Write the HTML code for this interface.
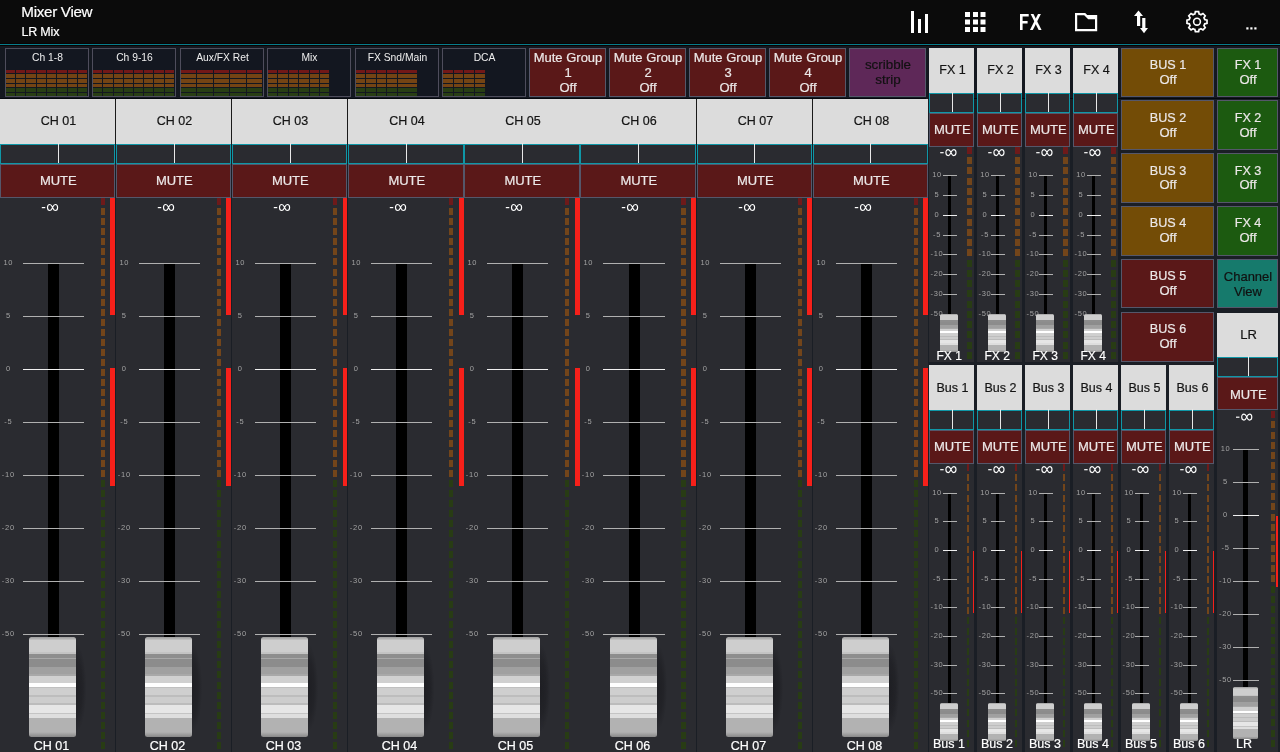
<!DOCTYPE html>
<html><head><meta charset="utf-8"><style>
html,body{margin:0;padding:0;width:1280px;height:752px;overflow:hidden;background:#2a2b30;}
body{position:relative;font-family:"Liberation Sans", sans-serif;}
#w{position:absolute;left:0;top:0;width:1280px;height:752px;will-change:transform;}
#w>div,#w>svg{position:absolute;}
</style></head><body><div id="w">
<div style="left:0px;top:0px;width:1280px;height:43px;background:#0b0b0b;"></div>
<div style="left:0px;top:43px;width:1280px;height:1px;background:#0a0303;"></div>
<div style="left:0px;top:44px;width:1280px;height:1px;background:#077c8b;"></div>
<div style="left:0px;top:45px;width:1280px;height:1px;background:#0a0303;"></div>
<div style="left:0px;top:46px;width:1280px;height:52px;background:#141820;"></div>
<div style="left:0px;top:98px;width:1280px;height:1px;background:#05080e;"></div>
<div style="left:21.30px;top:4.11px;width:120px;height:15.2px;line-height:15.2px;font-size:15.2px;color:#fff;text-align:left;white-space:nowrap;-webkit-text-stroke:0.2px #fff;letter-spacing:-0.3px;">Mixer View</div>
<div style="left:21.50px;top:25.73px;width:120px;height:12.5px;line-height:12.5px;font-size:12.5px;color:#fff;text-align:left;white-space:nowrap;-webkit-text-stroke:0.2px #fff;letter-spacing:-0.2px;">LR Mix</div>
<svg style="left:0;top:0;width:1280px;height:44px" width="1280" height="44">
 <g fill="#fff">
  <rect x="911" y="11" width="3" height="22"/>
  <rect x="918" y="19" width="3" height="14"/>
  <rect x="925" y="14" width="3" height="19"/>
  <rect x="965" y="12" width="5" height="5"/><rect x="973" y="12" width="5" height="5"/><rect x="980.5" y="12" width="5" height="5"/>
  <rect x="965" y="19.5" width="5" height="5"/><rect x="973" y="19.5" width="5" height="5"/><rect x="980.5" y="19.5" width="5" height="5"/>
  <rect x="965" y="27" width="5" height="5"/><rect x="973" y="27" width="5" height="5"/><rect x="980.5" y="27" width="5" height="5"/>
  <path d="M1020 14 H1028.7 V16.6 H1022.6 V21 H1027.6 V23.5 H1022.6 V30 H1020 Z"/>
  <path d="M1030.6 14 H1033.5 L1041.55 30 H1038.65 Z"/><path d="M1038 14 H1040.9 L1032.85 30 H1029.95 Z"/>
  <path d="M1134 16 L1138.5 10.5 L1143 16 L1140.2 16 L1140.2 26 L1137 26 L1137 16 Z"/>
  <path d="M1140 28 L1142.2 28 L1142.2 18 L1145.4 18 L1145.4 28 L1148 28 L1144 33.2 Z"/>
  <rect x="1246.3" y="27.3" width="2.2" height="2.2"/><rect x="1250.3" y="27.3" width="2.2" height="2.2"/><rect x="1254.3" y="27.3" width="2.2" height="2.2"/>
  <path fill-rule="evenodd" d="M1075 13 H1085.2 L1087.2 15 H1097.2 V31.2 H1075 Z M1077.2 15.2 H1084.2 L1088.2 19.3 H1095 V29 H1077.2 Z"/>
 </g>
 <path d="M1194.87 13.99 L1195.38 11.68 L1198.62 11.68 L1199.13 13.99 A8.0 8.0 0 0 1 1200.94 14.74 L1202.94 13.47 L1205.23 15.76 L1203.96 17.76 A8.0 8.0 0 0 1 1204.71 19.57 L1207.02 20.08 L1207.02 23.32 L1204.71 23.83 A8.0 8.0 0 0 1 1203.96 25.64 L1205.23 27.64 L1202.94 29.93 L1200.94 28.66 A8.0 8.0 0 0 1 1199.13 29.41 L1198.62 31.72 L1195.38 31.72 L1194.87 29.41 A8.0 8.0 0 0 1 1193.06 28.66 L1191.06 29.93 L1188.77 27.64 L1190.04 25.64 A8.0 8.0 0 0 1 1189.29 23.83 L1186.98 23.32 L1186.98 20.08 L1189.29 19.57 A8.0 8.0 0 0 1 1190.04 17.76 L1188.77 15.76 L1191.06 13.47 L1193.06 14.74 A8.0 8.0 0 0 1 1194.87 13.99 Z" fill="none" stroke="#fff" stroke-width="1.7"/>
 <circle cx="1197" cy="21.7" r="3.4" fill="none" stroke="#fff" stroke-width="1.6"/>
</svg>
<div style="left:5px;top:48px;width:84px;height:49px;background:#131720;box-sizing:border-box;border:1px solid #4e4d5c;"></div>
<div style="left:5.50px;top:52.99px;width:84px;height:10.3px;line-height:10.3px;font-size:10.3px;color:#eee;text-align:center;white-space:nowrap;-webkit-text-stroke:0.2px #eee;-webkit-text-stroke:0;">Ch 1-8</div>
<div style="left:6px;top:70px;width:9px;height:3px;background:#721818"></div>
<div style="left:6px;top:74px;width:9px;height:4px;background:#744414"></div>
<div style="left:6px;top:79px;width:9px;height:4px;background:#744414"></div>
<div style="left:6px;top:84px;width:9px;height:3px;background:#744414"></div>
<div style="left:6px;top:88px;width:9px;height:4px;background:#283e14"></div>
<div style="left:6px;top:93px;width:9px;height:3px;background:#283e14"></div>
<div style="left:16px;top:70px;width:9px;height:3px;background:#721818"></div>
<div style="left:16px;top:74px;width:9px;height:4px;background:#744414"></div>
<div style="left:16px;top:79px;width:9px;height:4px;background:#744414"></div>
<div style="left:16px;top:84px;width:9px;height:3px;background:#744414"></div>
<div style="left:16px;top:88px;width:9px;height:4px;background:#283e14"></div>
<div style="left:16px;top:93px;width:9px;height:3px;background:#283e14"></div>
<div style="left:26px;top:70px;width:10px;height:3px;background:#721818"></div>
<div style="left:26px;top:74px;width:10px;height:4px;background:#744414"></div>
<div style="left:26px;top:79px;width:10px;height:4px;background:#744414"></div>
<div style="left:26px;top:84px;width:10px;height:3px;background:#744414"></div>
<div style="left:26px;top:88px;width:10px;height:4px;background:#283e14"></div>
<div style="left:26px;top:93px;width:10px;height:3px;background:#283e14"></div>
<div style="left:37px;top:70px;width:9px;height:3px;background:#721818"></div>
<div style="left:37px;top:74px;width:9px;height:4px;background:#744414"></div>
<div style="left:37px;top:79px;width:9px;height:4px;background:#744414"></div>
<div style="left:37px;top:84px;width:9px;height:3px;background:#744414"></div>
<div style="left:37px;top:88px;width:9px;height:4px;background:#283e14"></div>
<div style="left:37px;top:93px;width:9px;height:3px;background:#283e14"></div>
<div style="left:47px;top:70px;width:9px;height:3px;background:#721818"></div>
<div style="left:47px;top:74px;width:9px;height:4px;background:#744414"></div>
<div style="left:47px;top:79px;width:9px;height:4px;background:#744414"></div>
<div style="left:47px;top:84px;width:9px;height:3px;background:#744414"></div>
<div style="left:47px;top:88px;width:9px;height:4px;background:#283e14"></div>
<div style="left:47px;top:93px;width:9px;height:3px;background:#283e14"></div>
<div style="left:57px;top:70px;width:10px;height:3px;background:#721818"></div>
<div style="left:57px;top:74px;width:10px;height:4px;background:#744414"></div>
<div style="left:57px;top:79px;width:10px;height:4px;background:#744414"></div>
<div style="left:57px;top:84px;width:10px;height:3px;background:#744414"></div>
<div style="left:57px;top:88px;width:10px;height:4px;background:#283e14"></div>
<div style="left:57px;top:93px;width:10px;height:3px;background:#283e14"></div>
<div style="left:68px;top:70px;width:9px;height:3px;background:#721818"></div>
<div style="left:68px;top:74px;width:9px;height:4px;background:#744414"></div>
<div style="left:68px;top:79px;width:9px;height:4px;background:#744414"></div>
<div style="left:68px;top:84px;width:9px;height:3px;background:#744414"></div>
<div style="left:68px;top:88px;width:9px;height:4px;background:#283e14"></div>
<div style="left:68px;top:93px;width:9px;height:3px;background:#283e14"></div>
<div style="left:78px;top:70px;width:9px;height:3px;background:#721818"></div>
<div style="left:78px;top:74px;width:9px;height:4px;background:#744414"></div>
<div style="left:78px;top:79px;width:9px;height:4px;background:#744414"></div>
<div style="left:78px;top:84px;width:9px;height:3px;background:#744414"></div>
<div style="left:78px;top:88px;width:9px;height:4px;background:#283e14"></div>
<div style="left:78px;top:93px;width:9px;height:3px;background:#283e14"></div>
<div style="left:92px;top:48px;width:84px;height:49px;background:#131720;box-sizing:border-box;border:1px solid #4e4d5c;"></div>
<div style="left:92.50px;top:52.99px;width:84px;height:10.3px;line-height:10.3px;font-size:10.3px;color:#eee;text-align:center;white-space:nowrap;-webkit-text-stroke:0.2px #eee;-webkit-text-stroke:0;">Ch 9-16</div>
<div style="left:93px;top:70px;width:9px;height:3px;background:#721818"></div>
<div style="left:93px;top:74px;width:9px;height:4px;background:#744414"></div>
<div style="left:93px;top:79px;width:9px;height:4px;background:#744414"></div>
<div style="left:93px;top:84px;width:9px;height:3px;background:#744414"></div>
<div style="left:93px;top:88px;width:9px;height:4px;background:#283e14"></div>
<div style="left:93px;top:93px;width:9px;height:3px;background:#283e14"></div>
<div style="left:103px;top:70px;width:10px;height:3px;background:#721818"></div>
<div style="left:103px;top:74px;width:10px;height:4px;background:#744414"></div>
<div style="left:103px;top:79px;width:10px;height:4px;background:#744414"></div>
<div style="left:103px;top:84px;width:10px;height:3px;background:#744414"></div>
<div style="left:103px;top:88px;width:10px;height:4px;background:#283e14"></div>
<div style="left:103px;top:93px;width:10px;height:3px;background:#283e14"></div>
<div style="left:114px;top:70px;width:9px;height:3px;background:#721818"></div>
<div style="left:114px;top:74px;width:9px;height:4px;background:#744414"></div>
<div style="left:114px;top:79px;width:9px;height:4px;background:#744414"></div>
<div style="left:114px;top:84px;width:9px;height:3px;background:#744414"></div>
<div style="left:114px;top:88px;width:9px;height:4px;background:#283e14"></div>
<div style="left:114px;top:93px;width:9px;height:3px;background:#283e14"></div>
<div style="left:124px;top:70px;width:9px;height:3px;background:#721818"></div>
<div style="left:124px;top:74px;width:9px;height:4px;background:#744414"></div>
<div style="left:124px;top:79px;width:9px;height:4px;background:#744414"></div>
<div style="left:124px;top:84px;width:9px;height:3px;background:#744414"></div>
<div style="left:124px;top:88px;width:9px;height:4px;background:#283e14"></div>
<div style="left:124px;top:93px;width:9px;height:3px;background:#283e14"></div>
<div style="left:134px;top:70px;width:9px;height:3px;background:#721818"></div>
<div style="left:134px;top:74px;width:9px;height:4px;background:#744414"></div>
<div style="left:134px;top:79px;width:9px;height:4px;background:#744414"></div>
<div style="left:134px;top:84px;width:9px;height:3px;background:#744414"></div>
<div style="left:134px;top:88px;width:9px;height:4px;background:#283e14"></div>
<div style="left:134px;top:93px;width:9px;height:3px;background:#283e14"></div>
<div style="left:144px;top:70px;width:9px;height:3px;background:#721818"></div>
<div style="left:144px;top:74px;width:9px;height:4px;background:#744414"></div>
<div style="left:144px;top:79px;width:9px;height:4px;background:#744414"></div>
<div style="left:144px;top:84px;width:9px;height:3px;background:#744414"></div>
<div style="left:144px;top:88px;width:9px;height:4px;background:#283e14"></div>
<div style="left:144px;top:93px;width:9px;height:3px;background:#283e14"></div>
<div style="left:154px;top:70px;width:10px;height:3px;background:#721818"></div>
<div style="left:154px;top:74px;width:10px;height:4px;background:#744414"></div>
<div style="left:154px;top:79px;width:10px;height:4px;background:#744414"></div>
<div style="left:154px;top:84px;width:10px;height:3px;background:#744414"></div>
<div style="left:154px;top:88px;width:10px;height:4px;background:#283e14"></div>
<div style="left:154px;top:93px;width:10px;height:3px;background:#283e14"></div>
<div style="left:165px;top:70px;width:9px;height:3px;background:#721818"></div>
<div style="left:165px;top:74px;width:9px;height:4px;background:#744414"></div>
<div style="left:165px;top:79px;width:9px;height:4px;background:#744414"></div>
<div style="left:165px;top:84px;width:9px;height:3px;background:#744414"></div>
<div style="left:165px;top:88px;width:9px;height:4px;background:#283e14"></div>
<div style="left:165px;top:93px;width:9px;height:3px;background:#283e14"></div>
<div style="left:180px;top:48px;width:84px;height:49px;background:#131720;box-sizing:border-box;border:1px solid #4e4d5c;"></div>
<div style="left:180.50px;top:52.99px;width:84px;height:10.3px;line-height:10.3px;font-size:10.3px;color:#eee;text-align:center;white-space:nowrap;-webkit-text-stroke:0.2px #eee;-webkit-text-stroke:0;">Aux/FX Ret</div>
<div style="left:181px;top:70px;width:15px;height:3px;background:#721818"></div>
<div style="left:181px;top:74px;width:15px;height:4px;background:#744414"></div>
<div style="left:181px;top:79px;width:15px;height:4px;background:#744414"></div>
<div style="left:181px;top:84px;width:15px;height:3px;background:#744414"></div>
<div style="left:181px;top:88px;width:15px;height:4px;background:#283e14"></div>
<div style="left:181px;top:93px;width:15px;height:3px;background:#283e14"></div>
<div style="left:197px;top:70px;width:16px;height:3px;background:#721818"></div>
<div style="left:197px;top:74px;width:16px;height:4px;background:#744414"></div>
<div style="left:197px;top:79px;width:16px;height:4px;background:#744414"></div>
<div style="left:197px;top:84px;width:16px;height:3px;background:#744414"></div>
<div style="left:197px;top:88px;width:16px;height:4px;background:#283e14"></div>
<div style="left:197px;top:93px;width:16px;height:3px;background:#283e14"></div>
<div style="left:214px;top:70px;width:15px;height:3px;background:#721818"></div>
<div style="left:214px;top:74px;width:15px;height:4px;background:#744414"></div>
<div style="left:214px;top:79px;width:15px;height:4px;background:#744414"></div>
<div style="left:214px;top:84px;width:15px;height:3px;background:#744414"></div>
<div style="left:214px;top:88px;width:15px;height:4px;background:#283e14"></div>
<div style="left:214px;top:93px;width:15px;height:3px;background:#283e14"></div>
<div style="left:230px;top:70px;width:16px;height:3px;background:#721818"></div>
<div style="left:230px;top:74px;width:16px;height:4px;background:#744414"></div>
<div style="left:230px;top:79px;width:16px;height:4px;background:#744414"></div>
<div style="left:230px;top:84px;width:16px;height:3px;background:#744414"></div>
<div style="left:230px;top:88px;width:16px;height:4px;background:#283e14"></div>
<div style="left:230px;top:93px;width:16px;height:3px;background:#283e14"></div>
<div style="left:247px;top:70px;width:15px;height:3px;background:#721818"></div>
<div style="left:247px;top:74px;width:15px;height:4px;background:#744414"></div>
<div style="left:247px;top:79px;width:15px;height:4px;background:#744414"></div>
<div style="left:247px;top:84px;width:15px;height:3px;background:#744414"></div>
<div style="left:247px;top:88px;width:15px;height:4px;background:#283e14"></div>
<div style="left:247px;top:93px;width:15px;height:3px;background:#283e14"></div>
<div style="left:267px;top:48px;width:84px;height:49px;background:#131720;box-sizing:border-box;border:1px solid #4e4d5c;"></div>
<div style="left:267.50px;top:52.99px;width:84px;height:10.3px;line-height:10.3px;font-size:10.3px;color:#eee;text-align:center;white-space:nowrap;-webkit-text-stroke:0.2px #eee;-webkit-text-stroke:0;">Mix</div>
<div style="left:268px;top:70px;width:9px;height:3px;background:#721818"></div>
<div style="left:268px;top:74px;width:9px;height:4px;background:#744414"></div>
<div style="left:268px;top:79px;width:9px;height:4px;background:#744414"></div>
<div style="left:268px;top:84px;width:9px;height:3px;background:#744414"></div>
<div style="left:268px;top:88px;width:9px;height:4px;background:#283e14"></div>
<div style="left:268px;top:93px;width:9px;height:3px;background:#283e14"></div>
<div style="left:278px;top:70px;width:10px;height:3px;background:#721818"></div>
<div style="left:278px;top:74px;width:10px;height:4px;background:#744414"></div>
<div style="left:278px;top:79px;width:10px;height:4px;background:#744414"></div>
<div style="left:278px;top:84px;width:10px;height:3px;background:#744414"></div>
<div style="left:278px;top:88px;width:10px;height:4px;background:#283e14"></div>
<div style="left:278px;top:93px;width:10px;height:3px;background:#283e14"></div>
<div style="left:289px;top:70px;width:9px;height:3px;background:#721818"></div>
<div style="left:289px;top:74px;width:9px;height:4px;background:#744414"></div>
<div style="left:289px;top:79px;width:9px;height:4px;background:#744414"></div>
<div style="left:289px;top:84px;width:9px;height:3px;background:#744414"></div>
<div style="left:289px;top:88px;width:9px;height:4px;background:#283e14"></div>
<div style="left:289px;top:93px;width:9px;height:3px;background:#283e14"></div>
<div style="left:299px;top:70px;width:10px;height:3px;background:#721818"></div>
<div style="left:299px;top:74px;width:10px;height:4px;background:#744414"></div>
<div style="left:299px;top:79px;width:10px;height:4px;background:#744414"></div>
<div style="left:299px;top:84px;width:10px;height:3px;background:#744414"></div>
<div style="left:299px;top:88px;width:10px;height:4px;background:#283e14"></div>
<div style="left:299px;top:93px;width:10px;height:3px;background:#283e14"></div>
<div style="left:310px;top:70px;width:9px;height:3px;background:#721818"></div>
<div style="left:310px;top:74px;width:9px;height:4px;background:#744414"></div>
<div style="left:310px;top:79px;width:9px;height:4px;background:#744414"></div>
<div style="left:310px;top:84px;width:9px;height:3px;background:#744414"></div>
<div style="left:310px;top:88px;width:9px;height:4px;background:#283e14"></div>
<div style="left:310px;top:93px;width:9px;height:3px;background:#283e14"></div>
<div style="left:320px;top:70px;width:9px;height:3px;background:#721818"></div>
<div style="left:320px;top:74px;width:9px;height:4px;background:#744414"></div>
<div style="left:320px;top:79px;width:9px;height:4px;background:#744414"></div>
<div style="left:320px;top:84px;width:9px;height:3px;background:#744414"></div>
<div style="left:320px;top:88px;width:9px;height:4px;background:#283e14"></div>
<div style="left:320px;top:93px;width:9px;height:3px;background:#283e14"></div>
<div style="left:355px;top:48px;width:84px;height:49px;background:#131720;box-sizing:border-box;border:1px solid #4e4d5c;"></div>
<div style="left:355.50px;top:52.99px;width:84px;height:10.3px;line-height:10.3px;font-size:10.3px;color:#eee;text-align:center;white-space:nowrap;-webkit-text-stroke:0.2px #eee;-webkit-text-stroke:0;">FX Snd/Main</div>
<div style="left:356px;top:70px;width:9px;height:3px;background:#721818"></div>
<div style="left:356px;top:74px;width:9px;height:4px;background:#744414"></div>
<div style="left:356px;top:79px;width:9px;height:4px;background:#744414"></div>
<div style="left:356px;top:84px;width:9px;height:3px;background:#744414"></div>
<div style="left:356px;top:88px;width:9px;height:4px;background:#283e14"></div>
<div style="left:356px;top:93px;width:9px;height:3px;background:#283e14"></div>
<div style="left:366px;top:70px;width:10px;height:3px;background:#721818"></div>
<div style="left:366px;top:74px;width:10px;height:4px;background:#744414"></div>
<div style="left:366px;top:79px;width:10px;height:4px;background:#744414"></div>
<div style="left:366px;top:84px;width:10px;height:3px;background:#744414"></div>
<div style="left:366px;top:88px;width:10px;height:4px;background:#283e14"></div>
<div style="left:366px;top:93px;width:10px;height:3px;background:#283e14"></div>
<div style="left:377px;top:70px;width:9px;height:3px;background:#721818"></div>
<div style="left:377px;top:74px;width:9px;height:4px;background:#744414"></div>
<div style="left:377px;top:79px;width:9px;height:4px;background:#744414"></div>
<div style="left:377px;top:84px;width:9px;height:3px;background:#744414"></div>
<div style="left:377px;top:88px;width:9px;height:4px;background:#283e14"></div>
<div style="left:377px;top:93px;width:9px;height:3px;background:#283e14"></div>
<div style="left:387px;top:70px;width:10px;height:3px;background:#721818"></div>
<div style="left:387px;top:74px;width:10px;height:4px;background:#744414"></div>
<div style="left:387px;top:79px;width:10px;height:4px;background:#744414"></div>
<div style="left:387px;top:84px;width:10px;height:3px;background:#744414"></div>
<div style="left:387px;top:88px;width:10px;height:4px;background:#283e14"></div>
<div style="left:387px;top:93px;width:10px;height:3px;background:#283e14"></div>
<div style="left:398px;top:70px;width:19px;height:3px;background:#721818"></div>
<div style="left:398px;top:74px;width:19px;height:4px;background:#744414"></div>
<div style="left:398px;top:79px;width:19px;height:4px;background:#744414"></div>
<div style="left:398px;top:84px;width:19px;height:3px;background:#744414"></div>
<div style="left:398px;top:88px;width:19px;height:4px;background:#283e14"></div>
<div style="left:398px;top:93px;width:19px;height:3px;background:#283e14"></div>
<div style="left:442px;top:48px;width:84px;height:49px;background:#131720;box-sizing:border-box;border:1px solid #4e4d5c;"></div>
<div style="left:442.50px;top:52.99px;width:84px;height:10.3px;line-height:10.3px;font-size:10.3px;color:#eee;text-align:center;white-space:nowrap;-webkit-text-stroke:0.2px #eee;-webkit-text-stroke:0;">DCA</div>
<div style="left:443px;top:70px;width:10px;height:3px;background:#721818"></div>
<div style="left:443px;top:74px;width:10px;height:4px;background:#744414"></div>
<div style="left:443px;top:79px;width:10px;height:4px;background:#744414"></div>
<div style="left:443px;top:84px;width:10px;height:3px;background:#744414"></div>
<div style="left:443px;top:88px;width:10px;height:4px;background:#283e14"></div>
<div style="left:443px;top:93px;width:10px;height:3px;background:#283e14"></div>
<div style="left:454px;top:70px;width:9px;height:3px;background:#721818"></div>
<div style="left:454px;top:74px;width:9px;height:4px;background:#744414"></div>
<div style="left:454px;top:79px;width:9px;height:4px;background:#744414"></div>
<div style="left:454px;top:84px;width:9px;height:3px;background:#744414"></div>
<div style="left:454px;top:88px;width:9px;height:4px;background:#283e14"></div>
<div style="left:454px;top:93px;width:9px;height:3px;background:#283e14"></div>
<div style="left:464px;top:70px;width:10px;height:3px;background:#721818"></div>
<div style="left:464px;top:74px;width:10px;height:4px;background:#744414"></div>
<div style="left:464px;top:79px;width:10px;height:4px;background:#744414"></div>
<div style="left:464px;top:84px;width:10px;height:3px;background:#744414"></div>
<div style="left:464px;top:88px;width:10px;height:4px;background:#283e14"></div>
<div style="left:464px;top:93px;width:10px;height:3px;background:#283e14"></div>
<div style="left:475px;top:70px;width:10px;height:3px;background:#721818"></div>
<div style="left:475px;top:74px;width:10px;height:4px;background:#744414"></div>
<div style="left:475px;top:79px;width:10px;height:4px;background:#744414"></div>
<div style="left:475px;top:84px;width:10px;height:3px;background:#744414"></div>
<div style="left:475px;top:88px;width:10px;height:4px;background:#283e14"></div>
<div style="left:475px;top:93px;width:10px;height:3px;background:#283e14"></div>
<div style="left:529px;top:48px;width:77px;height:49px;background:#5a1818;box-sizing:border-box;border:1px solid #55576a;"></div>
<div style="left:529.50px;top:51.47px;width:77px;height:13px;line-height:13px;font-size:13px;color:#ece8e8;text-align:center;white-space:nowrap;-webkit-text-stroke:0.2px #ece8e8;">Mute Group</div>
<div style="left:529.50px;top:65.97px;width:77px;height:13px;line-height:13px;font-size:13px;color:#ece8e8;text-align:center;white-space:nowrap;-webkit-text-stroke:0.2px #ece8e8;">1</div>
<div style="left:529.50px;top:81.07px;width:77px;height:13px;line-height:13px;font-size:13px;color:#ece8e8;text-align:center;white-space:nowrap;-webkit-text-stroke:0.2px #ece8e8;">Off</div>
<div style="left:609px;top:48px;width:77px;height:49px;background:#5a1818;box-sizing:border-box;border:1px solid #55576a;"></div>
<div style="left:609.50px;top:51.47px;width:77px;height:13px;line-height:13px;font-size:13px;color:#ece8e8;text-align:center;white-space:nowrap;-webkit-text-stroke:0.2px #ece8e8;">Mute Group</div>
<div style="left:609.50px;top:65.97px;width:77px;height:13px;line-height:13px;font-size:13px;color:#ece8e8;text-align:center;white-space:nowrap;-webkit-text-stroke:0.2px #ece8e8;">2</div>
<div style="left:609.50px;top:81.07px;width:77px;height:13px;line-height:13px;font-size:13px;color:#ece8e8;text-align:center;white-space:nowrap;-webkit-text-stroke:0.2px #ece8e8;">Off</div>
<div style="left:689px;top:48px;width:77px;height:49px;background:#5a1818;box-sizing:border-box;border:1px solid #55576a;"></div>
<div style="left:689.50px;top:51.47px;width:77px;height:13px;line-height:13px;font-size:13px;color:#ece8e8;text-align:center;white-space:nowrap;-webkit-text-stroke:0.2px #ece8e8;">Mute Group</div>
<div style="left:689.50px;top:65.97px;width:77px;height:13px;line-height:13px;font-size:13px;color:#ece8e8;text-align:center;white-space:nowrap;-webkit-text-stroke:0.2px #ece8e8;">3</div>
<div style="left:689.50px;top:81.07px;width:77px;height:13px;line-height:13px;font-size:13px;color:#ece8e8;text-align:center;white-space:nowrap;-webkit-text-stroke:0.2px #ece8e8;">Off</div>
<div style="left:769px;top:48px;width:77px;height:49px;background:#5a1818;box-sizing:border-box;border:1px solid #55576a;"></div>
<div style="left:769.50px;top:51.47px;width:77px;height:13px;line-height:13px;font-size:13px;color:#ece8e8;text-align:center;white-space:nowrap;-webkit-text-stroke:0.2px #ece8e8;">Mute Group</div>
<div style="left:769.50px;top:65.97px;width:77px;height:13px;line-height:13px;font-size:13px;color:#ece8e8;text-align:center;white-space:nowrap;-webkit-text-stroke:0.2px #ece8e8;">4</div>
<div style="left:769.50px;top:81.07px;width:77px;height:13px;line-height:13px;font-size:13px;color:#ece8e8;text-align:center;white-space:nowrap;-webkit-text-stroke:0.2px #ece8e8;">Off</div>
<div style="left:849px;top:48px;width:77px;height:49px;background:#5e2858;box-sizing:border-box;border:1px solid #55576a;"></div>
<div style="left:849.50px;top:57.73px;width:77px;height:13.4px;line-height:13.4px;font-size:13.4px;color:#111;text-align:center;white-space:nowrap;-webkit-text-stroke:0.2px #111;">scribble</div>
<div style="left:849.50px;top:72.93px;width:77px;height:13.4px;line-height:13.4px;font-size:13.4px;color:#111;text-align:center;white-space:nowrap;-webkit-text-stroke:0.2px #111;">strip</div>
<div style="left:0px;top:198px;width:116px;height:554px;background:#2a2b30;"></div>
<div style="left:115px;top:99px;width:1px;height:653px;background:#1a1e25;"></div>
<div style="left:0px;top:99px;width:115px;height:45px;background:#dcdcdc;"></div>
<div style="left:-9.00px;top:114.73px;width:135px;height:12.5px;line-height:12.5px;font-size:12.5px;color:#141414;text-align:center;white-space:nowrap;-webkit-text-stroke:0.2px #141414;">CH 01</div>
<div style="left:0px;top:144px;width:115px;height:20px;background:#2a2b30;box-sizing:border-box;border:1px solid #0f97a7;"></div>
<div style="left:58px;top:143px;width:1px;height:20px;background:#e8e8e8;"></div>
<div style="left:0px;top:164px;width:115px;height:34px;background:#5a1818;box-sizing:border-box;border:1px solid #55576a;"></div>
<div style="left:-9.20px;top:174.17px;width:135px;height:13px;line-height:13px;font-size:13px;color:#ece8e8;text-align:center;white-space:nowrap;-webkit-text-stroke:0.2px #ece8e8;">MUTE</div>
<svg style="left:40px;top:202px;width:20px;height:10px" width="20" height="10"><rect x="1.80" y="5.00" width="3.45" height="1.2" fill="#fff"/><path d="M12.55 5.50 C13.75 3.00 13.80 2.50 15.30 2.50 C16.90 2.50 17.60 3.80 17.60 5.50 C17.60 7.20 16.90 8.50 15.30 8.50 C13.80 8.50 13.75 8.00 12.55 5.50 C11.35 3.00 11.30 2.50 9.80 2.50 C8.20 2.50 7.50 3.80 7.50 5.50 C7.50 7.20 8.20 8.50 9.80 8.50 C11.30 8.50 11.35 8.00 12.55 5.50 Z" fill="none" stroke="#fff" stroke-width="1.15"/></svg>
<div style="left:48px;top:264px;width:11px;height:378px;background:#000;"></div>
<div style="left:23px;top:263px;width:61px;height:1px;background:#b0b0b0;"></div>
<div style="left:-6.70px;top:259.22px;width:30px;height:7.5px;line-height:7.5px;font-size:7.5px;color:#a2a2a2;text-align:center;white-space:nowrap;-webkit-text-stroke:0.2px #a2a2a2;letter-spacing:0.7px;-webkit-text-stroke:0;">10</div>
<div style="left:23px;top:316px;width:61px;height:1px;background:#b0b0b0;"></div>
<div style="left:-6.70px;top:312.22px;width:30px;height:7.5px;line-height:7.5px;font-size:7.5px;color:#a2a2a2;text-align:center;white-space:nowrap;-webkit-text-stroke:0.2px #a2a2a2;letter-spacing:0.7px;-webkit-text-stroke:0;">5</div>
<div style="left:23px;top:369px;width:61px;height:1px;background:#f0f0f0;"></div>
<div style="left:-6.70px;top:365.22px;width:30px;height:7.5px;line-height:7.5px;font-size:7.5px;color:#a2a2a2;text-align:center;white-space:nowrap;-webkit-text-stroke:0.2px #a2a2a2;letter-spacing:0.7px;-webkit-text-stroke:0;">0</div>
<div style="left:23px;top:422px;width:61px;height:1px;background:#b0b0b0;"></div>
<div style="left:-6.70px;top:418.22px;width:30px;height:7.5px;line-height:7.5px;font-size:7.5px;color:#a2a2a2;text-align:center;white-space:nowrap;-webkit-text-stroke:0.2px #a2a2a2;letter-spacing:0.7px;-webkit-text-stroke:0;">-5</div>
<div style="left:23px;top:475px;width:61px;height:1px;background:#b0b0b0;"></div>
<div style="left:-6.70px;top:471.22px;width:30px;height:7.5px;line-height:7.5px;font-size:7.5px;color:#a2a2a2;text-align:center;white-space:nowrap;-webkit-text-stroke:0.2px #a2a2a2;letter-spacing:0.7px;-webkit-text-stroke:0;">-10</div>
<div style="left:23px;top:528px;width:61px;height:1px;background:#b0b0b0;"></div>
<div style="left:-6.70px;top:524.22px;width:30px;height:7.5px;line-height:7.5px;font-size:7.5px;color:#a2a2a2;text-align:center;white-space:nowrap;-webkit-text-stroke:0.2px #a2a2a2;letter-spacing:0.7px;-webkit-text-stroke:0;">-20</div>
<div style="left:23px;top:581px;width:61px;height:1px;background:#b0b0b0;"></div>
<div style="left:-6.70px;top:577.22px;width:30px;height:7.5px;line-height:7.5px;font-size:7.5px;color:#a2a2a2;text-align:center;white-space:nowrap;-webkit-text-stroke:0.2px #a2a2a2;letter-spacing:0.7px;-webkit-text-stroke:0;">-30</div>
<div style="left:23px;top:634px;width:61px;height:1px;background:#b0b0b0;"></div>
<div style="left:-6.70px;top:630.22px;width:30px;height:7.5px;line-height:7.5px;font-size:7.5px;color:#a2a2a2;text-align:center;white-space:nowrap;-webkit-text-stroke:0.2px #a2a2a2;letter-spacing:0.7px;-webkit-text-stroke:0;">-50</div>
<div style="left:66px;top:645px;width:20px;height:86px;background:radial-gradient(ellipse at 50% 50%, rgba(20,20,24,0.55) 0%, rgba(20,20,24,0.35) 45%, rgba(20,20,24,0) 72%);"></div>
<div style="left:29px;top:637px;width:47px;height:100px;background:linear-gradient(to bottom,#9c9c9c 0%,#cacaca 3.4%,#cecece 3.5%,#cecece 14.5%,#c4c4c4 14.6%,#c4c4c4 17%,#8e8e8e 17.1%,#8e8e8e 21%,#a8a8a8 21.1%,#a8a8a8 22%,#8c8c8c 22.1%,#8c8c8c 29.7%,#a0a0a0 29.8%,#a0a0a0 36.5%,#a8a8a8 36.6%,#a8a8a8 39%,#d0d0d0 39.1%,#d0d0d0 45.7%,#ffffff 45.8%,#ffffff 50%,#c0c0c0 50.1%,#c0c0c0 51.2%,#cfcfcf 51.3%,#cfcfcf 58.4%,#bdbdbd 58.5%,#bdbdbd 60%,#cdcdcd 60.1%,#cdcdcd 66%,#bcbcbc 66.1%,#bcbcbc 67.6%,#e6e6e6 67.7%,#e6e6e6 75.5%,#c4c4c4 75.6%,#c4c4c4 77.1%,#dedede 77.2%,#dedede 80.7%,#b2b2b2 80.8%,#b2b2b2 95%,#888888 100%);border-radius:2.5px;"></div>
<div style="left:1.50px;top:739.73px;width:100px;height:12.5px;line-height:12.5px;font-size:12.5px;color:#fff;text-align:center;white-space:nowrap;-webkit-text-stroke:0.2px #fff;">CH 01</div>
<div style="left:101px;top:198.00px;width:4px;height:7.00px;background:#6e1a1a"></div>
<div style="left:101px;top:208.07px;width:4px;height:7.00px;background:#73451a"></div>
<div style="left:101px;top:218.15px;width:4px;height:7.00px;background:#73451a"></div>
<div style="left:101px;top:228.22px;width:4px;height:7.00px;background:#73451a"></div>
<div style="left:101px;top:238.30px;width:4px;height:7.00px;background:#73451a"></div>
<div style="left:101px;top:248.37px;width:4px;height:7.00px;background:#73451a"></div>
<div style="left:101px;top:258.44px;width:4px;height:7.00px;background:#73451a"></div>
<div style="left:101px;top:268.52px;width:4px;height:7.00px;background:#73451a"></div>
<div style="left:101px;top:278.59px;width:4px;height:7.00px;background:#73451a"></div>
<div style="left:101px;top:288.67px;width:4px;height:7.00px;background:#73451a"></div>
<div style="left:101px;top:298.74px;width:4px;height:7.00px;background:#73451a"></div>
<div style="left:101px;top:308.81px;width:4px;height:7.00px;background:#73451a"></div>
<div style="left:101px;top:318.89px;width:4px;height:7.00px;background:#73451a"></div>
<div style="left:101px;top:328.96px;width:4px;height:7.00px;background:#73451a"></div>
<div style="left:101px;top:339.04px;width:4px;height:7.00px;background:#73451a"></div>
<div style="left:101px;top:349.11px;width:4px;height:7.00px;background:#73451a"></div>
<div style="left:101px;top:359.18px;width:4px;height:7.00px;background:#73451a"></div>
<div style="left:101px;top:369.26px;width:4px;height:7.00px;background:#73451a"></div>
<div style="left:101px;top:379.33px;width:4px;height:7.00px;background:#73451a"></div>
<div style="left:101px;top:389.41px;width:4px;height:7.00px;background:#73451a"></div>
<div style="left:101px;top:399.48px;width:4px;height:7.00px;background:#73451a"></div>
<div style="left:101px;top:409.55px;width:4px;height:7.00px;background:#73451a"></div>
<div style="left:101px;top:419.63px;width:4px;height:7.00px;background:#73451a"></div>
<div style="left:101px;top:429.70px;width:4px;height:7.00px;background:#73451a"></div>
<div style="left:101px;top:439.78px;width:4px;height:7.00px;background:#73451a"></div>
<div style="left:101px;top:449.85px;width:4px;height:7.00px;background:#73451a"></div>
<div style="left:101px;top:459.92px;width:4px;height:7.00px;background:#73451a"></div>
<div style="left:101px;top:470.00px;width:4px;height:7.00px;background:#73451a"></div>
<div style="left:101px;top:480.07px;width:4px;height:7.00px;background:#283c14"></div>
<div style="left:101px;top:490.15px;width:4px;height:7.00px;background:#283c14"></div>
<div style="left:101px;top:500.22px;width:4px;height:7.00px;background:#283c14"></div>
<div style="left:101px;top:510.29px;width:4px;height:7.00px;background:#283c14"></div>
<div style="left:101px;top:520.37px;width:4px;height:7.00px;background:#283c14"></div>
<div style="left:101px;top:530.44px;width:4px;height:7.00px;background:#283c14"></div>
<div style="left:101px;top:540.52px;width:4px;height:7.00px;background:#283c14"></div>
<div style="left:101px;top:550.59px;width:4px;height:7.00px;background:#283c14"></div>
<div style="left:101px;top:560.66px;width:4px;height:7.00px;background:#283c14"></div>
<div style="left:101px;top:570.74px;width:4px;height:7.00px;background:#283c14"></div>
<div style="left:101px;top:580.81px;width:4px;height:7.00px;background:#283c14"></div>
<div style="left:101px;top:590.89px;width:4px;height:7.00px;background:#283c14"></div>
<div style="left:101px;top:600.96px;width:4px;height:7.00px;background:#283c14"></div>
<div style="left:101px;top:611.03px;width:4px;height:7.00px;background:#283c14"></div>
<div style="left:101px;top:621.11px;width:4px;height:7.00px;background:#283c14"></div>
<div style="left:101px;top:631.18px;width:4px;height:7.00px;background:#283c14"></div>
<div style="left:101px;top:641.26px;width:4px;height:7.00px;background:#283c14"></div>
<div style="left:101px;top:651.33px;width:4px;height:7.00px;background:#283c14"></div>
<div style="left:101px;top:661.40px;width:4px;height:7.00px;background:#283c14"></div>
<div style="left:101px;top:671.48px;width:4px;height:7.00px;background:#283c14"></div>
<div style="left:101px;top:681.55px;width:4px;height:7.00px;background:#283c14"></div>
<div style="left:101px;top:691.63px;width:4px;height:7.00px;background:#283c14"></div>
<div style="left:101px;top:701.70px;width:4px;height:7.00px;background:#283c14"></div>
<div style="left:101px;top:711.77px;width:4px;height:7.00px;background:#283c14"></div>
<div style="left:101px;top:721.85px;width:4px;height:7.00px;background:#283c14"></div>
<div style="left:101px;top:731.92px;width:4px;height:7.00px;background:#283c14"></div>
<div style="left:101px;top:742.00px;width:4px;height:7.00px;background:#283c14"></div>
<div style="left:110px;top:198px;width:5px;height:117px;background:#f6201a;"></div>
<div style="left:110px;top:368px;width:5px;height:118px;background:#f6201a;"></div>
<div style="left:115px;top:99px;width:1px;height:45px;background:#1a1a1a;"></div>
<div style="left:116px;top:198px;width:116px;height:554px;background:#2a2b30;"></div>
<div style="left:231px;top:99px;width:1px;height:653px;background:#1a1e25;"></div>
<div style="left:116px;top:99px;width:115px;height:45px;background:#dcdcdc;"></div>
<div style="left:107.00px;top:114.73px;width:135px;height:12.5px;line-height:12.5px;font-size:12.5px;color:#141414;text-align:center;white-space:nowrap;-webkit-text-stroke:0.2px #141414;">CH 02</div>
<div style="left:116px;top:144px;width:115px;height:20px;background:#2a2b30;box-sizing:border-box;border:1px solid #0f97a7;"></div>
<div style="left:174px;top:143px;width:1px;height:20px;background:#e8e8e8;"></div>
<div style="left:116px;top:164px;width:115px;height:34px;background:#5a1818;box-sizing:border-box;border:1px solid #55576a;"></div>
<div style="left:106.80px;top:174.17px;width:135px;height:13px;line-height:13px;font-size:13px;color:#ece8e8;text-align:center;white-space:nowrap;-webkit-text-stroke:0.2px #ece8e8;">MUTE</div>
<svg style="left:156px;top:202px;width:20px;height:10px" width="20" height="10"><rect x="1.80" y="5.00" width="3.45" height="1.2" fill="#fff"/><path d="M12.55 5.50 C13.75 3.00 13.80 2.50 15.30 2.50 C16.90 2.50 17.60 3.80 17.60 5.50 C17.60 7.20 16.90 8.50 15.30 8.50 C13.80 8.50 13.75 8.00 12.55 5.50 C11.35 3.00 11.30 2.50 9.80 2.50 C8.20 2.50 7.50 3.80 7.50 5.50 C7.50 7.20 8.20 8.50 9.80 8.50 C11.30 8.50 11.35 8.00 12.55 5.50 Z" fill="none" stroke="#fff" stroke-width="1.15"/></svg>
<div style="left:164px;top:264px;width:11px;height:378px;background:#000;"></div>
<div style="left:139px;top:263px;width:61px;height:1px;background:#b0b0b0;"></div>
<div style="left:109.30px;top:259.22px;width:30px;height:7.5px;line-height:7.5px;font-size:7.5px;color:#a2a2a2;text-align:center;white-space:nowrap;-webkit-text-stroke:0.2px #a2a2a2;letter-spacing:0.7px;-webkit-text-stroke:0;">10</div>
<div style="left:139px;top:316px;width:61px;height:1px;background:#b0b0b0;"></div>
<div style="left:109.30px;top:312.22px;width:30px;height:7.5px;line-height:7.5px;font-size:7.5px;color:#a2a2a2;text-align:center;white-space:nowrap;-webkit-text-stroke:0.2px #a2a2a2;letter-spacing:0.7px;-webkit-text-stroke:0;">5</div>
<div style="left:139px;top:369px;width:61px;height:1px;background:#f0f0f0;"></div>
<div style="left:109.30px;top:365.22px;width:30px;height:7.5px;line-height:7.5px;font-size:7.5px;color:#a2a2a2;text-align:center;white-space:nowrap;-webkit-text-stroke:0.2px #a2a2a2;letter-spacing:0.7px;-webkit-text-stroke:0;">0</div>
<div style="left:139px;top:422px;width:61px;height:1px;background:#b0b0b0;"></div>
<div style="left:109.30px;top:418.22px;width:30px;height:7.5px;line-height:7.5px;font-size:7.5px;color:#a2a2a2;text-align:center;white-space:nowrap;-webkit-text-stroke:0.2px #a2a2a2;letter-spacing:0.7px;-webkit-text-stroke:0;">-5</div>
<div style="left:139px;top:475px;width:61px;height:1px;background:#b0b0b0;"></div>
<div style="left:109.30px;top:471.22px;width:30px;height:7.5px;line-height:7.5px;font-size:7.5px;color:#a2a2a2;text-align:center;white-space:nowrap;-webkit-text-stroke:0.2px #a2a2a2;letter-spacing:0.7px;-webkit-text-stroke:0;">-10</div>
<div style="left:139px;top:528px;width:61px;height:1px;background:#b0b0b0;"></div>
<div style="left:109.30px;top:524.22px;width:30px;height:7.5px;line-height:7.5px;font-size:7.5px;color:#a2a2a2;text-align:center;white-space:nowrap;-webkit-text-stroke:0.2px #a2a2a2;letter-spacing:0.7px;-webkit-text-stroke:0;">-20</div>
<div style="left:139px;top:581px;width:61px;height:1px;background:#b0b0b0;"></div>
<div style="left:109.30px;top:577.22px;width:30px;height:7.5px;line-height:7.5px;font-size:7.5px;color:#a2a2a2;text-align:center;white-space:nowrap;-webkit-text-stroke:0.2px #a2a2a2;letter-spacing:0.7px;-webkit-text-stroke:0;">-30</div>
<div style="left:139px;top:634px;width:61px;height:1px;background:#b0b0b0;"></div>
<div style="left:109.30px;top:630.22px;width:30px;height:7.5px;line-height:7.5px;font-size:7.5px;color:#a2a2a2;text-align:center;white-space:nowrap;-webkit-text-stroke:0.2px #a2a2a2;letter-spacing:0.7px;-webkit-text-stroke:0;">-50</div>
<div style="left:182px;top:645px;width:20px;height:86px;background:radial-gradient(ellipse at 50% 50%, rgba(20,20,24,0.55) 0%, rgba(20,20,24,0.35) 45%, rgba(20,20,24,0) 72%);"></div>
<div style="left:145px;top:637px;width:47px;height:100px;background:linear-gradient(to bottom,#9c9c9c 0%,#cacaca 3.4%,#cecece 3.5%,#cecece 14.5%,#c4c4c4 14.6%,#c4c4c4 17%,#8e8e8e 17.1%,#8e8e8e 21%,#a8a8a8 21.1%,#a8a8a8 22%,#8c8c8c 22.1%,#8c8c8c 29.7%,#a0a0a0 29.8%,#a0a0a0 36.5%,#a8a8a8 36.6%,#a8a8a8 39%,#d0d0d0 39.1%,#d0d0d0 45.7%,#ffffff 45.8%,#ffffff 50%,#c0c0c0 50.1%,#c0c0c0 51.2%,#cfcfcf 51.3%,#cfcfcf 58.4%,#bdbdbd 58.5%,#bdbdbd 60%,#cdcdcd 60.1%,#cdcdcd 66%,#bcbcbc 66.1%,#bcbcbc 67.6%,#e6e6e6 67.7%,#e6e6e6 75.5%,#c4c4c4 75.6%,#c4c4c4 77.1%,#dedede 77.2%,#dedede 80.7%,#b2b2b2 80.8%,#b2b2b2 95%,#888888 100%);border-radius:2.5px;"></div>
<div style="left:117.50px;top:739.73px;width:100px;height:12.5px;line-height:12.5px;font-size:12.5px;color:#fff;text-align:center;white-space:nowrap;-webkit-text-stroke:0.2px #fff;">CH 02</div>
<div style="left:217px;top:198.00px;width:4px;height:7.00px;background:#6e1a1a"></div>
<div style="left:217px;top:208.07px;width:4px;height:7.00px;background:#73451a"></div>
<div style="left:217px;top:218.15px;width:4px;height:7.00px;background:#73451a"></div>
<div style="left:217px;top:228.22px;width:4px;height:7.00px;background:#73451a"></div>
<div style="left:217px;top:238.30px;width:4px;height:7.00px;background:#73451a"></div>
<div style="left:217px;top:248.37px;width:4px;height:7.00px;background:#73451a"></div>
<div style="left:217px;top:258.44px;width:4px;height:7.00px;background:#73451a"></div>
<div style="left:217px;top:268.52px;width:4px;height:7.00px;background:#73451a"></div>
<div style="left:217px;top:278.59px;width:4px;height:7.00px;background:#73451a"></div>
<div style="left:217px;top:288.67px;width:4px;height:7.00px;background:#73451a"></div>
<div style="left:217px;top:298.74px;width:4px;height:7.00px;background:#73451a"></div>
<div style="left:217px;top:308.81px;width:4px;height:7.00px;background:#73451a"></div>
<div style="left:217px;top:318.89px;width:4px;height:7.00px;background:#73451a"></div>
<div style="left:217px;top:328.96px;width:4px;height:7.00px;background:#73451a"></div>
<div style="left:217px;top:339.04px;width:4px;height:7.00px;background:#73451a"></div>
<div style="left:217px;top:349.11px;width:4px;height:7.00px;background:#73451a"></div>
<div style="left:217px;top:359.18px;width:4px;height:7.00px;background:#73451a"></div>
<div style="left:217px;top:369.26px;width:4px;height:7.00px;background:#73451a"></div>
<div style="left:217px;top:379.33px;width:4px;height:7.00px;background:#73451a"></div>
<div style="left:217px;top:389.41px;width:4px;height:7.00px;background:#73451a"></div>
<div style="left:217px;top:399.48px;width:4px;height:7.00px;background:#73451a"></div>
<div style="left:217px;top:409.55px;width:4px;height:7.00px;background:#73451a"></div>
<div style="left:217px;top:419.63px;width:4px;height:7.00px;background:#73451a"></div>
<div style="left:217px;top:429.70px;width:4px;height:7.00px;background:#73451a"></div>
<div style="left:217px;top:439.78px;width:4px;height:7.00px;background:#73451a"></div>
<div style="left:217px;top:449.85px;width:4px;height:7.00px;background:#73451a"></div>
<div style="left:217px;top:459.92px;width:4px;height:7.00px;background:#73451a"></div>
<div style="left:217px;top:470.00px;width:4px;height:7.00px;background:#73451a"></div>
<div style="left:217px;top:480.07px;width:4px;height:7.00px;background:#283c14"></div>
<div style="left:217px;top:490.15px;width:4px;height:7.00px;background:#283c14"></div>
<div style="left:217px;top:500.22px;width:4px;height:7.00px;background:#283c14"></div>
<div style="left:217px;top:510.29px;width:4px;height:7.00px;background:#283c14"></div>
<div style="left:217px;top:520.37px;width:4px;height:7.00px;background:#283c14"></div>
<div style="left:217px;top:530.44px;width:4px;height:7.00px;background:#283c14"></div>
<div style="left:217px;top:540.52px;width:4px;height:7.00px;background:#283c14"></div>
<div style="left:217px;top:550.59px;width:4px;height:7.00px;background:#283c14"></div>
<div style="left:217px;top:560.66px;width:4px;height:7.00px;background:#283c14"></div>
<div style="left:217px;top:570.74px;width:4px;height:7.00px;background:#283c14"></div>
<div style="left:217px;top:580.81px;width:4px;height:7.00px;background:#283c14"></div>
<div style="left:217px;top:590.89px;width:4px;height:7.00px;background:#283c14"></div>
<div style="left:217px;top:600.96px;width:4px;height:7.00px;background:#283c14"></div>
<div style="left:217px;top:611.03px;width:4px;height:7.00px;background:#283c14"></div>
<div style="left:217px;top:621.11px;width:4px;height:7.00px;background:#283c14"></div>
<div style="left:217px;top:631.18px;width:4px;height:7.00px;background:#283c14"></div>
<div style="left:217px;top:641.26px;width:4px;height:7.00px;background:#283c14"></div>
<div style="left:217px;top:651.33px;width:4px;height:7.00px;background:#283c14"></div>
<div style="left:217px;top:661.40px;width:4px;height:7.00px;background:#283c14"></div>
<div style="left:217px;top:671.48px;width:4px;height:7.00px;background:#283c14"></div>
<div style="left:217px;top:681.55px;width:4px;height:7.00px;background:#283c14"></div>
<div style="left:217px;top:691.63px;width:4px;height:7.00px;background:#283c14"></div>
<div style="left:217px;top:701.70px;width:4px;height:7.00px;background:#283c14"></div>
<div style="left:217px;top:711.77px;width:4px;height:7.00px;background:#283c14"></div>
<div style="left:217px;top:721.85px;width:4px;height:7.00px;background:#283c14"></div>
<div style="left:217px;top:731.92px;width:4px;height:7.00px;background:#283c14"></div>
<div style="left:217px;top:742.00px;width:4px;height:7.00px;background:#283c14"></div>
<div style="left:226px;top:198px;width:5px;height:117px;background:#f6201a;"></div>
<div style="left:226px;top:368px;width:5px;height:118px;background:#f6201a;"></div>
<div style="left:231px;top:99px;width:1px;height:45px;background:#1a1a1a;"></div>
<div style="left:232px;top:198px;width:116px;height:554px;background:#2a2b30;"></div>
<div style="left:347px;top:99px;width:1px;height:653px;background:#1a1e25;"></div>
<div style="left:232px;top:99px;width:115px;height:45px;background:#dcdcdc;"></div>
<div style="left:223.00px;top:114.73px;width:135px;height:12.5px;line-height:12.5px;font-size:12.5px;color:#141414;text-align:center;white-space:nowrap;-webkit-text-stroke:0.2px #141414;">CH 03</div>
<div style="left:232px;top:144px;width:115px;height:20px;background:#2a2b30;box-sizing:border-box;border:1px solid #0f97a7;"></div>
<div style="left:290px;top:143px;width:1px;height:20px;background:#e8e8e8;"></div>
<div style="left:232px;top:164px;width:115px;height:34px;background:#5a1818;box-sizing:border-box;border:1px solid #55576a;"></div>
<div style="left:222.80px;top:174.17px;width:135px;height:13px;line-height:13px;font-size:13px;color:#ece8e8;text-align:center;white-space:nowrap;-webkit-text-stroke:0.2px #ece8e8;">MUTE</div>
<svg style="left:272px;top:202px;width:20px;height:10px" width="20" height="10"><rect x="1.80" y="5.00" width="3.45" height="1.2" fill="#fff"/><path d="M12.55 5.50 C13.75 3.00 13.80 2.50 15.30 2.50 C16.90 2.50 17.60 3.80 17.60 5.50 C17.60 7.20 16.90 8.50 15.30 8.50 C13.80 8.50 13.75 8.00 12.55 5.50 C11.35 3.00 11.30 2.50 9.80 2.50 C8.20 2.50 7.50 3.80 7.50 5.50 C7.50 7.20 8.20 8.50 9.80 8.50 C11.30 8.50 11.35 8.00 12.55 5.50 Z" fill="none" stroke="#fff" stroke-width="1.15"/></svg>
<div style="left:280px;top:264px;width:11px;height:378px;background:#000;"></div>
<div style="left:255px;top:263px;width:61px;height:1px;background:#b0b0b0;"></div>
<div style="left:225.30px;top:259.22px;width:30px;height:7.5px;line-height:7.5px;font-size:7.5px;color:#a2a2a2;text-align:center;white-space:nowrap;-webkit-text-stroke:0.2px #a2a2a2;letter-spacing:0.7px;-webkit-text-stroke:0;">10</div>
<div style="left:255px;top:316px;width:61px;height:1px;background:#b0b0b0;"></div>
<div style="left:225.30px;top:312.22px;width:30px;height:7.5px;line-height:7.5px;font-size:7.5px;color:#a2a2a2;text-align:center;white-space:nowrap;-webkit-text-stroke:0.2px #a2a2a2;letter-spacing:0.7px;-webkit-text-stroke:0;">5</div>
<div style="left:255px;top:369px;width:61px;height:1px;background:#f0f0f0;"></div>
<div style="left:225.30px;top:365.22px;width:30px;height:7.5px;line-height:7.5px;font-size:7.5px;color:#a2a2a2;text-align:center;white-space:nowrap;-webkit-text-stroke:0.2px #a2a2a2;letter-spacing:0.7px;-webkit-text-stroke:0;">0</div>
<div style="left:255px;top:422px;width:61px;height:1px;background:#b0b0b0;"></div>
<div style="left:225.30px;top:418.22px;width:30px;height:7.5px;line-height:7.5px;font-size:7.5px;color:#a2a2a2;text-align:center;white-space:nowrap;-webkit-text-stroke:0.2px #a2a2a2;letter-spacing:0.7px;-webkit-text-stroke:0;">-5</div>
<div style="left:255px;top:475px;width:61px;height:1px;background:#b0b0b0;"></div>
<div style="left:225.30px;top:471.22px;width:30px;height:7.5px;line-height:7.5px;font-size:7.5px;color:#a2a2a2;text-align:center;white-space:nowrap;-webkit-text-stroke:0.2px #a2a2a2;letter-spacing:0.7px;-webkit-text-stroke:0;">-10</div>
<div style="left:255px;top:528px;width:61px;height:1px;background:#b0b0b0;"></div>
<div style="left:225.30px;top:524.22px;width:30px;height:7.5px;line-height:7.5px;font-size:7.5px;color:#a2a2a2;text-align:center;white-space:nowrap;-webkit-text-stroke:0.2px #a2a2a2;letter-spacing:0.7px;-webkit-text-stroke:0;">-20</div>
<div style="left:255px;top:581px;width:61px;height:1px;background:#b0b0b0;"></div>
<div style="left:225.30px;top:577.22px;width:30px;height:7.5px;line-height:7.5px;font-size:7.5px;color:#a2a2a2;text-align:center;white-space:nowrap;-webkit-text-stroke:0.2px #a2a2a2;letter-spacing:0.7px;-webkit-text-stroke:0;">-30</div>
<div style="left:255px;top:634px;width:61px;height:1px;background:#b0b0b0;"></div>
<div style="left:225.30px;top:630.22px;width:30px;height:7.5px;line-height:7.5px;font-size:7.5px;color:#a2a2a2;text-align:center;white-space:nowrap;-webkit-text-stroke:0.2px #a2a2a2;letter-spacing:0.7px;-webkit-text-stroke:0;">-50</div>
<div style="left:298px;top:645px;width:20px;height:86px;background:radial-gradient(ellipse at 50% 50%, rgba(20,20,24,0.55) 0%, rgba(20,20,24,0.35) 45%, rgba(20,20,24,0) 72%);"></div>
<div style="left:261px;top:637px;width:47px;height:100px;background:linear-gradient(to bottom,#9c9c9c 0%,#cacaca 3.4%,#cecece 3.5%,#cecece 14.5%,#c4c4c4 14.6%,#c4c4c4 17%,#8e8e8e 17.1%,#8e8e8e 21%,#a8a8a8 21.1%,#a8a8a8 22%,#8c8c8c 22.1%,#8c8c8c 29.7%,#a0a0a0 29.8%,#a0a0a0 36.5%,#a8a8a8 36.6%,#a8a8a8 39%,#d0d0d0 39.1%,#d0d0d0 45.7%,#ffffff 45.8%,#ffffff 50%,#c0c0c0 50.1%,#c0c0c0 51.2%,#cfcfcf 51.3%,#cfcfcf 58.4%,#bdbdbd 58.5%,#bdbdbd 60%,#cdcdcd 60.1%,#cdcdcd 66%,#bcbcbc 66.1%,#bcbcbc 67.6%,#e6e6e6 67.7%,#e6e6e6 75.5%,#c4c4c4 75.6%,#c4c4c4 77.1%,#dedede 77.2%,#dedede 80.7%,#b2b2b2 80.8%,#b2b2b2 95%,#888888 100%);border-radius:2.5px;"></div>
<div style="left:233.50px;top:739.73px;width:100px;height:12.5px;line-height:12.5px;font-size:12.5px;color:#fff;text-align:center;white-space:nowrap;-webkit-text-stroke:0.2px #fff;">CH 03</div>
<div style="left:333px;top:198.00px;width:4px;height:7.00px;background:#6e1a1a"></div>
<div style="left:333px;top:208.07px;width:4px;height:7.00px;background:#73451a"></div>
<div style="left:333px;top:218.15px;width:4px;height:7.00px;background:#73451a"></div>
<div style="left:333px;top:228.22px;width:4px;height:7.00px;background:#73451a"></div>
<div style="left:333px;top:238.30px;width:4px;height:7.00px;background:#73451a"></div>
<div style="left:333px;top:248.37px;width:4px;height:7.00px;background:#73451a"></div>
<div style="left:333px;top:258.44px;width:4px;height:7.00px;background:#73451a"></div>
<div style="left:333px;top:268.52px;width:4px;height:7.00px;background:#73451a"></div>
<div style="left:333px;top:278.59px;width:4px;height:7.00px;background:#73451a"></div>
<div style="left:333px;top:288.67px;width:4px;height:7.00px;background:#73451a"></div>
<div style="left:333px;top:298.74px;width:4px;height:7.00px;background:#73451a"></div>
<div style="left:333px;top:308.81px;width:4px;height:7.00px;background:#73451a"></div>
<div style="left:333px;top:318.89px;width:4px;height:7.00px;background:#73451a"></div>
<div style="left:333px;top:328.96px;width:4px;height:7.00px;background:#73451a"></div>
<div style="left:333px;top:339.04px;width:4px;height:7.00px;background:#73451a"></div>
<div style="left:333px;top:349.11px;width:4px;height:7.00px;background:#73451a"></div>
<div style="left:333px;top:359.18px;width:4px;height:7.00px;background:#73451a"></div>
<div style="left:333px;top:369.26px;width:4px;height:7.00px;background:#73451a"></div>
<div style="left:333px;top:379.33px;width:4px;height:7.00px;background:#73451a"></div>
<div style="left:333px;top:389.41px;width:4px;height:7.00px;background:#73451a"></div>
<div style="left:333px;top:399.48px;width:4px;height:7.00px;background:#73451a"></div>
<div style="left:333px;top:409.55px;width:4px;height:7.00px;background:#73451a"></div>
<div style="left:333px;top:419.63px;width:4px;height:7.00px;background:#73451a"></div>
<div style="left:333px;top:429.70px;width:4px;height:7.00px;background:#73451a"></div>
<div style="left:333px;top:439.78px;width:4px;height:7.00px;background:#73451a"></div>
<div style="left:333px;top:449.85px;width:4px;height:7.00px;background:#73451a"></div>
<div style="left:333px;top:459.92px;width:4px;height:7.00px;background:#73451a"></div>
<div style="left:333px;top:470.00px;width:4px;height:7.00px;background:#73451a"></div>
<div style="left:333px;top:480.07px;width:4px;height:7.00px;background:#283c14"></div>
<div style="left:333px;top:490.15px;width:4px;height:7.00px;background:#283c14"></div>
<div style="left:333px;top:500.22px;width:4px;height:7.00px;background:#283c14"></div>
<div style="left:333px;top:510.29px;width:4px;height:7.00px;background:#283c14"></div>
<div style="left:333px;top:520.37px;width:4px;height:7.00px;background:#283c14"></div>
<div style="left:333px;top:530.44px;width:4px;height:7.00px;background:#283c14"></div>
<div style="left:333px;top:540.52px;width:4px;height:7.00px;background:#283c14"></div>
<div style="left:333px;top:550.59px;width:4px;height:7.00px;background:#283c14"></div>
<div style="left:333px;top:560.66px;width:4px;height:7.00px;background:#283c14"></div>
<div style="left:333px;top:570.74px;width:4px;height:7.00px;background:#283c14"></div>
<div style="left:333px;top:580.81px;width:4px;height:7.00px;background:#283c14"></div>
<div style="left:333px;top:590.89px;width:4px;height:7.00px;background:#283c14"></div>
<div style="left:333px;top:600.96px;width:4px;height:7.00px;background:#283c14"></div>
<div style="left:333px;top:611.03px;width:4px;height:7.00px;background:#283c14"></div>
<div style="left:333px;top:621.11px;width:4px;height:7.00px;background:#283c14"></div>
<div style="left:333px;top:631.18px;width:4px;height:7.00px;background:#283c14"></div>
<div style="left:333px;top:641.26px;width:4px;height:7.00px;background:#283c14"></div>
<div style="left:333px;top:651.33px;width:4px;height:7.00px;background:#283c14"></div>
<div style="left:333px;top:661.40px;width:4px;height:7.00px;background:#283c14"></div>
<div style="left:333px;top:671.48px;width:4px;height:7.00px;background:#283c14"></div>
<div style="left:333px;top:681.55px;width:4px;height:7.00px;background:#283c14"></div>
<div style="left:333px;top:691.63px;width:4px;height:7.00px;background:#283c14"></div>
<div style="left:333px;top:701.70px;width:4px;height:7.00px;background:#283c14"></div>
<div style="left:333px;top:711.77px;width:4px;height:7.00px;background:#283c14"></div>
<div style="left:333px;top:721.85px;width:4px;height:7.00px;background:#283c14"></div>
<div style="left:333px;top:731.92px;width:4px;height:7.00px;background:#283c14"></div>
<div style="left:333px;top:742.00px;width:4px;height:7.00px;background:#283c14"></div>
<div style="left:343px;top:198px;width:4px;height:117px;background:#f6201a;"></div>
<div style="left:343px;top:368px;width:4px;height:118px;background:#f6201a;"></div>
<div style="left:347px;top:99px;width:1px;height:45px;background:#1a1a1a;"></div>
<div style="left:348px;top:198px;width:116px;height:554px;background:#2a2b30;"></div>
<div style="left:348px;top:99px;width:116px;height:45px;background:#dcdcdc;"></div>
<div style="left:339.00px;top:114.73px;width:136px;height:12.5px;line-height:12.5px;font-size:12.5px;color:#141414;text-align:center;white-space:nowrap;-webkit-text-stroke:0.2px #141414;">CH 04</div>
<div style="left:348px;top:144px;width:116px;height:20px;background:#2a2b30;box-sizing:border-box;border:1px solid #0f97a7;"></div>
<div style="left:406px;top:143px;width:1px;height:20px;background:#e8e8e8;"></div>
<div style="left:348px;top:164px;width:116px;height:34px;background:#5a1818;box-sizing:border-box;border:1px solid #55576a;"></div>
<div style="left:338.80px;top:174.17px;width:136px;height:13px;line-height:13px;font-size:13px;color:#ece8e8;text-align:center;white-space:nowrap;-webkit-text-stroke:0.2px #ece8e8;">MUTE</div>
<svg style="left:388px;top:202px;width:20px;height:10px" width="20" height="10"><rect x="1.80" y="5.00" width="3.45" height="1.2" fill="#fff"/><path d="M12.55 5.50 C13.75 3.00 13.80 2.50 15.30 2.50 C16.90 2.50 17.60 3.80 17.60 5.50 C17.60 7.20 16.90 8.50 15.30 8.50 C13.80 8.50 13.75 8.00 12.55 5.50 C11.35 3.00 11.30 2.50 9.80 2.50 C8.20 2.50 7.50 3.80 7.50 5.50 C7.50 7.20 8.20 8.50 9.80 8.50 C11.30 8.50 11.35 8.00 12.55 5.50 Z" fill="none" stroke="#fff" stroke-width="1.15"/></svg>
<div style="left:396px;top:264px;width:11px;height:378px;background:#000;"></div>
<div style="left:371px;top:263px;width:61px;height:1px;background:#b0b0b0;"></div>
<div style="left:341.30px;top:259.22px;width:30px;height:7.5px;line-height:7.5px;font-size:7.5px;color:#a2a2a2;text-align:center;white-space:nowrap;-webkit-text-stroke:0.2px #a2a2a2;letter-spacing:0.7px;-webkit-text-stroke:0;">10</div>
<div style="left:371px;top:316px;width:61px;height:1px;background:#b0b0b0;"></div>
<div style="left:341.30px;top:312.22px;width:30px;height:7.5px;line-height:7.5px;font-size:7.5px;color:#a2a2a2;text-align:center;white-space:nowrap;-webkit-text-stroke:0.2px #a2a2a2;letter-spacing:0.7px;-webkit-text-stroke:0;">5</div>
<div style="left:371px;top:369px;width:61px;height:1px;background:#f0f0f0;"></div>
<div style="left:341.30px;top:365.22px;width:30px;height:7.5px;line-height:7.5px;font-size:7.5px;color:#a2a2a2;text-align:center;white-space:nowrap;-webkit-text-stroke:0.2px #a2a2a2;letter-spacing:0.7px;-webkit-text-stroke:0;">0</div>
<div style="left:371px;top:422px;width:61px;height:1px;background:#b0b0b0;"></div>
<div style="left:341.30px;top:418.22px;width:30px;height:7.5px;line-height:7.5px;font-size:7.5px;color:#a2a2a2;text-align:center;white-space:nowrap;-webkit-text-stroke:0.2px #a2a2a2;letter-spacing:0.7px;-webkit-text-stroke:0;">-5</div>
<div style="left:371px;top:475px;width:61px;height:1px;background:#b0b0b0;"></div>
<div style="left:341.30px;top:471.22px;width:30px;height:7.5px;line-height:7.5px;font-size:7.5px;color:#a2a2a2;text-align:center;white-space:nowrap;-webkit-text-stroke:0.2px #a2a2a2;letter-spacing:0.7px;-webkit-text-stroke:0;">-10</div>
<div style="left:371px;top:528px;width:61px;height:1px;background:#b0b0b0;"></div>
<div style="left:341.30px;top:524.22px;width:30px;height:7.5px;line-height:7.5px;font-size:7.5px;color:#a2a2a2;text-align:center;white-space:nowrap;-webkit-text-stroke:0.2px #a2a2a2;letter-spacing:0.7px;-webkit-text-stroke:0;">-20</div>
<div style="left:371px;top:581px;width:61px;height:1px;background:#b0b0b0;"></div>
<div style="left:341.30px;top:577.22px;width:30px;height:7.5px;line-height:7.5px;font-size:7.5px;color:#a2a2a2;text-align:center;white-space:nowrap;-webkit-text-stroke:0.2px #a2a2a2;letter-spacing:0.7px;-webkit-text-stroke:0;">-30</div>
<div style="left:371px;top:634px;width:61px;height:1px;background:#b0b0b0;"></div>
<div style="left:341.30px;top:630.22px;width:30px;height:7.5px;line-height:7.5px;font-size:7.5px;color:#a2a2a2;text-align:center;white-space:nowrap;-webkit-text-stroke:0.2px #a2a2a2;letter-spacing:0.7px;-webkit-text-stroke:0;">-50</div>
<div style="left:414px;top:645px;width:20px;height:86px;background:radial-gradient(ellipse at 50% 50%, rgba(20,20,24,0.55) 0%, rgba(20,20,24,0.35) 45%, rgba(20,20,24,0) 72%);"></div>
<div style="left:377px;top:637px;width:47px;height:100px;background:linear-gradient(to bottom,#9c9c9c 0%,#cacaca 3.4%,#cecece 3.5%,#cecece 14.5%,#c4c4c4 14.6%,#c4c4c4 17%,#8e8e8e 17.1%,#8e8e8e 21%,#a8a8a8 21.1%,#a8a8a8 22%,#8c8c8c 22.1%,#8c8c8c 29.7%,#a0a0a0 29.8%,#a0a0a0 36.5%,#a8a8a8 36.6%,#a8a8a8 39%,#d0d0d0 39.1%,#d0d0d0 45.7%,#ffffff 45.8%,#ffffff 50%,#c0c0c0 50.1%,#c0c0c0 51.2%,#cfcfcf 51.3%,#cfcfcf 58.4%,#bdbdbd 58.5%,#bdbdbd 60%,#cdcdcd 60.1%,#cdcdcd 66%,#bcbcbc 66.1%,#bcbcbc 67.6%,#e6e6e6 67.7%,#e6e6e6 75.5%,#c4c4c4 75.6%,#c4c4c4 77.1%,#dedede 77.2%,#dedede 80.7%,#b2b2b2 80.8%,#b2b2b2 95%,#888888 100%);border-radius:2.5px;"></div>
<div style="left:349.50px;top:739.73px;width:100px;height:12.5px;line-height:12.5px;font-size:12.5px;color:#fff;text-align:center;white-space:nowrap;-webkit-text-stroke:0.2px #fff;">CH 04</div>
<div style="left:449px;top:198.00px;width:4px;height:7.00px;background:#6e1a1a"></div>
<div style="left:449px;top:208.07px;width:4px;height:7.00px;background:#73451a"></div>
<div style="left:449px;top:218.15px;width:4px;height:7.00px;background:#73451a"></div>
<div style="left:449px;top:228.22px;width:4px;height:7.00px;background:#73451a"></div>
<div style="left:449px;top:238.30px;width:4px;height:7.00px;background:#73451a"></div>
<div style="left:449px;top:248.37px;width:4px;height:7.00px;background:#73451a"></div>
<div style="left:449px;top:258.44px;width:4px;height:7.00px;background:#73451a"></div>
<div style="left:449px;top:268.52px;width:4px;height:7.00px;background:#73451a"></div>
<div style="left:449px;top:278.59px;width:4px;height:7.00px;background:#73451a"></div>
<div style="left:449px;top:288.67px;width:4px;height:7.00px;background:#73451a"></div>
<div style="left:449px;top:298.74px;width:4px;height:7.00px;background:#73451a"></div>
<div style="left:449px;top:308.81px;width:4px;height:7.00px;background:#73451a"></div>
<div style="left:449px;top:318.89px;width:4px;height:7.00px;background:#73451a"></div>
<div style="left:449px;top:328.96px;width:4px;height:7.00px;background:#73451a"></div>
<div style="left:449px;top:339.04px;width:4px;height:7.00px;background:#73451a"></div>
<div style="left:449px;top:349.11px;width:4px;height:7.00px;background:#73451a"></div>
<div style="left:449px;top:359.18px;width:4px;height:7.00px;background:#73451a"></div>
<div style="left:449px;top:369.26px;width:4px;height:7.00px;background:#73451a"></div>
<div style="left:449px;top:379.33px;width:4px;height:7.00px;background:#73451a"></div>
<div style="left:449px;top:389.41px;width:4px;height:7.00px;background:#73451a"></div>
<div style="left:449px;top:399.48px;width:4px;height:7.00px;background:#73451a"></div>
<div style="left:449px;top:409.55px;width:4px;height:7.00px;background:#73451a"></div>
<div style="left:449px;top:419.63px;width:4px;height:7.00px;background:#73451a"></div>
<div style="left:449px;top:429.70px;width:4px;height:7.00px;background:#73451a"></div>
<div style="left:449px;top:439.78px;width:4px;height:7.00px;background:#73451a"></div>
<div style="left:449px;top:449.85px;width:4px;height:7.00px;background:#73451a"></div>
<div style="left:449px;top:459.92px;width:4px;height:7.00px;background:#73451a"></div>
<div style="left:449px;top:470.00px;width:4px;height:7.00px;background:#73451a"></div>
<div style="left:449px;top:480.07px;width:4px;height:7.00px;background:#283c14"></div>
<div style="left:449px;top:490.15px;width:4px;height:7.00px;background:#283c14"></div>
<div style="left:449px;top:500.22px;width:4px;height:7.00px;background:#283c14"></div>
<div style="left:449px;top:510.29px;width:4px;height:7.00px;background:#283c14"></div>
<div style="left:449px;top:520.37px;width:4px;height:7.00px;background:#283c14"></div>
<div style="left:449px;top:530.44px;width:4px;height:7.00px;background:#283c14"></div>
<div style="left:449px;top:540.52px;width:4px;height:7.00px;background:#283c14"></div>
<div style="left:449px;top:550.59px;width:4px;height:7.00px;background:#283c14"></div>
<div style="left:449px;top:560.66px;width:4px;height:7.00px;background:#283c14"></div>
<div style="left:449px;top:570.74px;width:4px;height:7.00px;background:#283c14"></div>
<div style="left:449px;top:580.81px;width:4px;height:7.00px;background:#283c14"></div>
<div style="left:449px;top:590.89px;width:4px;height:7.00px;background:#283c14"></div>
<div style="left:449px;top:600.96px;width:4px;height:7.00px;background:#283c14"></div>
<div style="left:449px;top:611.03px;width:4px;height:7.00px;background:#283c14"></div>
<div style="left:449px;top:621.11px;width:4px;height:7.00px;background:#283c14"></div>
<div style="left:449px;top:631.18px;width:4px;height:7.00px;background:#283c14"></div>
<div style="left:449px;top:641.26px;width:4px;height:7.00px;background:#283c14"></div>
<div style="left:449px;top:651.33px;width:4px;height:7.00px;background:#283c14"></div>
<div style="left:449px;top:661.40px;width:4px;height:7.00px;background:#283c14"></div>
<div style="left:449px;top:671.48px;width:4px;height:7.00px;background:#283c14"></div>
<div style="left:449px;top:681.55px;width:4px;height:7.00px;background:#283c14"></div>
<div style="left:449px;top:691.63px;width:4px;height:7.00px;background:#283c14"></div>
<div style="left:449px;top:701.70px;width:4px;height:7.00px;background:#283c14"></div>
<div style="left:449px;top:711.77px;width:4px;height:7.00px;background:#283c14"></div>
<div style="left:449px;top:721.85px;width:4px;height:7.00px;background:#283c14"></div>
<div style="left:449px;top:731.92px;width:4px;height:7.00px;background:#283c14"></div>
<div style="left:449px;top:742.00px;width:4px;height:7.00px;background:#283c14"></div>
<div style="left:459px;top:198px;width:5px;height:117px;background:#f6201a;"></div>
<div style="left:459px;top:368px;width:5px;height:118px;background:#f6201a;"></div>
<div style="left:464px;top:198px;width:116px;height:554px;background:#2a2b30;"></div>
<div style="left:464px;top:99px;width:116px;height:45px;background:#dcdcdc;"></div>
<div style="left:455.00px;top:114.73px;width:136px;height:12.5px;line-height:12.5px;font-size:12.5px;color:#141414;text-align:center;white-space:nowrap;-webkit-text-stroke:0.2px #141414;">CH 05</div>
<div style="left:464px;top:144px;width:116px;height:20px;background:#2a2b30;box-sizing:border-box;border:1px solid #0f97a7;"></div>
<div style="left:522px;top:143px;width:1px;height:20px;background:#e8e8e8;"></div>
<div style="left:464px;top:164px;width:116px;height:34px;background:#5a1818;box-sizing:border-box;border:1px solid #55576a;"></div>
<div style="left:454.80px;top:174.17px;width:136px;height:13px;line-height:13px;font-size:13px;color:#ece8e8;text-align:center;white-space:nowrap;-webkit-text-stroke:0.2px #ece8e8;">MUTE</div>
<svg style="left:504px;top:202px;width:20px;height:10px" width="20" height="10"><rect x="1.80" y="5.00" width="3.45" height="1.2" fill="#fff"/><path d="M12.55 5.50 C13.75 3.00 13.80 2.50 15.30 2.50 C16.90 2.50 17.60 3.80 17.60 5.50 C17.60 7.20 16.90 8.50 15.30 8.50 C13.80 8.50 13.75 8.00 12.55 5.50 C11.35 3.00 11.30 2.50 9.80 2.50 C8.20 2.50 7.50 3.80 7.50 5.50 C7.50 7.20 8.20 8.50 9.80 8.50 C11.30 8.50 11.35 8.00 12.55 5.50 Z" fill="none" stroke="#fff" stroke-width="1.15"/></svg>
<div style="left:512px;top:264px;width:11px;height:378px;background:#000;"></div>
<div style="left:487px;top:263px;width:61px;height:1px;background:#b0b0b0;"></div>
<div style="left:457.30px;top:259.22px;width:30px;height:7.5px;line-height:7.5px;font-size:7.5px;color:#a2a2a2;text-align:center;white-space:nowrap;-webkit-text-stroke:0.2px #a2a2a2;letter-spacing:0.7px;-webkit-text-stroke:0;">10</div>
<div style="left:487px;top:316px;width:61px;height:1px;background:#b0b0b0;"></div>
<div style="left:457.30px;top:312.22px;width:30px;height:7.5px;line-height:7.5px;font-size:7.5px;color:#a2a2a2;text-align:center;white-space:nowrap;-webkit-text-stroke:0.2px #a2a2a2;letter-spacing:0.7px;-webkit-text-stroke:0;">5</div>
<div style="left:487px;top:369px;width:61px;height:1px;background:#f0f0f0;"></div>
<div style="left:457.30px;top:365.22px;width:30px;height:7.5px;line-height:7.5px;font-size:7.5px;color:#a2a2a2;text-align:center;white-space:nowrap;-webkit-text-stroke:0.2px #a2a2a2;letter-spacing:0.7px;-webkit-text-stroke:0;">0</div>
<div style="left:487px;top:422px;width:61px;height:1px;background:#b0b0b0;"></div>
<div style="left:457.30px;top:418.22px;width:30px;height:7.5px;line-height:7.5px;font-size:7.5px;color:#a2a2a2;text-align:center;white-space:nowrap;-webkit-text-stroke:0.2px #a2a2a2;letter-spacing:0.7px;-webkit-text-stroke:0;">-5</div>
<div style="left:487px;top:475px;width:61px;height:1px;background:#b0b0b0;"></div>
<div style="left:457.30px;top:471.22px;width:30px;height:7.5px;line-height:7.5px;font-size:7.5px;color:#a2a2a2;text-align:center;white-space:nowrap;-webkit-text-stroke:0.2px #a2a2a2;letter-spacing:0.7px;-webkit-text-stroke:0;">-10</div>
<div style="left:487px;top:528px;width:61px;height:1px;background:#b0b0b0;"></div>
<div style="left:457.30px;top:524.22px;width:30px;height:7.5px;line-height:7.5px;font-size:7.5px;color:#a2a2a2;text-align:center;white-space:nowrap;-webkit-text-stroke:0.2px #a2a2a2;letter-spacing:0.7px;-webkit-text-stroke:0;">-20</div>
<div style="left:487px;top:581px;width:61px;height:1px;background:#b0b0b0;"></div>
<div style="left:457.30px;top:577.22px;width:30px;height:7.5px;line-height:7.5px;font-size:7.5px;color:#a2a2a2;text-align:center;white-space:nowrap;-webkit-text-stroke:0.2px #a2a2a2;letter-spacing:0.7px;-webkit-text-stroke:0;">-30</div>
<div style="left:487px;top:634px;width:61px;height:1px;background:#b0b0b0;"></div>
<div style="left:457.30px;top:630.22px;width:30px;height:7.5px;line-height:7.5px;font-size:7.5px;color:#a2a2a2;text-align:center;white-space:nowrap;-webkit-text-stroke:0.2px #a2a2a2;letter-spacing:0.7px;-webkit-text-stroke:0;">-50</div>
<div style="left:530px;top:645px;width:20px;height:86px;background:radial-gradient(ellipse at 50% 50%, rgba(20,20,24,0.55) 0%, rgba(20,20,24,0.35) 45%, rgba(20,20,24,0) 72%);"></div>
<div style="left:493px;top:637px;width:47px;height:100px;background:linear-gradient(to bottom,#9c9c9c 0%,#cacaca 3.4%,#cecece 3.5%,#cecece 14.5%,#c4c4c4 14.6%,#c4c4c4 17%,#8e8e8e 17.1%,#8e8e8e 21%,#a8a8a8 21.1%,#a8a8a8 22%,#8c8c8c 22.1%,#8c8c8c 29.7%,#a0a0a0 29.8%,#a0a0a0 36.5%,#a8a8a8 36.6%,#a8a8a8 39%,#d0d0d0 39.1%,#d0d0d0 45.7%,#ffffff 45.8%,#ffffff 50%,#c0c0c0 50.1%,#c0c0c0 51.2%,#cfcfcf 51.3%,#cfcfcf 58.4%,#bdbdbd 58.5%,#bdbdbd 60%,#cdcdcd 60.1%,#cdcdcd 66%,#bcbcbc 66.1%,#bcbcbc 67.6%,#e6e6e6 67.7%,#e6e6e6 75.5%,#c4c4c4 75.6%,#c4c4c4 77.1%,#dedede 77.2%,#dedede 80.7%,#b2b2b2 80.8%,#b2b2b2 95%,#888888 100%);border-radius:2.5px;"></div>
<div style="left:465.50px;top:739.73px;width:100px;height:12.5px;line-height:12.5px;font-size:12.5px;color:#fff;text-align:center;white-space:nowrap;-webkit-text-stroke:0.2px #fff;">CH 05</div>
<div style="left:565px;top:198.00px;width:4px;height:7.00px;background:#6e1a1a"></div>
<div style="left:565px;top:208.07px;width:4px;height:7.00px;background:#73451a"></div>
<div style="left:565px;top:218.15px;width:4px;height:7.00px;background:#73451a"></div>
<div style="left:565px;top:228.22px;width:4px;height:7.00px;background:#73451a"></div>
<div style="left:565px;top:238.30px;width:4px;height:7.00px;background:#73451a"></div>
<div style="left:565px;top:248.37px;width:4px;height:7.00px;background:#73451a"></div>
<div style="left:565px;top:258.44px;width:4px;height:7.00px;background:#73451a"></div>
<div style="left:565px;top:268.52px;width:4px;height:7.00px;background:#73451a"></div>
<div style="left:565px;top:278.59px;width:4px;height:7.00px;background:#73451a"></div>
<div style="left:565px;top:288.67px;width:4px;height:7.00px;background:#73451a"></div>
<div style="left:565px;top:298.74px;width:4px;height:7.00px;background:#73451a"></div>
<div style="left:565px;top:308.81px;width:4px;height:7.00px;background:#73451a"></div>
<div style="left:565px;top:318.89px;width:4px;height:7.00px;background:#73451a"></div>
<div style="left:565px;top:328.96px;width:4px;height:7.00px;background:#73451a"></div>
<div style="left:565px;top:339.04px;width:4px;height:7.00px;background:#73451a"></div>
<div style="left:565px;top:349.11px;width:4px;height:7.00px;background:#73451a"></div>
<div style="left:565px;top:359.18px;width:4px;height:7.00px;background:#73451a"></div>
<div style="left:565px;top:369.26px;width:4px;height:7.00px;background:#73451a"></div>
<div style="left:565px;top:379.33px;width:4px;height:7.00px;background:#73451a"></div>
<div style="left:565px;top:389.41px;width:4px;height:7.00px;background:#73451a"></div>
<div style="left:565px;top:399.48px;width:4px;height:7.00px;background:#73451a"></div>
<div style="left:565px;top:409.55px;width:4px;height:7.00px;background:#73451a"></div>
<div style="left:565px;top:419.63px;width:4px;height:7.00px;background:#73451a"></div>
<div style="left:565px;top:429.70px;width:4px;height:7.00px;background:#73451a"></div>
<div style="left:565px;top:439.78px;width:4px;height:7.00px;background:#73451a"></div>
<div style="left:565px;top:449.85px;width:4px;height:7.00px;background:#73451a"></div>
<div style="left:565px;top:459.92px;width:4px;height:7.00px;background:#73451a"></div>
<div style="left:565px;top:470.00px;width:4px;height:7.00px;background:#73451a"></div>
<div style="left:565px;top:480.07px;width:4px;height:7.00px;background:#283c14"></div>
<div style="left:565px;top:490.15px;width:4px;height:7.00px;background:#283c14"></div>
<div style="left:565px;top:500.22px;width:4px;height:7.00px;background:#283c14"></div>
<div style="left:565px;top:510.29px;width:4px;height:7.00px;background:#283c14"></div>
<div style="left:565px;top:520.37px;width:4px;height:7.00px;background:#283c14"></div>
<div style="left:565px;top:530.44px;width:4px;height:7.00px;background:#283c14"></div>
<div style="left:565px;top:540.52px;width:4px;height:7.00px;background:#283c14"></div>
<div style="left:565px;top:550.59px;width:4px;height:7.00px;background:#283c14"></div>
<div style="left:565px;top:560.66px;width:4px;height:7.00px;background:#283c14"></div>
<div style="left:565px;top:570.74px;width:4px;height:7.00px;background:#283c14"></div>
<div style="left:565px;top:580.81px;width:4px;height:7.00px;background:#283c14"></div>
<div style="left:565px;top:590.89px;width:4px;height:7.00px;background:#283c14"></div>
<div style="left:565px;top:600.96px;width:4px;height:7.00px;background:#283c14"></div>
<div style="left:565px;top:611.03px;width:4px;height:7.00px;background:#283c14"></div>
<div style="left:565px;top:621.11px;width:4px;height:7.00px;background:#283c14"></div>
<div style="left:565px;top:631.18px;width:4px;height:7.00px;background:#283c14"></div>
<div style="left:565px;top:641.26px;width:4px;height:7.00px;background:#283c14"></div>
<div style="left:565px;top:651.33px;width:4px;height:7.00px;background:#283c14"></div>
<div style="left:565px;top:661.40px;width:4px;height:7.00px;background:#283c14"></div>
<div style="left:565px;top:671.48px;width:4px;height:7.00px;background:#283c14"></div>
<div style="left:565px;top:681.55px;width:4px;height:7.00px;background:#283c14"></div>
<div style="left:565px;top:691.63px;width:4px;height:7.00px;background:#283c14"></div>
<div style="left:565px;top:701.70px;width:4px;height:7.00px;background:#283c14"></div>
<div style="left:565px;top:711.77px;width:4px;height:7.00px;background:#283c14"></div>
<div style="left:565px;top:721.85px;width:4px;height:7.00px;background:#283c14"></div>
<div style="left:565px;top:731.92px;width:4px;height:7.00px;background:#283c14"></div>
<div style="left:565px;top:742.00px;width:4px;height:7.00px;background:#283c14"></div>
<div style="left:575px;top:198px;width:5px;height:117px;background:#f6201a;"></div>
<div style="left:575px;top:368px;width:5px;height:118px;background:#f6201a;"></div>
<div style="left:580px;top:198px;width:117px;height:554px;background:#2a2b30;"></div>
<div style="left:696px;top:99px;width:1px;height:653px;background:#1a1e25;"></div>
<div style="left:580px;top:99px;width:116px;height:45px;background:#dcdcdc;"></div>
<div style="left:571.00px;top:114.73px;width:136px;height:12.5px;line-height:12.5px;font-size:12.5px;color:#141414;text-align:center;white-space:nowrap;-webkit-text-stroke:0.2px #141414;">CH 06</div>
<div style="left:580px;top:144px;width:116px;height:20px;background:#2a2b30;box-sizing:border-box;border:1px solid #0f97a7;"></div>
<div style="left:638px;top:143px;width:1px;height:20px;background:#e8e8e8;"></div>
<div style="left:580px;top:164px;width:116px;height:34px;background:#5a1818;box-sizing:border-box;border:1px solid #55576a;"></div>
<div style="left:570.80px;top:174.17px;width:136px;height:13px;line-height:13px;font-size:13px;color:#ece8e8;text-align:center;white-space:nowrap;-webkit-text-stroke:0.2px #ece8e8;">MUTE</div>
<svg style="left:620px;top:202px;width:20px;height:10px" width="20" height="10"><rect x="1.80" y="5.00" width="3.45" height="1.2" fill="#fff"/><path d="M12.55 5.50 C13.75 3.00 13.80 2.50 15.30 2.50 C16.90 2.50 17.60 3.80 17.60 5.50 C17.60 7.20 16.90 8.50 15.30 8.50 C13.80 8.50 13.75 8.00 12.55 5.50 C11.35 3.00 11.30 2.50 9.80 2.50 C8.20 2.50 7.50 3.80 7.50 5.50 C7.50 7.20 8.20 8.50 9.80 8.50 C11.30 8.50 11.35 8.00 12.55 5.50 Z" fill="none" stroke="#fff" stroke-width="1.15"/></svg>
<div style="left:629px;top:264px;width:11px;height:378px;background:#000;"></div>
<div style="left:603px;top:263px;width:62px;height:1px;background:#b0b0b0;"></div>
<div style="left:573.30px;top:259.22px;width:30px;height:7.5px;line-height:7.5px;font-size:7.5px;color:#a2a2a2;text-align:center;white-space:nowrap;-webkit-text-stroke:0.2px #a2a2a2;letter-spacing:0.7px;-webkit-text-stroke:0;">10</div>
<div style="left:603px;top:316px;width:62px;height:1px;background:#b0b0b0;"></div>
<div style="left:573.30px;top:312.22px;width:30px;height:7.5px;line-height:7.5px;font-size:7.5px;color:#a2a2a2;text-align:center;white-space:nowrap;-webkit-text-stroke:0.2px #a2a2a2;letter-spacing:0.7px;-webkit-text-stroke:0;">5</div>
<div style="left:603px;top:369px;width:62px;height:1px;background:#f0f0f0;"></div>
<div style="left:573.30px;top:365.22px;width:30px;height:7.5px;line-height:7.5px;font-size:7.5px;color:#a2a2a2;text-align:center;white-space:nowrap;-webkit-text-stroke:0.2px #a2a2a2;letter-spacing:0.7px;-webkit-text-stroke:0;">0</div>
<div style="left:603px;top:422px;width:62px;height:1px;background:#b0b0b0;"></div>
<div style="left:573.30px;top:418.22px;width:30px;height:7.5px;line-height:7.5px;font-size:7.5px;color:#a2a2a2;text-align:center;white-space:nowrap;-webkit-text-stroke:0.2px #a2a2a2;letter-spacing:0.7px;-webkit-text-stroke:0;">-5</div>
<div style="left:603px;top:475px;width:62px;height:1px;background:#b0b0b0;"></div>
<div style="left:573.30px;top:471.22px;width:30px;height:7.5px;line-height:7.5px;font-size:7.5px;color:#a2a2a2;text-align:center;white-space:nowrap;-webkit-text-stroke:0.2px #a2a2a2;letter-spacing:0.7px;-webkit-text-stroke:0;">-10</div>
<div style="left:603px;top:528px;width:62px;height:1px;background:#b0b0b0;"></div>
<div style="left:573.30px;top:524.22px;width:30px;height:7.5px;line-height:7.5px;font-size:7.5px;color:#a2a2a2;text-align:center;white-space:nowrap;-webkit-text-stroke:0.2px #a2a2a2;letter-spacing:0.7px;-webkit-text-stroke:0;">-20</div>
<div style="left:603px;top:581px;width:62px;height:1px;background:#b0b0b0;"></div>
<div style="left:573.30px;top:577.22px;width:30px;height:7.5px;line-height:7.5px;font-size:7.5px;color:#a2a2a2;text-align:center;white-space:nowrap;-webkit-text-stroke:0.2px #a2a2a2;letter-spacing:0.7px;-webkit-text-stroke:0;">-30</div>
<div style="left:603px;top:634px;width:62px;height:1px;background:#b0b0b0;"></div>
<div style="left:573.30px;top:630.22px;width:30px;height:7.5px;line-height:7.5px;font-size:7.5px;color:#a2a2a2;text-align:center;white-space:nowrap;-webkit-text-stroke:0.2px #a2a2a2;letter-spacing:0.7px;-webkit-text-stroke:0;">-50</div>
<div style="left:647px;top:645px;width:20px;height:86px;background:radial-gradient(ellipse at 50% 50%, rgba(20,20,24,0.55) 0%, rgba(20,20,24,0.35) 45%, rgba(20,20,24,0) 72%);"></div>
<div style="left:610px;top:637px;width:47px;height:100px;background:linear-gradient(to bottom,#9c9c9c 0%,#cacaca 3.4%,#cecece 3.5%,#cecece 14.5%,#c4c4c4 14.6%,#c4c4c4 17%,#8e8e8e 17.1%,#8e8e8e 21%,#a8a8a8 21.1%,#a8a8a8 22%,#8c8c8c 22.1%,#8c8c8c 29.7%,#a0a0a0 29.8%,#a0a0a0 36.5%,#a8a8a8 36.6%,#a8a8a8 39%,#d0d0d0 39.1%,#d0d0d0 45.7%,#ffffff 45.8%,#ffffff 50%,#c0c0c0 50.1%,#c0c0c0 51.2%,#cfcfcf 51.3%,#cfcfcf 58.4%,#bdbdbd 58.5%,#bdbdbd 60%,#cdcdcd 60.1%,#cdcdcd 66%,#bcbcbc 66.1%,#bcbcbc 67.6%,#e6e6e6 67.7%,#e6e6e6 75.5%,#c4c4c4 75.6%,#c4c4c4 77.1%,#dedede 77.2%,#dedede 80.7%,#b2b2b2 80.8%,#b2b2b2 95%,#888888 100%);border-radius:2.5px;"></div>
<div style="left:582.50px;top:739.73px;width:100px;height:12.5px;line-height:12.5px;font-size:12.5px;color:#fff;text-align:center;white-space:nowrap;-webkit-text-stroke:0.2px #fff;">CH 06</div>
<div style="left:681px;top:198.00px;width:5px;height:7.00px;background:#6e1a1a"></div>
<div style="left:681px;top:208.07px;width:5px;height:7.00px;background:#73451a"></div>
<div style="left:681px;top:218.15px;width:5px;height:7.00px;background:#73451a"></div>
<div style="left:681px;top:228.22px;width:5px;height:7.00px;background:#73451a"></div>
<div style="left:681px;top:238.30px;width:5px;height:7.00px;background:#73451a"></div>
<div style="left:681px;top:248.37px;width:5px;height:7.00px;background:#73451a"></div>
<div style="left:681px;top:258.44px;width:5px;height:7.00px;background:#73451a"></div>
<div style="left:681px;top:268.52px;width:5px;height:7.00px;background:#73451a"></div>
<div style="left:681px;top:278.59px;width:5px;height:7.00px;background:#73451a"></div>
<div style="left:681px;top:288.67px;width:5px;height:7.00px;background:#73451a"></div>
<div style="left:681px;top:298.74px;width:5px;height:7.00px;background:#73451a"></div>
<div style="left:681px;top:308.81px;width:5px;height:7.00px;background:#73451a"></div>
<div style="left:681px;top:318.89px;width:5px;height:7.00px;background:#73451a"></div>
<div style="left:681px;top:328.96px;width:5px;height:7.00px;background:#73451a"></div>
<div style="left:681px;top:339.04px;width:5px;height:7.00px;background:#73451a"></div>
<div style="left:681px;top:349.11px;width:5px;height:7.00px;background:#73451a"></div>
<div style="left:681px;top:359.18px;width:5px;height:7.00px;background:#73451a"></div>
<div style="left:681px;top:369.26px;width:5px;height:7.00px;background:#73451a"></div>
<div style="left:681px;top:379.33px;width:5px;height:7.00px;background:#73451a"></div>
<div style="left:681px;top:389.41px;width:5px;height:7.00px;background:#73451a"></div>
<div style="left:681px;top:399.48px;width:5px;height:7.00px;background:#73451a"></div>
<div style="left:681px;top:409.55px;width:5px;height:7.00px;background:#73451a"></div>
<div style="left:681px;top:419.63px;width:5px;height:7.00px;background:#73451a"></div>
<div style="left:681px;top:429.70px;width:5px;height:7.00px;background:#73451a"></div>
<div style="left:681px;top:439.78px;width:5px;height:7.00px;background:#73451a"></div>
<div style="left:681px;top:449.85px;width:5px;height:7.00px;background:#73451a"></div>
<div style="left:681px;top:459.92px;width:5px;height:7.00px;background:#73451a"></div>
<div style="left:681px;top:470.00px;width:5px;height:7.00px;background:#73451a"></div>
<div style="left:681px;top:480.07px;width:5px;height:7.00px;background:#283c14"></div>
<div style="left:681px;top:490.15px;width:5px;height:7.00px;background:#283c14"></div>
<div style="left:681px;top:500.22px;width:5px;height:7.00px;background:#283c14"></div>
<div style="left:681px;top:510.29px;width:5px;height:7.00px;background:#283c14"></div>
<div style="left:681px;top:520.37px;width:5px;height:7.00px;background:#283c14"></div>
<div style="left:681px;top:530.44px;width:5px;height:7.00px;background:#283c14"></div>
<div style="left:681px;top:540.52px;width:5px;height:7.00px;background:#283c14"></div>
<div style="left:681px;top:550.59px;width:5px;height:7.00px;background:#283c14"></div>
<div style="left:681px;top:560.66px;width:5px;height:7.00px;background:#283c14"></div>
<div style="left:681px;top:570.74px;width:5px;height:7.00px;background:#283c14"></div>
<div style="left:681px;top:580.81px;width:5px;height:7.00px;background:#283c14"></div>
<div style="left:681px;top:590.89px;width:5px;height:7.00px;background:#283c14"></div>
<div style="left:681px;top:600.96px;width:5px;height:7.00px;background:#283c14"></div>
<div style="left:681px;top:611.03px;width:5px;height:7.00px;background:#283c14"></div>
<div style="left:681px;top:621.11px;width:5px;height:7.00px;background:#283c14"></div>
<div style="left:681px;top:631.18px;width:5px;height:7.00px;background:#283c14"></div>
<div style="left:681px;top:641.26px;width:5px;height:7.00px;background:#283c14"></div>
<div style="left:681px;top:651.33px;width:5px;height:7.00px;background:#283c14"></div>
<div style="left:681px;top:661.40px;width:5px;height:7.00px;background:#283c14"></div>
<div style="left:681px;top:671.48px;width:5px;height:7.00px;background:#283c14"></div>
<div style="left:681px;top:681.55px;width:5px;height:7.00px;background:#283c14"></div>
<div style="left:681px;top:691.63px;width:5px;height:7.00px;background:#283c14"></div>
<div style="left:681px;top:701.70px;width:5px;height:7.00px;background:#283c14"></div>
<div style="left:681px;top:711.77px;width:5px;height:7.00px;background:#283c14"></div>
<div style="left:681px;top:721.85px;width:5px;height:7.00px;background:#283c14"></div>
<div style="left:681px;top:731.92px;width:5px;height:7.00px;background:#283c14"></div>
<div style="left:681px;top:742.00px;width:5px;height:7.00px;background:#283c14"></div>
<div style="left:691px;top:198px;width:5px;height:117px;background:#f6201a;"></div>
<div style="left:691px;top:368px;width:5px;height:118px;background:#f6201a;"></div>
<div style="left:696px;top:99px;width:1px;height:45px;background:#1a1a1a;"></div>
<div style="left:697px;top:198px;width:116px;height:554px;background:#2a2b30;"></div>
<div style="left:812px;top:99px;width:1px;height:653px;background:#1a1e25;"></div>
<div style="left:697px;top:99px;width:115px;height:45px;background:#dcdcdc;"></div>
<div style="left:688.00px;top:114.73px;width:135px;height:12.5px;line-height:12.5px;font-size:12.5px;color:#141414;text-align:center;white-space:nowrap;-webkit-text-stroke:0.2px #141414;">CH 07</div>
<div style="left:697px;top:144px;width:115px;height:20px;background:#2a2b30;box-sizing:border-box;border:1px solid #0f97a7;"></div>
<div style="left:754px;top:143px;width:1px;height:20px;background:#e8e8e8;"></div>
<div style="left:697px;top:164px;width:115px;height:34px;background:#5a1818;box-sizing:border-box;border:1px solid #55576a;"></div>
<div style="left:687.80px;top:174.17px;width:135px;height:13px;line-height:13px;font-size:13px;color:#ece8e8;text-align:center;white-space:nowrap;-webkit-text-stroke:0.2px #ece8e8;">MUTE</div>
<svg style="left:737px;top:202px;width:20px;height:10px" width="20" height="10"><rect x="1.80" y="5.00" width="3.45" height="1.2" fill="#fff"/><path d="M12.55 5.50 C13.75 3.00 13.80 2.50 15.30 2.50 C16.90 2.50 17.60 3.80 17.60 5.50 C17.60 7.20 16.90 8.50 15.30 8.50 C13.80 8.50 13.75 8.00 12.55 5.50 C11.35 3.00 11.30 2.50 9.80 2.50 C8.20 2.50 7.50 3.80 7.50 5.50 C7.50 7.20 8.20 8.50 9.80 8.50 C11.30 8.50 11.35 8.00 12.55 5.50 Z" fill="none" stroke="#fff" stroke-width="1.15"/></svg>
<div style="left:745px;top:264px;width:11px;height:378px;background:#000;"></div>
<div style="left:720px;top:263px;width:61px;height:1px;background:#b0b0b0;"></div>
<div style="left:690.30px;top:259.22px;width:30px;height:7.5px;line-height:7.5px;font-size:7.5px;color:#a2a2a2;text-align:center;white-space:nowrap;-webkit-text-stroke:0.2px #a2a2a2;letter-spacing:0.7px;-webkit-text-stroke:0;">10</div>
<div style="left:720px;top:316px;width:61px;height:1px;background:#b0b0b0;"></div>
<div style="left:690.30px;top:312.22px;width:30px;height:7.5px;line-height:7.5px;font-size:7.5px;color:#a2a2a2;text-align:center;white-space:nowrap;-webkit-text-stroke:0.2px #a2a2a2;letter-spacing:0.7px;-webkit-text-stroke:0;">5</div>
<div style="left:720px;top:369px;width:61px;height:1px;background:#f0f0f0;"></div>
<div style="left:690.30px;top:365.22px;width:30px;height:7.5px;line-height:7.5px;font-size:7.5px;color:#a2a2a2;text-align:center;white-space:nowrap;-webkit-text-stroke:0.2px #a2a2a2;letter-spacing:0.7px;-webkit-text-stroke:0;">0</div>
<div style="left:720px;top:422px;width:61px;height:1px;background:#b0b0b0;"></div>
<div style="left:690.30px;top:418.22px;width:30px;height:7.5px;line-height:7.5px;font-size:7.5px;color:#a2a2a2;text-align:center;white-space:nowrap;-webkit-text-stroke:0.2px #a2a2a2;letter-spacing:0.7px;-webkit-text-stroke:0;">-5</div>
<div style="left:720px;top:475px;width:61px;height:1px;background:#b0b0b0;"></div>
<div style="left:690.30px;top:471.22px;width:30px;height:7.5px;line-height:7.5px;font-size:7.5px;color:#a2a2a2;text-align:center;white-space:nowrap;-webkit-text-stroke:0.2px #a2a2a2;letter-spacing:0.7px;-webkit-text-stroke:0;">-10</div>
<div style="left:720px;top:528px;width:61px;height:1px;background:#b0b0b0;"></div>
<div style="left:690.30px;top:524.22px;width:30px;height:7.5px;line-height:7.5px;font-size:7.5px;color:#a2a2a2;text-align:center;white-space:nowrap;-webkit-text-stroke:0.2px #a2a2a2;letter-spacing:0.7px;-webkit-text-stroke:0;">-20</div>
<div style="left:720px;top:581px;width:61px;height:1px;background:#b0b0b0;"></div>
<div style="left:690.30px;top:577.22px;width:30px;height:7.5px;line-height:7.5px;font-size:7.5px;color:#a2a2a2;text-align:center;white-space:nowrap;-webkit-text-stroke:0.2px #a2a2a2;letter-spacing:0.7px;-webkit-text-stroke:0;">-30</div>
<div style="left:720px;top:634px;width:61px;height:1px;background:#b0b0b0;"></div>
<div style="left:690.30px;top:630.22px;width:30px;height:7.5px;line-height:7.5px;font-size:7.5px;color:#a2a2a2;text-align:center;white-space:nowrap;-webkit-text-stroke:0.2px #a2a2a2;letter-spacing:0.7px;-webkit-text-stroke:0;">-50</div>
<div style="left:763px;top:645px;width:20px;height:86px;background:radial-gradient(ellipse at 50% 50%, rgba(20,20,24,0.55) 0%, rgba(20,20,24,0.35) 45%, rgba(20,20,24,0) 72%);"></div>
<div style="left:726px;top:637px;width:47px;height:100px;background:linear-gradient(to bottom,#9c9c9c 0%,#cacaca 3.4%,#cecece 3.5%,#cecece 14.5%,#c4c4c4 14.6%,#c4c4c4 17%,#8e8e8e 17.1%,#8e8e8e 21%,#a8a8a8 21.1%,#a8a8a8 22%,#8c8c8c 22.1%,#8c8c8c 29.7%,#a0a0a0 29.8%,#a0a0a0 36.5%,#a8a8a8 36.6%,#a8a8a8 39%,#d0d0d0 39.1%,#d0d0d0 45.7%,#ffffff 45.8%,#ffffff 50%,#c0c0c0 50.1%,#c0c0c0 51.2%,#cfcfcf 51.3%,#cfcfcf 58.4%,#bdbdbd 58.5%,#bdbdbd 60%,#cdcdcd 60.1%,#cdcdcd 66%,#bcbcbc 66.1%,#bcbcbc 67.6%,#e6e6e6 67.7%,#e6e6e6 75.5%,#c4c4c4 75.6%,#c4c4c4 77.1%,#dedede 77.2%,#dedede 80.7%,#b2b2b2 80.8%,#b2b2b2 95%,#888888 100%);border-radius:2.5px;"></div>
<div style="left:698.50px;top:739.73px;width:100px;height:12.5px;line-height:12.5px;font-size:12.5px;color:#fff;text-align:center;white-space:nowrap;-webkit-text-stroke:0.2px #fff;">CH 07</div>
<div style="left:798px;top:198.00px;width:4px;height:7.00px;background:#6e1a1a"></div>
<div style="left:798px;top:208.07px;width:4px;height:7.00px;background:#73451a"></div>
<div style="left:798px;top:218.15px;width:4px;height:7.00px;background:#73451a"></div>
<div style="left:798px;top:228.22px;width:4px;height:7.00px;background:#73451a"></div>
<div style="left:798px;top:238.30px;width:4px;height:7.00px;background:#73451a"></div>
<div style="left:798px;top:248.37px;width:4px;height:7.00px;background:#73451a"></div>
<div style="left:798px;top:258.44px;width:4px;height:7.00px;background:#73451a"></div>
<div style="left:798px;top:268.52px;width:4px;height:7.00px;background:#73451a"></div>
<div style="left:798px;top:278.59px;width:4px;height:7.00px;background:#73451a"></div>
<div style="left:798px;top:288.67px;width:4px;height:7.00px;background:#73451a"></div>
<div style="left:798px;top:298.74px;width:4px;height:7.00px;background:#73451a"></div>
<div style="left:798px;top:308.81px;width:4px;height:7.00px;background:#73451a"></div>
<div style="left:798px;top:318.89px;width:4px;height:7.00px;background:#73451a"></div>
<div style="left:798px;top:328.96px;width:4px;height:7.00px;background:#73451a"></div>
<div style="left:798px;top:339.04px;width:4px;height:7.00px;background:#73451a"></div>
<div style="left:798px;top:349.11px;width:4px;height:7.00px;background:#73451a"></div>
<div style="left:798px;top:359.18px;width:4px;height:7.00px;background:#73451a"></div>
<div style="left:798px;top:369.26px;width:4px;height:7.00px;background:#73451a"></div>
<div style="left:798px;top:379.33px;width:4px;height:7.00px;background:#73451a"></div>
<div style="left:798px;top:389.41px;width:4px;height:7.00px;background:#73451a"></div>
<div style="left:798px;top:399.48px;width:4px;height:7.00px;background:#73451a"></div>
<div style="left:798px;top:409.55px;width:4px;height:7.00px;background:#73451a"></div>
<div style="left:798px;top:419.63px;width:4px;height:7.00px;background:#73451a"></div>
<div style="left:798px;top:429.70px;width:4px;height:7.00px;background:#73451a"></div>
<div style="left:798px;top:439.78px;width:4px;height:7.00px;background:#73451a"></div>
<div style="left:798px;top:449.85px;width:4px;height:7.00px;background:#73451a"></div>
<div style="left:798px;top:459.92px;width:4px;height:7.00px;background:#73451a"></div>
<div style="left:798px;top:470.00px;width:4px;height:7.00px;background:#73451a"></div>
<div style="left:798px;top:480.07px;width:4px;height:7.00px;background:#283c14"></div>
<div style="left:798px;top:490.15px;width:4px;height:7.00px;background:#283c14"></div>
<div style="left:798px;top:500.22px;width:4px;height:7.00px;background:#283c14"></div>
<div style="left:798px;top:510.29px;width:4px;height:7.00px;background:#283c14"></div>
<div style="left:798px;top:520.37px;width:4px;height:7.00px;background:#283c14"></div>
<div style="left:798px;top:530.44px;width:4px;height:7.00px;background:#283c14"></div>
<div style="left:798px;top:540.52px;width:4px;height:7.00px;background:#283c14"></div>
<div style="left:798px;top:550.59px;width:4px;height:7.00px;background:#283c14"></div>
<div style="left:798px;top:560.66px;width:4px;height:7.00px;background:#283c14"></div>
<div style="left:798px;top:570.74px;width:4px;height:7.00px;background:#283c14"></div>
<div style="left:798px;top:580.81px;width:4px;height:7.00px;background:#283c14"></div>
<div style="left:798px;top:590.89px;width:4px;height:7.00px;background:#283c14"></div>
<div style="left:798px;top:600.96px;width:4px;height:7.00px;background:#283c14"></div>
<div style="left:798px;top:611.03px;width:4px;height:7.00px;background:#283c14"></div>
<div style="left:798px;top:621.11px;width:4px;height:7.00px;background:#283c14"></div>
<div style="left:798px;top:631.18px;width:4px;height:7.00px;background:#283c14"></div>
<div style="left:798px;top:641.26px;width:4px;height:7.00px;background:#283c14"></div>
<div style="left:798px;top:651.33px;width:4px;height:7.00px;background:#283c14"></div>
<div style="left:798px;top:661.40px;width:4px;height:7.00px;background:#283c14"></div>
<div style="left:798px;top:671.48px;width:4px;height:7.00px;background:#283c14"></div>
<div style="left:798px;top:681.55px;width:4px;height:7.00px;background:#283c14"></div>
<div style="left:798px;top:691.63px;width:4px;height:7.00px;background:#283c14"></div>
<div style="left:798px;top:701.70px;width:4px;height:7.00px;background:#283c14"></div>
<div style="left:798px;top:711.77px;width:4px;height:7.00px;background:#283c14"></div>
<div style="left:798px;top:721.85px;width:4px;height:7.00px;background:#283c14"></div>
<div style="left:798px;top:731.92px;width:4px;height:7.00px;background:#283c14"></div>
<div style="left:798px;top:742.00px;width:4px;height:7.00px;background:#283c14"></div>
<div style="left:807px;top:198px;width:5px;height:117px;background:#f6201a;"></div>
<div style="left:807px;top:368px;width:5px;height:118px;background:#f6201a;"></div>
<div style="left:812px;top:99px;width:1px;height:45px;background:#1a1a1a;"></div>
<div style="left:813px;top:198px;width:116px;height:554px;background:#2a2b30;"></div>
<div style="left:813px;top:99px;width:115px;height:45px;background:#dcdcdc;"></div>
<div style="left:804.00px;top:114.73px;width:135px;height:12.5px;line-height:12.5px;font-size:12.5px;color:#141414;text-align:center;white-space:nowrap;-webkit-text-stroke:0.2px #141414;">CH 08</div>
<div style="left:813px;top:144px;width:115px;height:20px;background:#2a2b30;box-sizing:border-box;border:1px solid #0f97a7;"></div>
<div style="left:870px;top:143px;width:1px;height:20px;background:#e8e8e8;"></div>
<div style="left:813px;top:164px;width:115px;height:34px;background:#5a1818;box-sizing:border-box;border:1px solid #55576a;"></div>
<div style="left:803.80px;top:174.17px;width:135px;height:13px;line-height:13px;font-size:13px;color:#ece8e8;text-align:center;white-space:nowrap;-webkit-text-stroke:0.2px #ece8e8;">MUTE</div>
<svg style="left:853px;top:202px;width:20px;height:10px" width="20" height="10"><rect x="1.80" y="5.00" width="3.45" height="1.2" fill="#fff"/><path d="M12.55 5.50 C13.75 3.00 13.80 2.50 15.30 2.50 C16.90 2.50 17.60 3.80 17.60 5.50 C17.60 7.20 16.90 8.50 15.30 8.50 C13.80 8.50 13.75 8.00 12.55 5.50 C11.35 3.00 11.30 2.50 9.80 2.50 C8.20 2.50 7.50 3.80 7.50 5.50 C7.50 7.20 8.20 8.50 9.80 8.50 C11.30 8.50 11.35 8.00 12.55 5.50 Z" fill="none" stroke="#fff" stroke-width="1.15"/></svg>
<div style="left:861px;top:264px;width:11px;height:378px;background:#000;"></div>
<div style="left:836px;top:263px;width:61px;height:1px;background:#b0b0b0;"></div>
<div style="left:806.30px;top:259.22px;width:30px;height:7.5px;line-height:7.5px;font-size:7.5px;color:#a2a2a2;text-align:center;white-space:nowrap;-webkit-text-stroke:0.2px #a2a2a2;letter-spacing:0.7px;-webkit-text-stroke:0;">10</div>
<div style="left:836px;top:316px;width:61px;height:1px;background:#b0b0b0;"></div>
<div style="left:806.30px;top:312.22px;width:30px;height:7.5px;line-height:7.5px;font-size:7.5px;color:#a2a2a2;text-align:center;white-space:nowrap;-webkit-text-stroke:0.2px #a2a2a2;letter-spacing:0.7px;-webkit-text-stroke:0;">5</div>
<div style="left:836px;top:369px;width:61px;height:1px;background:#f0f0f0;"></div>
<div style="left:806.30px;top:365.22px;width:30px;height:7.5px;line-height:7.5px;font-size:7.5px;color:#a2a2a2;text-align:center;white-space:nowrap;-webkit-text-stroke:0.2px #a2a2a2;letter-spacing:0.7px;-webkit-text-stroke:0;">0</div>
<div style="left:836px;top:422px;width:61px;height:1px;background:#b0b0b0;"></div>
<div style="left:806.30px;top:418.22px;width:30px;height:7.5px;line-height:7.5px;font-size:7.5px;color:#a2a2a2;text-align:center;white-space:nowrap;-webkit-text-stroke:0.2px #a2a2a2;letter-spacing:0.7px;-webkit-text-stroke:0;">-5</div>
<div style="left:836px;top:475px;width:61px;height:1px;background:#b0b0b0;"></div>
<div style="left:806.30px;top:471.22px;width:30px;height:7.5px;line-height:7.5px;font-size:7.5px;color:#a2a2a2;text-align:center;white-space:nowrap;-webkit-text-stroke:0.2px #a2a2a2;letter-spacing:0.7px;-webkit-text-stroke:0;">-10</div>
<div style="left:836px;top:528px;width:61px;height:1px;background:#b0b0b0;"></div>
<div style="left:806.30px;top:524.22px;width:30px;height:7.5px;line-height:7.5px;font-size:7.5px;color:#a2a2a2;text-align:center;white-space:nowrap;-webkit-text-stroke:0.2px #a2a2a2;letter-spacing:0.7px;-webkit-text-stroke:0;">-20</div>
<div style="left:836px;top:581px;width:61px;height:1px;background:#b0b0b0;"></div>
<div style="left:806.30px;top:577.22px;width:30px;height:7.5px;line-height:7.5px;font-size:7.5px;color:#a2a2a2;text-align:center;white-space:nowrap;-webkit-text-stroke:0.2px #a2a2a2;letter-spacing:0.7px;-webkit-text-stroke:0;">-30</div>
<div style="left:836px;top:634px;width:61px;height:1px;background:#b0b0b0;"></div>
<div style="left:806.30px;top:630.22px;width:30px;height:7.5px;line-height:7.5px;font-size:7.5px;color:#a2a2a2;text-align:center;white-space:nowrap;-webkit-text-stroke:0.2px #a2a2a2;letter-spacing:0.7px;-webkit-text-stroke:0;">-50</div>
<div style="left:879px;top:645px;width:20px;height:86px;background:radial-gradient(ellipse at 50% 50%, rgba(20,20,24,0.55) 0%, rgba(20,20,24,0.35) 45%, rgba(20,20,24,0) 72%);"></div>
<div style="left:842px;top:637px;width:47px;height:100px;background:linear-gradient(to bottom,#9c9c9c 0%,#cacaca 3.4%,#cecece 3.5%,#cecece 14.5%,#c4c4c4 14.6%,#c4c4c4 17%,#8e8e8e 17.1%,#8e8e8e 21%,#a8a8a8 21.1%,#a8a8a8 22%,#8c8c8c 22.1%,#8c8c8c 29.7%,#a0a0a0 29.8%,#a0a0a0 36.5%,#a8a8a8 36.6%,#a8a8a8 39%,#d0d0d0 39.1%,#d0d0d0 45.7%,#ffffff 45.8%,#ffffff 50%,#c0c0c0 50.1%,#c0c0c0 51.2%,#cfcfcf 51.3%,#cfcfcf 58.4%,#bdbdbd 58.5%,#bdbdbd 60%,#cdcdcd 60.1%,#cdcdcd 66%,#bcbcbc 66.1%,#bcbcbc 67.6%,#e6e6e6 67.7%,#e6e6e6 75.5%,#c4c4c4 75.6%,#c4c4c4 77.1%,#dedede 77.2%,#dedede 80.7%,#b2b2b2 80.8%,#b2b2b2 95%,#888888 100%);border-radius:2.5px;"></div>
<div style="left:814.50px;top:739.73px;width:100px;height:12.5px;line-height:12.5px;font-size:12.5px;color:#fff;text-align:center;white-space:nowrap;-webkit-text-stroke:0.2px #fff;">CH 08</div>
<div style="left:914px;top:198.00px;width:4px;height:7.00px;background:#6e1a1a"></div>
<div style="left:914px;top:208.07px;width:4px;height:7.00px;background:#73451a"></div>
<div style="left:914px;top:218.15px;width:4px;height:7.00px;background:#73451a"></div>
<div style="left:914px;top:228.22px;width:4px;height:7.00px;background:#73451a"></div>
<div style="left:914px;top:238.30px;width:4px;height:7.00px;background:#73451a"></div>
<div style="left:914px;top:248.37px;width:4px;height:7.00px;background:#73451a"></div>
<div style="left:914px;top:258.44px;width:4px;height:7.00px;background:#73451a"></div>
<div style="left:914px;top:268.52px;width:4px;height:7.00px;background:#73451a"></div>
<div style="left:914px;top:278.59px;width:4px;height:7.00px;background:#73451a"></div>
<div style="left:914px;top:288.67px;width:4px;height:7.00px;background:#73451a"></div>
<div style="left:914px;top:298.74px;width:4px;height:7.00px;background:#73451a"></div>
<div style="left:914px;top:308.81px;width:4px;height:7.00px;background:#73451a"></div>
<div style="left:914px;top:318.89px;width:4px;height:7.00px;background:#73451a"></div>
<div style="left:914px;top:328.96px;width:4px;height:7.00px;background:#73451a"></div>
<div style="left:914px;top:339.04px;width:4px;height:7.00px;background:#73451a"></div>
<div style="left:914px;top:349.11px;width:4px;height:7.00px;background:#73451a"></div>
<div style="left:914px;top:359.18px;width:4px;height:7.00px;background:#73451a"></div>
<div style="left:914px;top:369.26px;width:4px;height:7.00px;background:#73451a"></div>
<div style="left:914px;top:379.33px;width:4px;height:7.00px;background:#73451a"></div>
<div style="left:914px;top:389.41px;width:4px;height:7.00px;background:#73451a"></div>
<div style="left:914px;top:399.48px;width:4px;height:7.00px;background:#73451a"></div>
<div style="left:914px;top:409.55px;width:4px;height:7.00px;background:#73451a"></div>
<div style="left:914px;top:419.63px;width:4px;height:7.00px;background:#73451a"></div>
<div style="left:914px;top:429.70px;width:4px;height:7.00px;background:#73451a"></div>
<div style="left:914px;top:439.78px;width:4px;height:7.00px;background:#73451a"></div>
<div style="left:914px;top:449.85px;width:4px;height:7.00px;background:#73451a"></div>
<div style="left:914px;top:459.92px;width:4px;height:7.00px;background:#73451a"></div>
<div style="left:914px;top:470.00px;width:4px;height:7.00px;background:#73451a"></div>
<div style="left:914px;top:480.07px;width:4px;height:7.00px;background:#283c14"></div>
<div style="left:914px;top:490.15px;width:4px;height:7.00px;background:#283c14"></div>
<div style="left:914px;top:500.22px;width:4px;height:7.00px;background:#283c14"></div>
<div style="left:914px;top:510.29px;width:4px;height:7.00px;background:#283c14"></div>
<div style="left:914px;top:520.37px;width:4px;height:7.00px;background:#283c14"></div>
<div style="left:914px;top:530.44px;width:4px;height:7.00px;background:#283c14"></div>
<div style="left:914px;top:540.52px;width:4px;height:7.00px;background:#283c14"></div>
<div style="left:914px;top:550.59px;width:4px;height:7.00px;background:#283c14"></div>
<div style="left:914px;top:560.66px;width:4px;height:7.00px;background:#283c14"></div>
<div style="left:914px;top:570.74px;width:4px;height:7.00px;background:#283c14"></div>
<div style="left:914px;top:580.81px;width:4px;height:7.00px;background:#283c14"></div>
<div style="left:914px;top:590.89px;width:4px;height:7.00px;background:#283c14"></div>
<div style="left:914px;top:600.96px;width:4px;height:7.00px;background:#283c14"></div>
<div style="left:914px;top:611.03px;width:4px;height:7.00px;background:#283c14"></div>
<div style="left:914px;top:621.11px;width:4px;height:7.00px;background:#283c14"></div>
<div style="left:914px;top:631.18px;width:4px;height:7.00px;background:#283c14"></div>
<div style="left:914px;top:641.26px;width:4px;height:7.00px;background:#283c14"></div>
<div style="left:914px;top:651.33px;width:4px;height:7.00px;background:#283c14"></div>
<div style="left:914px;top:661.40px;width:4px;height:7.00px;background:#283c14"></div>
<div style="left:914px;top:671.48px;width:4px;height:7.00px;background:#283c14"></div>
<div style="left:914px;top:681.55px;width:4px;height:7.00px;background:#283c14"></div>
<div style="left:914px;top:691.63px;width:4px;height:7.00px;background:#283c14"></div>
<div style="left:914px;top:701.70px;width:4px;height:7.00px;background:#283c14"></div>
<div style="left:914px;top:711.77px;width:4px;height:7.00px;background:#283c14"></div>
<div style="left:914px;top:721.85px;width:4px;height:7.00px;background:#283c14"></div>
<div style="left:914px;top:731.92px;width:4px;height:7.00px;background:#283c14"></div>
<div style="left:914px;top:742.00px;width:4px;height:7.00px;background:#283c14"></div>
<div style="left:923px;top:198px;width:5px;height:117px;background:#f6201a;"></div>
<div style="left:923px;top:368px;width:5px;height:118px;background:#f6201a;"></div>
<div style="left:928px;top:99px;width:352px;height:653px;background:#1a1e25;"></div>
<div style="left:926px;top:46px;width:3px;height:53px;background:#141820;"></div>
<div style="left:929px;top:48px;width:45px;height:314px;background:#2a2b30;"></div>
<div style="left:929px;top:48px;width:45px;height:45px;background:#dcdcdc;"></div>
<div style="left:920.00px;top:64.43px;width:65px;height:12.5px;line-height:12.5px;font-size:12.5px;color:#141414;text-align:center;white-space:nowrap;-webkit-text-stroke:0.2px #141414;">FX 1</div>
<div style="left:929px;top:93px;width:45px;height:20px;background:#2a2b30;box-sizing:border-box;border:1px solid #0f97a7;"></div>
<div style="left:952px;top:92px;width:1px;height:20px;background:#e8e8e8;"></div>
<div style="left:929px;top:113px;width:45px;height:34px;background:#5a1818;box-sizing:border-box;border:1px solid #55576a;"></div>
<div style="left:919.80px;top:123.17px;width:65px;height:13px;line-height:13px;font-size:13px;color:#ece8e8;text-align:center;white-space:nowrap;-webkit-text-stroke:0.2px #ece8e8;">MUTE</div>
<svg style="left:939px;top:148px;width:20px;height:10px" width="20" height="10"><rect x="1.20" y="4.10" width="3.45" height="1.2" fill="#fff"/><path d="M11.95 4.60 C13.15 2.10 13.20 1.60 14.70 1.60 C16.30 1.60 17.00 2.90 17.00 4.60 C17.00 6.30 16.30 7.60 14.70 7.60 C13.20 7.60 13.15 7.10 11.95 4.60 C10.75 2.10 10.70 1.60 9.20 1.60 C7.60 1.60 6.90 2.90 6.90 4.60 C6.90 6.30 7.60 7.60 9.20 7.60 C10.70 7.60 10.75 7.10 11.95 4.60 Z" fill="none" stroke="#fff" stroke-width="1.15"/></svg>
<div style="left:948px;top:176px;width:3px;height:140px;background:#000;"></div>
<div style="left:943px;top:175px;width:14px;height:1px;background:#b0b0b0;"></div>
<div style="left:922.00px;top:171.22px;width:30px;height:7.5px;line-height:7.5px;font-size:7.5px;color:#a2a2a2;text-align:center;white-space:nowrap;-webkit-text-stroke:0.2px #a2a2a2;letter-spacing:0.7px;-webkit-text-stroke:0;">10</div>
<div style="left:943px;top:195px;width:14px;height:1px;background:#b0b0b0;"></div>
<div style="left:922.00px;top:191.22px;width:30px;height:7.5px;line-height:7.5px;font-size:7.5px;color:#a2a2a2;text-align:center;white-space:nowrap;-webkit-text-stroke:0.2px #a2a2a2;letter-spacing:0.7px;-webkit-text-stroke:0;">5</div>
<div style="left:943px;top:215px;width:14px;height:1px;background:#f0f0f0;"></div>
<div style="left:922.00px;top:211.22px;width:30px;height:7.5px;line-height:7.5px;font-size:7.5px;color:#a2a2a2;text-align:center;white-space:nowrap;-webkit-text-stroke:0.2px #a2a2a2;letter-spacing:0.7px;-webkit-text-stroke:0;">0</div>
<div style="left:943px;top:235px;width:14px;height:1px;background:#b0b0b0;"></div>
<div style="left:922.00px;top:231.22px;width:30px;height:7.5px;line-height:7.5px;font-size:7.5px;color:#a2a2a2;text-align:center;white-space:nowrap;-webkit-text-stroke:0.2px #a2a2a2;letter-spacing:0.7px;-webkit-text-stroke:0;">-5</div>
<div style="left:943px;top:254px;width:14px;height:1px;background:#b0b0b0;"></div>
<div style="left:922.00px;top:250.22px;width:30px;height:7.5px;line-height:7.5px;font-size:7.5px;color:#a2a2a2;text-align:center;white-space:nowrap;-webkit-text-stroke:0.2px #a2a2a2;letter-spacing:0.7px;-webkit-text-stroke:0;">-10</div>
<div style="left:943px;top:274px;width:14px;height:1px;background:#b0b0b0;"></div>
<div style="left:922.00px;top:270.22px;width:30px;height:7.5px;line-height:7.5px;font-size:7.5px;color:#a2a2a2;text-align:center;white-space:nowrap;-webkit-text-stroke:0.2px #a2a2a2;letter-spacing:0.7px;-webkit-text-stroke:0;">-20</div>
<div style="left:943px;top:294px;width:14px;height:1px;background:#b0b0b0;"></div>
<div style="left:922.00px;top:290.22px;width:30px;height:7.5px;line-height:7.5px;font-size:7.5px;color:#a2a2a2;text-align:center;white-space:nowrap;-webkit-text-stroke:0.2px #a2a2a2;letter-spacing:0.7px;-webkit-text-stroke:0;">-30</div>
<div style="left:943px;top:314px;width:14px;height:1px;background:#b0b0b0;"></div>
<div style="left:922.00px;top:310.22px;width:30px;height:7.5px;line-height:7.5px;font-size:7.5px;color:#a2a2a2;text-align:center;white-space:nowrap;-webkit-text-stroke:0.2px #a2a2a2;letter-spacing:0.7px;-webkit-text-stroke:0;">-50</div>
<div style="left:940px;top:314px;width:18px;height:38px;background:linear-gradient(to bottom,#9c9c9c 0%,#cacaca 3.4%,#cecece 3.5%,#cecece 14.5%,#c4c4c4 14.6%,#c4c4c4 17%,#8e8e8e 17.1%,#8e8e8e 21%,#a8a8a8 21.1%,#a8a8a8 22%,#8c8c8c 22.1%,#8c8c8c 29.7%,#a0a0a0 29.8%,#a0a0a0 36.5%,#a8a8a8 36.6%,#a8a8a8 39%,#d0d0d0 39.1%,#d0d0d0 45.7%,#ffffff 45.8%,#ffffff 50%,#c0c0c0 50.1%,#c0c0c0 51.2%,#cfcfcf 51.3%,#cfcfcf 58.4%,#bdbdbd 58.5%,#bdbdbd 60%,#cdcdcd 60.1%,#cdcdcd 66%,#bcbcbc 66.1%,#bcbcbc 67.6%,#e6e6e6 67.7%,#e6e6e6 75.5%,#c4c4c4 75.6%,#c4c4c4 77.1%,#dedede 77.2%,#dedede 80.7%,#b2b2b2 80.8%,#b2b2b2 95%,#888888 100%);border-radius:1.5px;"></div>
<div style="left:919.20px;top:349.89px;width:60px;height:12px;line-height:12px;font-size:12px;color:#fff;text-align:center;white-space:nowrap;-webkit-text-stroke:0.2px #fff;">FX 1</div>
<div style="left:967px;top:147.00px;width:5px;height:7.00px;background:#6e1a1a"></div>
<div style="left:967px;top:157.24px;width:5px;height:7.00px;background:#73451a"></div>
<div style="left:967px;top:167.48px;width:5px;height:7.00px;background:#73451a"></div>
<div style="left:967px;top:177.72px;width:5px;height:7.00px;background:#73451a"></div>
<div style="left:967px;top:187.96px;width:5px;height:7.00px;background:#73451a"></div>
<div style="left:967px;top:198.20px;width:5px;height:7.00px;background:#73451a"></div>
<div style="left:967px;top:208.44px;width:5px;height:7.00px;background:#73451a"></div>
<div style="left:967px;top:218.68px;width:5px;height:7.00px;background:#73451a"></div>
<div style="left:967px;top:228.92px;width:5px;height:7.00px;background:#73451a"></div>
<div style="left:967px;top:239.16px;width:5px;height:7.00px;background:#73451a"></div>
<div style="left:967px;top:249.40px;width:5px;height:7.00px;background:#73451a"></div>
<div style="left:967px;top:259.64px;width:5px;height:7.00px;background:#283c14"></div>
<div style="left:967px;top:269.88px;width:5px;height:7.00px;background:#283c14"></div>
<div style="left:967px;top:280.12px;width:5px;height:7.00px;background:#283c14"></div>
<div style="left:967px;top:290.36px;width:5px;height:7.00px;background:#283c14"></div>
<div style="left:967px;top:300.60px;width:5px;height:7.00px;background:#283c14"></div>
<div style="left:967px;top:310.84px;width:5px;height:7.00px;background:#283c14"></div>
<div style="left:967px;top:321.08px;width:5px;height:7.00px;background:#283c14"></div>
<div style="left:967px;top:331.32px;width:5px;height:7.00px;background:#283c14"></div>
<div style="left:967px;top:341.56px;width:5px;height:7.00px;background:#283c14"></div>
<div style="left:967px;top:351.80px;width:5px;height:7.00px;background:#283c14"></div>
<div style="left:977px;top:48px;width:45px;height:314px;background:#2a2b30;"></div>
<div style="left:977px;top:48px;width:45px;height:45px;background:#dcdcdc;"></div>
<div style="left:968.00px;top:64.43px;width:65px;height:12.5px;line-height:12.5px;font-size:12.5px;color:#141414;text-align:center;white-space:nowrap;-webkit-text-stroke:0.2px #141414;">FX 2</div>
<div style="left:977px;top:93px;width:45px;height:20px;background:#2a2b30;box-sizing:border-box;border:1px solid #0f97a7;"></div>
<div style="left:1000px;top:92px;width:1px;height:20px;background:#e8e8e8;"></div>
<div style="left:977px;top:113px;width:45px;height:34px;background:#5a1818;box-sizing:border-box;border:1px solid #55576a;"></div>
<div style="left:967.80px;top:123.17px;width:65px;height:13px;line-height:13px;font-size:13px;color:#ece8e8;text-align:center;white-space:nowrap;-webkit-text-stroke:0.2px #ece8e8;">MUTE</div>
<svg style="left:987px;top:148px;width:20px;height:10px" width="20" height="10"><rect x="1.20" y="4.10" width="3.45" height="1.2" fill="#fff"/><path d="M11.95 4.60 C13.15 2.10 13.20 1.60 14.70 1.60 C16.30 1.60 17.00 2.90 17.00 4.60 C17.00 6.30 16.30 7.60 14.70 7.60 C13.20 7.60 13.15 7.10 11.95 4.60 C10.75 2.10 10.70 1.60 9.20 1.60 C7.60 1.60 6.90 2.90 6.90 4.60 C6.90 6.30 7.60 7.60 9.20 7.60 C10.70 7.60 10.75 7.10 11.95 4.60 Z" fill="none" stroke="#fff" stroke-width="1.15"/></svg>
<div style="left:996px;top:176px;width:3px;height:140px;background:#000;"></div>
<div style="left:991px;top:175px;width:14px;height:1px;background:#b0b0b0;"></div>
<div style="left:970.00px;top:171.22px;width:30px;height:7.5px;line-height:7.5px;font-size:7.5px;color:#a2a2a2;text-align:center;white-space:nowrap;-webkit-text-stroke:0.2px #a2a2a2;letter-spacing:0.7px;-webkit-text-stroke:0;">10</div>
<div style="left:991px;top:195px;width:14px;height:1px;background:#b0b0b0;"></div>
<div style="left:970.00px;top:191.22px;width:30px;height:7.5px;line-height:7.5px;font-size:7.5px;color:#a2a2a2;text-align:center;white-space:nowrap;-webkit-text-stroke:0.2px #a2a2a2;letter-spacing:0.7px;-webkit-text-stroke:0;">5</div>
<div style="left:991px;top:215px;width:14px;height:1px;background:#f0f0f0;"></div>
<div style="left:970.00px;top:211.22px;width:30px;height:7.5px;line-height:7.5px;font-size:7.5px;color:#a2a2a2;text-align:center;white-space:nowrap;-webkit-text-stroke:0.2px #a2a2a2;letter-spacing:0.7px;-webkit-text-stroke:0;">0</div>
<div style="left:991px;top:235px;width:14px;height:1px;background:#b0b0b0;"></div>
<div style="left:970.00px;top:231.22px;width:30px;height:7.5px;line-height:7.5px;font-size:7.5px;color:#a2a2a2;text-align:center;white-space:nowrap;-webkit-text-stroke:0.2px #a2a2a2;letter-spacing:0.7px;-webkit-text-stroke:0;">-5</div>
<div style="left:991px;top:254px;width:14px;height:1px;background:#b0b0b0;"></div>
<div style="left:970.00px;top:250.22px;width:30px;height:7.5px;line-height:7.5px;font-size:7.5px;color:#a2a2a2;text-align:center;white-space:nowrap;-webkit-text-stroke:0.2px #a2a2a2;letter-spacing:0.7px;-webkit-text-stroke:0;">-10</div>
<div style="left:991px;top:274px;width:14px;height:1px;background:#b0b0b0;"></div>
<div style="left:970.00px;top:270.22px;width:30px;height:7.5px;line-height:7.5px;font-size:7.5px;color:#a2a2a2;text-align:center;white-space:nowrap;-webkit-text-stroke:0.2px #a2a2a2;letter-spacing:0.7px;-webkit-text-stroke:0;">-20</div>
<div style="left:991px;top:294px;width:14px;height:1px;background:#b0b0b0;"></div>
<div style="left:970.00px;top:290.22px;width:30px;height:7.5px;line-height:7.5px;font-size:7.5px;color:#a2a2a2;text-align:center;white-space:nowrap;-webkit-text-stroke:0.2px #a2a2a2;letter-spacing:0.7px;-webkit-text-stroke:0;">-30</div>
<div style="left:991px;top:314px;width:14px;height:1px;background:#b0b0b0;"></div>
<div style="left:970.00px;top:310.22px;width:30px;height:7.5px;line-height:7.5px;font-size:7.5px;color:#a2a2a2;text-align:center;white-space:nowrap;-webkit-text-stroke:0.2px #a2a2a2;letter-spacing:0.7px;-webkit-text-stroke:0;">-50</div>
<div style="left:988px;top:314px;width:18px;height:38px;background:linear-gradient(to bottom,#9c9c9c 0%,#cacaca 3.4%,#cecece 3.5%,#cecece 14.5%,#c4c4c4 14.6%,#c4c4c4 17%,#8e8e8e 17.1%,#8e8e8e 21%,#a8a8a8 21.1%,#a8a8a8 22%,#8c8c8c 22.1%,#8c8c8c 29.7%,#a0a0a0 29.8%,#a0a0a0 36.5%,#a8a8a8 36.6%,#a8a8a8 39%,#d0d0d0 39.1%,#d0d0d0 45.7%,#ffffff 45.8%,#ffffff 50%,#c0c0c0 50.1%,#c0c0c0 51.2%,#cfcfcf 51.3%,#cfcfcf 58.4%,#bdbdbd 58.5%,#bdbdbd 60%,#cdcdcd 60.1%,#cdcdcd 66%,#bcbcbc 66.1%,#bcbcbc 67.6%,#e6e6e6 67.7%,#e6e6e6 75.5%,#c4c4c4 75.6%,#c4c4c4 77.1%,#dedede 77.2%,#dedede 80.7%,#b2b2b2 80.8%,#b2b2b2 95%,#888888 100%);border-radius:1.5px;"></div>
<div style="left:967.20px;top:349.89px;width:60px;height:12px;line-height:12px;font-size:12px;color:#fff;text-align:center;white-space:nowrap;-webkit-text-stroke:0.2px #fff;">FX 2</div>
<div style="left:1015px;top:147.00px;width:5px;height:7.00px;background:#6e1a1a"></div>
<div style="left:1015px;top:157.24px;width:5px;height:7.00px;background:#73451a"></div>
<div style="left:1015px;top:167.48px;width:5px;height:7.00px;background:#73451a"></div>
<div style="left:1015px;top:177.72px;width:5px;height:7.00px;background:#73451a"></div>
<div style="left:1015px;top:187.96px;width:5px;height:7.00px;background:#73451a"></div>
<div style="left:1015px;top:198.20px;width:5px;height:7.00px;background:#73451a"></div>
<div style="left:1015px;top:208.44px;width:5px;height:7.00px;background:#73451a"></div>
<div style="left:1015px;top:218.68px;width:5px;height:7.00px;background:#73451a"></div>
<div style="left:1015px;top:228.92px;width:5px;height:7.00px;background:#73451a"></div>
<div style="left:1015px;top:239.16px;width:5px;height:7.00px;background:#73451a"></div>
<div style="left:1015px;top:249.40px;width:5px;height:7.00px;background:#73451a"></div>
<div style="left:1015px;top:259.64px;width:5px;height:7.00px;background:#283c14"></div>
<div style="left:1015px;top:269.88px;width:5px;height:7.00px;background:#283c14"></div>
<div style="left:1015px;top:280.12px;width:5px;height:7.00px;background:#283c14"></div>
<div style="left:1015px;top:290.36px;width:5px;height:7.00px;background:#283c14"></div>
<div style="left:1015px;top:300.60px;width:5px;height:7.00px;background:#283c14"></div>
<div style="left:1015px;top:310.84px;width:5px;height:7.00px;background:#283c14"></div>
<div style="left:1015px;top:321.08px;width:5px;height:7.00px;background:#283c14"></div>
<div style="left:1015px;top:331.32px;width:5px;height:7.00px;background:#283c14"></div>
<div style="left:1015px;top:341.56px;width:5px;height:7.00px;background:#283c14"></div>
<div style="left:1015px;top:351.80px;width:5px;height:7.00px;background:#283c14"></div>
<div style="left:1025px;top:48px;width:45px;height:314px;background:#2a2b30;"></div>
<div style="left:1025px;top:48px;width:45px;height:45px;background:#dcdcdc;"></div>
<div style="left:1016.00px;top:64.43px;width:65px;height:12.5px;line-height:12.5px;font-size:12.5px;color:#141414;text-align:center;white-space:nowrap;-webkit-text-stroke:0.2px #141414;">FX 3</div>
<div style="left:1025px;top:93px;width:45px;height:20px;background:#2a2b30;box-sizing:border-box;border:1px solid #0f97a7;"></div>
<div style="left:1048px;top:92px;width:1px;height:20px;background:#e8e8e8;"></div>
<div style="left:1025px;top:113px;width:45px;height:34px;background:#5a1818;box-sizing:border-box;border:1px solid #55576a;"></div>
<div style="left:1015.80px;top:123.17px;width:65px;height:13px;line-height:13px;font-size:13px;color:#ece8e8;text-align:center;white-space:nowrap;-webkit-text-stroke:0.2px #ece8e8;">MUTE</div>
<svg style="left:1035px;top:148px;width:20px;height:10px" width="20" height="10"><rect x="1.20" y="4.10" width="3.45" height="1.2" fill="#fff"/><path d="M11.95 4.60 C13.15 2.10 13.20 1.60 14.70 1.60 C16.30 1.60 17.00 2.90 17.00 4.60 C17.00 6.30 16.30 7.60 14.70 7.60 C13.20 7.60 13.15 7.10 11.95 4.60 C10.75 2.10 10.70 1.60 9.20 1.60 C7.60 1.60 6.90 2.90 6.90 4.60 C6.90 6.30 7.60 7.60 9.20 7.60 C10.70 7.60 10.75 7.10 11.95 4.60 Z" fill="none" stroke="#fff" stroke-width="1.15"/></svg>
<div style="left:1044px;top:176px;width:3px;height:140px;background:#000;"></div>
<div style="left:1039px;top:175px;width:14px;height:1px;background:#b0b0b0;"></div>
<div style="left:1018.00px;top:171.22px;width:30px;height:7.5px;line-height:7.5px;font-size:7.5px;color:#a2a2a2;text-align:center;white-space:nowrap;-webkit-text-stroke:0.2px #a2a2a2;letter-spacing:0.7px;-webkit-text-stroke:0;">10</div>
<div style="left:1039px;top:195px;width:14px;height:1px;background:#b0b0b0;"></div>
<div style="left:1018.00px;top:191.22px;width:30px;height:7.5px;line-height:7.5px;font-size:7.5px;color:#a2a2a2;text-align:center;white-space:nowrap;-webkit-text-stroke:0.2px #a2a2a2;letter-spacing:0.7px;-webkit-text-stroke:0;">5</div>
<div style="left:1039px;top:215px;width:14px;height:1px;background:#f0f0f0;"></div>
<div style="left:1018.00px;top:211.22px;width:30px;height:7.5px;line-height:7.5px;font-size:7.5px;color:#a2a2a2;text-align:center;white-space:nowrap;-webkit-text-stroke:0.2px #a2a2a2;letter-spacing:0.7px;-webkit-text-stroke:0;">0</div>
<div style="left:1039px;top:235px;width:14px;height:1px;background:#b0b0b0;"></div>
<div style="left:1018.00px;top:231.22px;width:30px;height:7.5px;line-height:7.5px;font-size:7.5px;color:#a2a2a2;text-align:center;white-space:nowrap;-webkit-text-stroke:0.2px #a2a2a2;letter-spacing:0.7px;-webkit-text-stroke:0;">-5</div>
<div style="left:1039px;top:254px;width:14px;height:1px;background:#b0b0b0;"></div>
<div style="left:1018.00px;top:250.22px;width:30px;height:7.5px;line-height:7.5px;font-size:7.5px;color:#a2a2a2;text-align:center;white-space:nowrap;-webkit-text-stroke:0.2px #a2a2a2;letter-spacing:0.7px;-webkit-text-stroke:0;">-10</div>
<div style="left:1039px;top:274px;width:14px;height:1px;background:#b0b0b0;"></div>
<div style="left:1018.00px;top:270.22px;width:30px;height:7.5px;line-height:7.5px;font-size:7.5px;color:#a2a2a2;text-align:center;white-space:nowrap;-webkit-text-stroke:0.2px #a2a2a2;letter-spacing:0.7px;-webkit-text-stroke:0;">-20</div>
<div style="left:1039px;top:294px;width:14px;height:1px;background:#b0b0b0;"></div>
<div style="left:1018.00px;top:290.22px;width:30px;height:7.5px;line-height:7.5px;font-size:7.5px;color:#a2a2a2;text-align:center;white-space:nowrap;-webkit-text-stroke:0.2px #a2a2a2;letter-spacing:0.7px;-webkit-text-stroke:0;">-30</div>
<div style="left:1039px;top:314px;width:14px;height:1px;background:#b0b0b0;"></div>
<div style="left:1018.00px;top:310.22px;width:30px;height:7.5px;line-height:7.5px;font-size:7.5px;color:#a2a2a2;text-align:center;white-space:nowrap;-webkit-text-stroke:0.2px #a2a2a2;letter-spacing:0.7px;-webkit-text-stroke:0;">-50</div>
<div style="left:1036px;top:314px;width:18px;height:38px;background:linear-gradient(to bottom,#9c9c9c 0%,#cacaca 3.4%,#cecece 3.5%,#cecece 14.5%,#c4c4c4 14.6%,#c4c4c4 17%,#8e8e8e 17.1%,#8e8e8e 21%,#a8a8a8 21.1%,#a8a8a8 22%,#8c8c8c 22.1%,#8c8c8c 29.7%,#a0a0a0 29.8%,#a0a0a0 36.5%,#a8a8a8 36.6%,#a8a8a8 39%,#d0d0d0 39.1%,#d0d0d0 45.7%,#ffffff 45.8%,#ffffff 50%,#c0c0c0 50.1%,#c0c0c0 51.2%,#cfcfcf 51.3%,#cfcfcf 58.4%,#bdbdbd 58.5%,#bdbdbd 60%,#cdcdcd 60.1%,#cdcdcd 66%,#bcbcbc 66.1%,#bcbcbc 67.6%,#e6e6e6 67.7%,#e6e6e6 75.5%,#c4c4c4 75.6%,#c4c4c4 77.1%,#dedede 77.2%,#dedede 80.7%,#b2b2b2 80.8%,#b2b2b2 95%,#888888 100%);border-radius:1.5px;"></div>
<div style="left:1015.20px;top:349.89px;width:60px;height:12px;line-height:12px;font-size:12px;color:#fff;text-align:center;white-space:nowrap;-webkit-text-stroke:0.2px #fff;">FX 3</div>
<div style="left:1063px;top:147.00px;width:5px;height:7.00px;background:#6e1a1a"></div>
<div style="left:1063px;top:157.24px;width:5px;height:7.00px;background:#73451a"></div>
<div style="left:1063px;top:167.48px;width:5px;height:7.00px;background:#73451a"></div>
<div style="left:1063px;top:177.72px;width:5px;height:7.00px;background:#73451a"></div>
<div style="left:1063px;top:187.96px;width:5px;height:7.00px;background:#73451a"></div>
<div style="left:1063px;top:198.20px;width:5px;height:7.00px;background:#73451a"></div>
<div style="left:1063px;top:208.44px;width:5px;height:7.00px;background:#73451a"></div>
<div style="left:1063px;top:218.68px;width:5px;height:7.00px;background:#73451a"></div>
<div style="left:1063px;top:228.92px;width:5px;height:7.00px;background:#73451a"></div>
<div style="left:1063px;top:239.16px;width:5px;height:7.00px;background:#73451a"></div>
<div style="left:1063px;top:249.40px;width:5px;height:7.00px;background:#73451a"></div>
<div style="left:1063px;top:259.64px;width:5px;height:7.00px;background:#283c14"></div>
<div style="left:1063px;top:269.88px;width:5px;height:7.00px;background:#283c14"></div>
<div style="left:1063px;top:280.12px;width:5px;height:7.00px;background:#283c14"></div>
<div style="left:1063px;top:290.36px;width:5px;height:7.00px;background:#283c14"></div>
<div style="left:1063px;top:300.60px;width:5px;height:7.00px;background:#283c14"></div>
<div style="left:1063px;top:310.84px;width:5px;height:7.00px;background:#283c14"></div>
<div style="left:1063px;top:321.08px;width:5px;height:7.00px;background:#283c14"></div>
<div style="left:1063px;top:331.32px;width:5px;height:7.00px;background:#283c14"></div>
<div style="left:1063px;top:341.56px;width:5px;height:7.00px;background:#283c14"></div>
<div style="left:1063px;top:351.80px;width:5px;height:7.00px;background:#283c14"></div>
<div style="left:1073px;top:48px;width:45px;height:314px;background:#2a2b30;"></div>
<div style="left:1073px;top:48px;width:45px;height:45px;background:#dcdcdc;"></div>
<div style="left:1064.00px;top:64.43px;width:65px;height:12.5px;line-height:12.5px;font-size:12.5px;color:#141414;text-align:center;white-space:nowrap;-webkit-text-stroke:0.2px #141414;">FX 4</div>
<div style="left:1073px;top:93px;width:45px;height:20px;background:#2a2b30;box-sizing:border-box;border:1px solid #0f97a7;"></div>
<div style="left:1096px;top:92px;width:1px;height:20px;background:#e8e8e8;"></div>
<div style="left:1073px;top:113px;width:45px;height:34px;background:#5a1818;box-sizing:border-box;border:1px solid #55576a;"></div>
<div style="left:1063.80px;top:123.17px;width:65px;height:13px;line-height:13px;font-size:13px;color:#ece8e8;text-align:center;white-space:nowrap;-webkit-text-stroke:0.2px #ece8e8;">MUTE</div>
<svg style="left:1083px;top:148px;width:20px;height:10px" width="20" height="10"><rect x="1.20" y="4.10" width="3.45" height="1.2" fill="#fff"/><path d="M11.95 4.60 C13.15 2.10 13.20 1.60 14.70 1.60 C16.30 1.60 17.00 2.90 17.00 4.60 C17.00 6.30 16.30 7.60 14.70 7.60 C13.20 7.60 13.15 7.10 11.95 4.60 C10.75 2.10 10.70 1.60 9.20 1.60 C7.60 1.60 6.90 2.90 6.90 4.60 C6.90 6.30 7.60 7.60 9.20 7.60 C10.70 7.60 10.75 7.10 11.95 4.60 Z" fill="none" stroke="#fff" stroke-width="1.15"/></svg>
<div style="left:1092px;top:176px;width:3px;height:140px;background:#000;"></div>
<div style="left:1087px;top:175px;width:14px;height:1px;background:#b0b0b0;"></div>
<div style="left:1066.00px;top:171.22px;width:30px;height:7.5px;line-height:7.5px;font-size:7.5px;color:#a2a2a2;text-align:center;white-space:nowrap;-webkit-text-stroke:0.2px #a2a2a2;letter-spacing:0.7px;-webkit-text-stroke:0;">10</div>
<div style="left:1087px;top:195px;width:14px;height:1px;background:#b0b0b0;"></div>
<div style="left:1066.00px;top:191.22px;width:30px;height:7.5px;line-height:7.5px;font-size:7.5px;color:#a2a2a2;text-align:center;white-space:nowrap;-webkit-text-stroke:0.2px #a2a2a2;letter-spacing:0.7px;-webkit-text-stroke:0;">5</div>
<div style="left:1087px;top:215px;width:14px;height:1px;background:#f0f0f0;"></div>
<div style="left:1066.00px;top:211.22px;width:30px;height:7.5px;line-height:7.5px;font-size:7.5px;color:#a2a2a2;text-align:center;white-space:nowrap;-webkit-text-stroke:0.2px #a2a2a2;letter-spacing:0.7px;-webkit-text-stroke:0;">0</div>
<div style="left:1087px;top:235px;width:14px;height:1px;background:#b0b0b0;"></div>
<div style="left:1066.00px;top:231.22px;width:30px;height:7.5px;line-height:7.5px;font-size:7.5px;color:#a2a2a2;text-align:center;white-space:nowrap;-webkit-text-stroke:0.2px #a2a2a2;letter-spacing:0.7px;-webkit-text-stroke:0;">-5</div>
<div style="left:1087px;top:254px;width:14px;height:1px;background:#b0b0b0;"></div>
<div style="left:1066.00px;top:250.22px;width:30px;height:7.5px;line-height:7.5px;font-size:7.5px;color:#a2a2a2;text-align:center;white-space:nowrap;-webkit-text-stroke:0.2px #a2a2a2;letter-spacing:0.7px;-webkit-text-stroke:0;">-10</div>
<div style="left:1087px;top:274px;width:14px;height:1px;background:#b0b0b0;"></div>
<div style="left:1066.00px;top:270.22px;width:30px;height:7.5px;line-height:7.5px;font-size:7.5px;color:#a2a2a2;text-align:center;white-space:nowrap;-webkit-text-stroke:0.2px #a2a2a2;letter-spacing:0.7px;-webkit-text-stroke:0;">-20</div>
<div style="left:1087px;top:294px;width:14px;height:1px;background:#b0b0b0;"></div>
<div style="left:1066.00px;top:290.22px;width:30px;height:7.5px;line-height:7.5px;font-size:7.5px;color:#a2a2a2;text-align:center;white-space:nowrap;-webkit-text-stroke:0.2px #a2a2a2;letter-spacing:0.7px;-webkit-text-stroke:0;">-30</div>
<div style="left:1087px;top:314px;width:14px;height:1px;background:#b0b0b0;"></div>
<div style="left:1066.00px;top:310.22px;width:30px;height:7.5px;line-height:7.5px;font-size:7.5px;color:#a2a2a2;text-align:center;white-space:nowrap;-webkit-text-stroke:0.2px #a2a2a2;letter-spacing:0.7px;-webkit-text-stroke:0;">-50</div>
<div style="left:1084px;top:314px;width:18px;height:38px;background:linear-gradient(to bottom,#9c9c9c 0%,#cacaca 3.4%,#cecece 3.5%,#cecece 14.5%,#c4c4c4 14.6%,#c4c4c4 17%,#8e8e8e 17.1%,#8e8e8e 21%,#a8a8a8 21.1%,#a8a8a8 22%,#8c8c8c 22.1%,#8c8c8c 29.7%,#a0a0a0 29.8%,#a0a0a0 36.5%,#a8a8a8 36.6%,#a8a8a8 39%,#d0d0d0 39.1%,#d0d0d0 45.7%,#ffffff 45.8%,#ffffff 50%,#c0c0c0 50.1%,#c0c0c0 51.2%,#cfcfcf 51.3%,#cfcfcf 58.4%,#bdbdbd 58.5%,#bdbdbd 60%,#cdcdcd 60.1%,#cdcdcd 66%,#bcbcbc 66.1%,#bcbcbc 67.6%,#e6e6e6 67.7%,#e6e6e6 75.5%,#c4c4c4 75.6%,#c4c4c4 77.1%,#dedede 77.2%,#dedede 80.7%,#b2b2b2 80.8%,#b2b2b2 95%,#888888 100%);border-radius:1.5px;"></div>
<div style="left:1063.20px;top:349.89px;width:60px;height:12px;line-height:12px;font-size:12px;color:#fff;text-align:center;white-space:nowrap;-webkit-text-stroke:0.2px #fff;">FX 4</div>
<div style="left:1111px;top:147.00px;width:5px;height:7.00px;background:#6e1a1a"></div>
<div style="left:1111px;top:157.24px;width:5px;height:7.00px;background:#73451a"></div>
<div style="left:1111px;top:167.48px;width:5px;height:7.00px;background:#73451a"></div>
<div style="left:1111px;top:177.72px;width:5px;height:7.00px;background:#73451a"></div>
<div style="left:1111px;top:187.96px;width:5px;height:7.00px;background:#73451a"></div>
<div style="left:1111px;top:198.20px;width:5px;height:7.00px;background:#73451a"></div>
<div style="left:1111px;top:208.44px;width:5px;height:7.00px;background:#73451a"></div>
<div style="left:1111px;top:218.68px;width:5px;height:7.00px;background:#73451a"></div>
<div style="left:1111px;top:228.92px;width:5px;height:7.00px;background:#73451a"></div>
<div style="left:1111px;top:239.16px;width:5px;height:7.00px;background:#73451a"></div>
<div style="left:1111px;top:249.40px;width:5px;height:7.00px;background:#73451a"></div>
<div style="left:1111px;top:259.64px;width:5px;height:7.00px;background:#283c14"></div>
<div style="left:1111px;top:269.88px;width:5px;height:7.00px;background:#283c14"></div>
<div style="left:1111px;top:280.12px;width:5px;height:7.00px;background:#283c14"></div>
<div style="left:1111px;top:290.36px;width:5px;height:7.00px;background:#283c14"></div>
<div style="left:1111px;top:300.60px;width:5px;height:7.00px;background:#283c14"></div>
<div style="left:1111px;top:310.84px;width:5px;height:7.00px;background:#283c14"></div>
<div style="left:1111px;top:321.08px;width:5px;height:7.00px;background:#283c14"></div>
<div style="left:1111px;top:331.32px;width:5px;height:7.00px;background:#283c14"></div>
<div style="left:1111px;top:341.56px;width:5px;height:7.00px;background:#283c14"></div>
<div style="left:1111px;top:351.80px;width:5px;height:7.00px;background:#283c14"></div>
<div style="left:929px;top:365px;width:45px;height:387px;background:#2a2b30;"></div>
<div style="left:929px;top:365px;width:45px;height:45px;background:#dcdcdc;"></div>
<div style="left:920.00px;top:381.73px;width:65px;height:12.5px;line-height:12.5px;font-size:12.5px;color:#141414;text-align:center;white-space:nowrap;-webkit-text-stroke:0.2px #141414;">Bus 1</div>
<div style="left:929px;top:410px;width:45px;height:20px;background:#2a2b30;box-sizing:border-box;border:1px solid #0f97a7;"></div>
<div style="left:952px;top:409px;width:1px;height:20px;background:#e8e8e8;"></div>
<div style="left:929px;top:430px;width:45px;height:34px;background:#5a1818;box-sizing:border-box;border:1px solid #55576a;"></div>
<div style="left:919.80px;top:440.17px;width:65px;height:13px;line-height:13px;font-size:13px;color:#ece8e8;text-align:center;white-space:nowrap;-webkit-text-stroke:0.2px #ece8e8;">MUTE</div>
<svg style="left:939px;top:465px;width:20px;height:10px" width="20" height="10"><rect x="1.20" y="4.10" width="3.45" height="1.2" fill="#fff"/><path d="M11.95 4.60 C13.15 2.10 13.20 1.60 14.70 1.60 C16.30 1.60 17.00 2.90 17.00 4.60 C17.00 6.30 16.30 7.60 14.70 7.60 C13.20 7.60 13.15 7.10 11.95 4.60 C10.75 2.10 10.70 1.60 9.20 1.60 C7.60 1.60 6.90 2.90 6.90 4.60 C6.90 6.30 7.60 7.60 9.20 7.60 C10.70 7.60 10.75 7.10 11.95 4.60 Z" fill="none" stroke="#fff" stroke-width="1.15"/></svg>
<div style="left:948px;top:494px;width:3px;height:211px;background:#000;"></div>
<div style="left:943px;top:493px;width:14px;height:1px;background:#b0b0b0;"></div>
<div style="left:922.00px;top:489.22px;width:30px;height:7.5px;line-height:7.5px;font-size:7.5px;color:#a2a2a2;text-align:center;white-space:nowrap;-webkit-text-stroke:0.2px #a2a2a2;letter-spacing:0.7px;-webkit-text-stroke:0;">10</div>
<div style="left:943px;top:521px;width:14px;height:1px;background:#b0b0b0;"></div>
<div style="left:922.00px;top:517.22px;width:30px;height:7.5px;line-height:7.5px;font-size:7.5px;color:#a2a2a2;text-align:center;white-space:nowrap;-webkit-text-stroke:0.2px #a2a2a2;letter-spacing:0.7px;-webkit-text-stroke:0;">5</div>
<div style="left:943px;top:550px;width:14px;height:1px;background:#f0f0f0;"></div>
<div style="left:922.00px;top:546.22px;width:30px;height:7.5px;line-height:7.5px;font-size:7.5px;color:#a2a2a2;text-align:center;white-space:nowrap;-webkit-text-stroke:0.2px #a2a2a2;letter-spacing:0.7px;-webkit-text-stroke:0;">0</div>
<div style="left:943px;top:579px;width:14px;height:1px;background:#b0b0b0;"></div>
<div style="left:922.00px;top:575.22px;width:30px;height:7.5px;line-height:7.5px;font-size:7.5px;color:#a2a2a2;text-align:center;white-space:nowrap;-webkit-text-stroke:0.2px #a2a2a2;letter-spacing:0.7px;-webkit-text-stroke:0;">-5</div>
<div style="left:943px;top:607px;width:14px;height:1px;background:#b0b0b0;"></div>
<div style="left:922.00px;top:603.22px;width:30px;height:7.5px;line-height:7.5px;font-size:7.5px;color:#a2a2a2;text-align:center;white-space:nowrap;-webkit-text-stroke:0.2px #a2a2a2;letter-spacing:0.7px;-webkit-text-stroke:0;">-10</div>
<div style="left:943px;top:636px;width:14px;height:1px;background:#b0b0b0;"></div>
<div style="left:922.00px;top:632.22px;width:30px;height:7.5px;line-height:7.5px;font-size:7.5px;color:#a2a2a2;text-align:center;white-space:nowrap;-webkit-text-stroke:0.2px #a2a2a2;letter-spacing:0.7px;-webkit-text-stroke:0;">-20</div>
<div style="left:943px;top:665px;width:14px;height:1px;background:#b0b0b0;"></div>
<div style="left:922.00px;top:661.22px;width:30px;height:7.5px;line-height:7.5px;font-size:7.5px;color:#a2a2a2;text-align:center;white-space:nowrap;-webkit-text-stroke:0.2px #a2a2a2;letter-spacing:0.7px;-webkit-text-stroke:0;">-30</div>
<div style="left:943px;top:693px;width:14px;height:1px;background:#b0b0b0;"></div>
<div style="left:922.00px;top:689.22px;width:30px;height:7.5px;line-height:7.5px;font-size:7.5px;color:#a2a2a2;text-align:center;white-space:nowrap;-webkit-text-stroke:0.2px #a2a2a2;letter-spacing:0.7px;-webkit-text-stroke:0;">-50</div>
<div style="left:940px;top:703px;width:18px;height:38px;background:linear-gradient(to bottom,#9c9c9c 0%,#cacaca 3.4%,#cecece 3.5%,#cecece 14.5%,#c4c4c4 14.6%,#c4c4c4 17%,#8e8e8e 17.1%,#8e8e8e 21%,#a8a8a8 21.1%,#a8a8a8 22%,#8c8c8c 22.1%,#8c8c8c 29.7%,#a0a0a0 29.8%,#a0a0a0 36.5%,#a8a8a8 36.6%,#a8a8a8 39%,#d0d0d0 39.1%,#d0d0d0 45.7%,#ffffff 45.8%,#ffffff 50%,#c0c0c0 50.1%,#c0c0c0 51.2%,#cfcfcf 51.3%,#cfcfcf 58.4%,#bdbdbd 58.5%,#bdbdbd 60%,#cdcdcd 60.1%,#cdcdcd 66%,#bcbcbc 66.1%,#bcbcbc 67.6%,#e6e6e6 67.7%,#e6e6e6 75.5%,#c4c4c4 75.6%,#c4c4c4 77.1%,#dedede 77.2%,#dedede 80.7%,#b2b2b2 80.8%,#b2b2b2 95%,#888888 100%);border-radius:1.5px;"></div>
<div style="left:919.00px;top:737.93px;width:60px;height:12.5px;line-height:12.5px;font-size:12.5px;color:#fff;text-align:center;white-space:nowrap;-webkit-text-stroke:0.2px #fff;">Bus 1</div>
<div style="left:967px;top:464.00px;width:2px;height:7.00px;background:#6e1a1a"></div>
<div style="left:967px;top:474.22px;width:2px;height:7.00px;background:#73451a"></div>
<div style="left:967px;top:484.44px;width:2px;height:7.00px;background:#73451a"></div>
<div style="left:967px;top:494.66px;width:2px;height:7.00px;background:#73451a"></div>
<div style="left:967px;top:504.88px;width:2px;height:7.00px;background:#73451a"></div>
<div style="left:967px;top:515.10px;width:2px;height:7.00px;background:#73451a"></div>
<div style="left:967px;top:525.32px;width:2px;height:7.00px;background:#73451a"></div>
<div style="left:967px;top:535.54px;width:2px;height:7.00px;background:#73451a"></div>
<div style="left:967px;top:545.76px;width:2px;height:7.00px;background:#73451a"></div>
<div style="left:967px;top:555.98px;width:2px;height:7.00px;background:#73451a"></div>
<div style="left:967px;top:566.20px;width:2px;height:7.00px;background:#73451a"></div>
<div style="left:967px;top:576.42px;width:2px;height:7.00px;background:#73451a"></div>
<div style="left:967px;top:586.64px;width:2px;height:7.00px;background:#73451a"></div>
<div style="left:967px;top:596.86px;width:2px;height:7.00px;background:#73451a"></div>
<div style="left:967px;top:607.08px;width:2px;height:7.00px;background:#73451a"></div>
<div style="left:967px;top:617.30px;width:2px;height:7.00px;background:#283c14"></div>
<div style="left:967px;top:627.52px;width:2px;height:7.00px;background:#283c14"></div>
<div style="left:967px;top:637.74px;width:2px;height:7.00px;background:#283c14"></div>
<div style="left:967px;top:647.96px;width:2px;height:7.00px;background:#283c14"></div>
<div style="left:967px;top:658.18px;width:2px;height:7.00px;background:#283c14"></div>
<div style="left:967px;top:668.40px;width:2px;height:7.00px;background:#283c14"></div>
<div style="left:967px;top:678.62px;width:2px;height:7.00px;background:#283c14"></div>
<div style="left:967px;top:688.84px;width:2px;height:7.00px;background:#283c14"></div>
<div style="left:967px;top:699.06px;width:2px;height:7.00px;background:#283c14"></div>
<div style="left:967px;top:709.28px;width:2px;height:7.00px;background:#283c14"></div>
<div style="left:967px;top:719.50px;width:2px;height:7.00px;background:#283c14"></div>
<div style="left:967px;top:729.72px;width:2px;height:7.00px;background:#283c14"></div>
<div style="left:967px;top:739.94px;width:2px;height:7.00px;background:#283c14"></div>
<div style="left:973px;top:551px;width:1px;height:62px;background:#f6201a;"></div>
<div style="left:977px;top:365px;width:45px;height:387px;background:#2a2b30;"></div>
<div style="left:977px;top:365px;width:45px;height:45px;background:#dcdcdc;"></div>
<div style="left:968.00px;top:381.73px;width:65px;height:12.5px;line-height:12.5px;font-size:12.5px;color:#141414;text-align:center;white-space:nowrap;-webkit-text-stroke:0.2px #141414;">Bus 2</div>
<div style="left:977px;top:410px;width:45px;height:20px;background:#2a2b30;box-sizing:border-box;border:1px solid #0f97a7;"></div>
<div style="left:1000px;top:409px;width:1px;height:20px;background:#e8e8e8;"></div>
<div style="left:977px;top:430px;width:45px;height:34px;background:#5a1818;box-sizing:border-box;border:1px solid #55576a;"></div>
<div style="left:967.80px;top:440.17px;width:65px;height:13px;line-height:13px;font-size:13px;color:#ece8e8;text-align:center;white-space:nowrap;-webkit-text-stroke:0.2px #ece8e8;">MUTE</div>
<svg style="left:987px;top:465px;width:20px;height:10px" width="20" height="10"><rect x="1.20" y="4.10" width="3.45" height="1.2" fill="#fff"/><path d="M11.95 4.60 C13.15 2.10 13.20 1.60 14.70 1.60 C16.30 1.60 17.00 2.90 17.00 4.60 C17.00 6.30 16.30 7.60 14.70 7.60 C13.20 7.60 13.15 7.10 11.95 4.60 C10.75 2.10 10.70 1.60 9.20 1.60 C7.60 1.60 6.90 2.90 6.90 4.60 C6.90 6.30 7.60 7.60 9.20 7.60 C10.70 7.60 10.75 7.10 11.95 4.60 Z" fill="none" stroke="#fff" stroke-width="1.15"/></svg>
<div style="left:996px;top:494px;width:3px;height:211px;background:#000;"></div>
<div style="left:991px;top:493px;width:14px;height:1px;background:#b0b0b0;"></div>
<div style="left:970.00px;top:489.22px;width:30px;height:7.5px;line-height:7.5px;font-size:7.5px;color:#a2a2a2;text-align:center;white-space:nowrap;-webkit-text-stroke:0.2px #a2a2a2;letter-spacing:0.7px;-webkit-text-stroke:0;">10</div>
<div style="left:991px;top:521px;width:14px;height:1px;background:#b0b0b0;"></div>
<div style="left:970.00px;top:517.22px;width:30px;height:7.5px;line-height:7.5px;font-size:7.5px;color:#a2a2a2;text-align:center;white-space:nowrap;-webkit-text-stroke:0.2px #a2a2a2;letter-spacing:0.7px;-webkit-text-stroke:0;">5</div>
<div style="left:991px;top:550px;width:14px;height:1px;background:#f0f0f0;"></div>
<div style="left:970.00px;top:546.22px;width:30px;height:7.5px;line-height:7.5px;font-size:7.5px;color:#a2a2a2;text-align:center;white-space:nowrap;-webkit-text-stroke:0.2px #a2a2a2;letter-spacing:0.7px;-webkit-text-stroke:0;">0</div>
<div style="left:991px;top:579px;width:14px;height:1px;background:#b0b0b0;"></div>
<div style="left:970.00px;top:575.22px;width:30px;height:7.5px;line-height:7.5px;font-size:7.5px;color:#a2a2a2;text-align:center;white-space:nowrap;-webkit-text-stroke:0.2px #a2a2a2;letter-spacing:0.7px;-webkit-text-stroke:0;">-5</div>
<div style="left:991px;top:607px;width:14px;height:1px;background:#b0b0b0;"></div>
<div style="left:970.00px;top:603.22px;width:30px;height:7.5px;line-height:7.5px;font-size:7.5px;color:#a2a2a2;text-align:center;white-space:nowrap;-webkit-text-stroke:0.2px #a2a2a2;letter-spacing:0.7px;-webkit-text-stroke:0;">-10</div>
<div style="left:991px;top:636px;width:14px;height:1px;background:#b0b0b0;"></div>
<div style="left:970.00px;top:632.22px;width:30px;height:7.5px;line-height:7.5px;font-size:7.5px;color:#a2a2a2;text-align:center;white-space:nowrap;-webkit-text-stroke:0.2px #a2a2a2;letter-spacing:0.7px;-webkit-text-stroke:0;">-20</div>
<div style="left:991px;top:665px;width:14px;height:1px;background:#b0b0b0;"></div>
<div style="left:970.00px;top:661.22px;width:30px;height:7.5px;line-height:7.5px;font-size:7.5px;color:#a2a2a2;text-align:center;white-space:nowrap;-webkit-text-stroke:0.2px #a2a2a2;letter-spacing:0.7px;-webkit-text-stroke:0;">-30</div>
<div style="left:991px;top:693px;width:14px;height:1px;background:#b0b0b0;"></div>
<div style="left:970.00px;top:689.22px;width:30px;height:7.5px;line-height:7.5px;font-size:7.5px;color:#a2a2a2;text-align:center;white-space:nowrap;-webkit-text-stroke:0.2px #a2a2a2;letter-spacing:0.7px;-webkit-text-stroke:0;">-50</div>
<div style="left:988px;top:703px;width:18px;height:38px;background:linear-gradient(to bottom,#9c9c9c 0%,#cacaca 3.4%,#cecece 3.5%,#cecece 14.5%,#c4c4c4 14.6%,#c4c4c4 17%,#8e8e8e 17.1%,#8e8e8e 21%,#a8a8a8 21.1%,#a8a8a8 22%,#8c8c8c 22.1%,#8c8c8c 29.7%,#a0a0a0 29.8%,#a0a0a0 36.5%,#a8a8a8 36.6%,#a8a8a8 39%,#d0d0d0 39.1%,#d0d0d0 45.7%,#ffffff 45.8%,#ffffff 50%,#c0c0c0 50.1%,#c0c0c0 51.2%,#cfcfcf 51.3%,#cfcfcf 58.4%,#bdbdbd 58.5%,#bdbdbd 60%,#cdcdcd 60.1%,#cdcdcd 66%,#bcbcbc 66.1%,#bcbcbc 67.6%,#e6e6e6 67.7%,#e6e6e6 75.5%,#c4c4c4 75.6%,#c4c4c4 77.1%,#dedede 77.2%,#dedede 80.7%,#b2b2b2 80.8%,#b2b2b2 95%,#888888 100%);border-radius:1.5px;"></div>
<div style="left:967.00px;top:737.93px;width:60px;height:12.5px;line-height:12.5px;font-size:12.5px;color:#fff;text-align:center;white-space:nowrap;-webkit-text-stroke:0.2px #fff;">Bus 2</div>
<div style="left:1015px;top:464.00px;width:2px;height:7.00px;background:#6e1a1a"></div>
<div style="left:1015px;top:474.22px;width:2px;height:7.00px;background:#73451a"></div>
<div style="left:1015px;top:484.44px;width:2px;height:7.00px;background:#73451a"></div>
<div style="left:1015px;top:494.66px;width:2px;height:7.00px;background:#73451a"></div>
<div style="left:1015px;top:504.88px;width:2px;height:7.00px;background:#73451a"></div>
<div style="left:1015px;top:515.10px;width:2px;height:7.00px;background:#73451a"></div>
<div style="left:1015px;top:525.32px;width:2px;height:7.00px;background:#73451a"></div>
<div style="left:1015px;top:535.54px;width:2px;height:7.00px;background:#73451a"></div>
<div style="left:1015px;top:545.76px;width:2px;height:7.00px;background:#73451a"></div>
<div style="left:1015px;top:555.98px;width:2px;height:7.00px;background:#73451a"></div>
<div style="left:1015px;top:566.20px;width:2px;height:7.00px;background:#73451a"></div>
<div style="left:1015px;top:576.42px;width:2px;height:7.00px;background:#73451a"></div>
<div style="left:1015px;top:586.64px;width:2px;height:7.00px;background:#73451a"></div>
<div style="left:1015px;top:596.86px;width:2px;height:7.00px;background:#73451a"></div>
<div style="left:1015px;top:607.08px;width:2px;height:7.00px;background:#73451a"></div>
<div style="left:1015px;top:617.30px;width:2px;height:7.00px;background:#283c14"></div>
<div style="left:1015px;top:627.52px;width:2px;height:7.00px;background:#283c14"></div>
<div style="left:1015px;top:637.74px;width:2px;height:7.00px;background:#283c14"></div>
<div style="left:1015px;top:647.96px;width:2px;height:7.00px;background:#283c14"></div>
<div style="left:1015px;top:658.18px;width:2px;height:7.00px;background:#283c14"></div>
<div style="left:1015px;top:668.40px;width:2px;height:7.00px;background:#283c14"></div>
<div style="left:1015px;top:678.62px;width:2px;height:7.00px;background:#283c14"></div>
<div style="left:1015px;top:688.84px;width:2px;height:7.00px;background:#283c14"></div>
<div style="left:1015px;top:699.06px;width:2px;height:7.00px;background:#283c14"></div>
<div style="left:1015px;top:709.28px;width:2px;height:7.00px;background:#283c14"></div>
<div style="left:1015px;top:719.50px;width:2px;height:7.00px;background:#283c14"></div>
<div style="left:1015px;top:729.72px;width:2px;height:7.00px;background:#283c14"></div>
<div style="left:1015px;top:739.94px;width:2px;height:7.00px;background:#283c14"></div>
<div style="left:1021px;top:551px;width:1px;height:62px;background:#f6201a;"></div>
<div style="left:1025px;top:365px;width:45px;height:387px;background:#2a2b30;"></div>
<div style="left:1025px;top:365px;width:45px;height:45px;background:#dcdcdc;"></div>
<div style="left:1016.00px;top:381.73px;width:65px;height:12.5px;line-height:12.5px;font-size:12.5px;color:#141414;text-align:center;white-space:nowrap;-webkit-text-stroke:0.2px #141414;">Bus 3</div>
<div style="left:1025px;top:410px;width:45px;height:20px;background:#2a2b30;box-sizing:border-box;border:1px solid #0f97a7;"></div>
<div style="left:1048px;top:409px;width:1px;height:20px;background:#e8e8e8;"></div>
<div style="left:1025px;top:430px;width:45px;height:34px;background:#5a1818;box-sizing:border-box;border:1px solid #55576a;"></div>
<div style="left:1015.80px;top:440.17px;width:65px;height:13px;line-height:13px;font-size:13px;color:#ece8e8;text-align:center;white-space:nowrap;-webkit-text-stroke:0.2px #ece8e8;">MUTE</div>
<svg style="left:1035px;top:465px;width:20px;height:10px" width="20" height="10"><rect x="1.20" y="4.10" width="3.45" height="1.2" fill="#fff"/><path d="M11.95 4.60 C13.15 2.10 13.20 1.60 14.70 1.60 C16.30 1.60 17.00 2.90 17.00 4.60 C17.00 6.30 16.30 7.60 14.70 7.60 C13.20 7.60 13.15 7.10 11.95 4.60 C10.75 2.10 10.70 1.60 9.20 1.60 C7.60 1.60 6.90 2.90 6.90 4.60 C6.90 6.30 7.60 7.60 9.20 7.60 C10.70 7.60 10.75 7.10 11.95 4.60 Z" fill="none" stroke="#fff" stroke-width="1.15"/></svg>
<div style="left:1044px;top:494px;width:3px;height:211px;background:#000;"></div>
<div style="left:1039px;top:493px;width:14px;height:1px;background:#b0b0b0;"></div>
<div style="left:1018.00px;top:489.22px;width:30px;height:7.5px;line-height:7.5px;font-size:7.5px;color:#a2a2a2;text-align:center;white-space:nowrap;-webkit-text-stroke:0.2px #a2a2a2;letter-spacing:0.7px;-webkit-text-stroke:0;">10</div>
<div style="left:1039px;top:521px;width:14px;height:1px;background:#b0b0b0;"></div>
<div style="left:1018.00px;top:517.22px;width:30px;height:7.5px;line-height:7.5px;font-size:7.5px;color:#a2a2a2;text-align:center;white-space:nowrap;-webkit-text-stroke:0.2px #a2a2a2;letter-spacing:0.7px;-webkit-text-stroke:0;">5</div>
<div style="left:1039px;top:550px;width:14px;height:1px;background:#f0f0f0;"></div>
<div style="left:1018.00px;top:546.22px;width:30px;height:7.5px;line-height:7.5px;font-size:7.5px;color:#a2a2a2;text-align:center;white-space:nowrap;-webkit-text-stroke:0.2px #a2a2a2;letter-spacing:0.7px;-webkit-text-stroke:0;">0</div>
<div style="left:1039px;top:579px;width:14px;height:1px;background:#b0b0b0;"></div>
<div style="left:1018.00px;top:575.22px;width:30px;height:7.5px;line-height:7.5px;font-size:7.5px;color:#a2a2a2;text-align:center;white-space:nowrap;-webkit-text-stroke:0.2px #a2a2a2;letter-spacing:0.7px;-webkit-text-stroke:0;">-5</div>
<div style="left:1039px;top:607px;width:14px;height:1px;background:#b0b0b0;"></div>
<div style="left:1018.00px;top:603.22px;width:30px;height:7.5px;line-height:7.5px;font-size:7.5px;color:#a2a2a2;text-align:center;white-space:nowrap;-webkit-text-stroke:0.2px #a2a2a2;letter-spacing:0.7px;-webkit-text-stroke:0;">-10</div>
<div style="left:1039px;top:636px;width:14px;height:1px;background:#b0b0b0;"></div>
<div style="left:1018.00px;top:632.22px;width:30px;height:7.5px;line-height:7.5px;font-size:7.5px;color:#a2a2a2;text-align:center;white-space:nowrap;-webkit-text-stroke:0.2px #a2a2a2;letter-spacing:0.7px;-webkit-text-stroke:0;">-20</div>
<div style="left:1039px;top:665px;width:14px;height:1px;background:#b0b0b0;"></div>
<div style="left:1018.00px;top:661.22px;width:30px;height:7.5px;line-height:7.5px;font-size:7.5px;color:#a2a2a2;text-align:center;white-space:nowrap;-webkit-text-stroke:0.2px #a2a2a2;letter-spacing:0.7px;-webkit-text-stroke:0;">-30</div>
<div style="left:1039px;top:693px;width:14px;height:1px;background:#b0b0b0;"></div>
<div style="left:1018.00px;top:689.22px;width:30px;height:7.5px;line-height:7.5px;font-size:7.5px;color:#a2a2a2;text-align:center;white-space:nowrap;-webkit-text-stroke:0.2px #a2a2a2;letter-spacing:0.7px;-webkit-text-stroke:0;">-50</div>
<div style="left:1036px;top:703px;width:18px;height:38px;background:linear-gradient(to bottom,#9c9c9c 0%,#cacaca 3.4%,#cecece 3.5%,#cecece 14.5%,#c4c4c4 14.6%,#c4c4c4 17%,#8e8e8e 17.1%,#8e8e8e 21%,#a8a8a8 21.1%,#a8a8a8 22%,#8c8c8c 22.1%,#8c8c8c 29.7%,#a0a0a0 29.8%,#a0a0a0 36.5%,#a8a8a8 36.6%,#a8a8a8 39%,#d0d0d0 39.1%,#d0d0d0 45.7%,#ffffff 45.8%,#ffffff 50%,#c0c0c0 50.1%,#c0c0c0 51.2%,#cfcfcf 51.3%,#cfcfcf 58.4%,#bdbdbd 58.5%,#bdbdbd 60%,#cdcdcd 60.1%,#cdcdcd 66%,#bcbcbc 66.1%,#bcbcbc 67.6%,#e6e6e6 67.7%,#e6e6e6 75.5%,#c4c4c4 75.6%,#c4c4c4 77.1%,#dedede 77.2%,#dedede 80.7%,#b2b2b2 80.8%,#b2b2b2 95%,#888888 100%);border-radius:1.5px;"></div>
<div style="left:1015.00px;top:737.93px;width:60px;height:12.5px;line-height:12.5px;font-size:12.5px;color:#fff;text-align:center;white-space:nowrap;-webkit-text-stroke:0.2px #fff;">Bus 3</div>
<div style="left:1063px;top:464.00px;width:2px;height:7.00px;background:#6e1a1a"></div>
<div style="left:1063px;top:474.22px;width:2px;height:7.00px;background:#73451a"></div>
<div style="left:1063px;top:484.44px;width:2px;height:7.00px;background:#73451a"></div>
<div style="left:1063px;top:494.66px;width:2px;height:7.00px;background:#73451a"></div>
<div style="left:1063px;top:504.88px;width:2px;height:7.00px;background:#73451a"></div>
<div style="left:1063px;top:515.10px;width:2px;height:7.00px;background:#73451a"></div>
<div style="left:1063px;top:525.32px;width:2px;height:7.00px;background:#73451a"></div>
<div style="left:1063px;top:535.54px;width:2px;height:7.00px;background:#73451a"></div>
<div style="left:1063px;top:545.76px;width:2px;height:7.00px;background:#73451a"></div>
<div style="left:1063px;top:555.98px;width:2px;height:7.00px;background:#73451a"></div>
<div style="left:1063px;top:566.20px;width:2px;height:7.00px;background:#73451a"></div>
<div style="left:1063px;top:576.42px;width:2px;height:7.00px;background:#73451a"></div>
<div style="left:1063px;top:586.64px;width:2px;height:7.00px;background:#73451a"></div>
<div style="left:1063px;top:596.86px;width:2px;height:7.00px;background:#73451a"></div>
<div style="left:1063px;top:607.08px;width:2px;height:7.00px;background:#73451a"></div>
<div style="left:1063px;top:617.30px;width:2px;height:7.00px;background:#283c14"></div>
<div style="left:1063px;top:627.52px;width:2px;height:7.00px;background:#283c14"></div>
<div style="left:1063px;top:637.74px;width:2px;height:7.00px;background:#283c14"></div>
<div style="left:1063px;top:647.96px;width:2px;height:7.00px;background:#283c14"></div>
<div style="left:1063px;top:658.18px;width:2px;height:7.00px;background:#283c14"></div>
<div style="left:1063px;top:668.40px;width:2px;height:7.00px;background:#283c14"></div>
<div style="left:1063px;top:678.62px;width:2px;height:7.00px;background:#283c14"></div>
<div style="left:1063px;top:688.84px;width:2px;height:7.00px;background:#283c14"></div>
<div style="left:1063px;top:699.06px;width:2px;height:7.00px;background:#283c14"></div>
<div style="left:1063px;top:709.28px;width:2px;height:7.00px;background:#283c14"></div>
<div style="left:1063px;top:719.50px;width:2px;height:7.00px;background:#283c14"></div>
<div style="left:1063px;top:729.72px;width:2px;height:7.00px;background:#283c14"></div>
<div style="left:1063px;top:739.94px;width:2px;height:7.00px;background:#283c14"></div>
<div style="left:1069px;top:551px;width:1px;height:62px;background:#f6201a;"></div>
<div style="left:1073px;top:365px;width:45px;height:387px;background:#2a2b30;"></div>
<div style="left:1073px;top:365px;width:45px;height:45px;background:#dcdcdc;"></div>
<div style="left:1064.00px;top:381.73px;width:65px;height:12.5px;line-height:12.5px;font-size:12.5px;color:#141414;text-align:center;white-space:nowrap;-webkit-text-stroke:0.2px #141414;">Bus 4</div>
<div style="left:1073px;top:410px;width:45px;height:20px;background:#2a2b30;box-sizing:border-box;border:1px solid #0f97a7;"></div>
<div style="left:1096px;top:409px;width:1px;height:20px;background:#e8e8e8;"></div>
<div style="left:1073px;top:430px;width:45px;height:34px;background:#5a1818;box-sizing:border-box;border:1px solid #55576a;"></div>
<div style="left:1063.80px;top:440.17px;width:65px;height:13px;line-height:13px;font-size:13px;color:#ece8e8;text-align:center;white-space:nowrap;-webkit-text-stroke:0.2px #ece8e8;">MUTE</div>
<svg style="left:1083px;top:465px;width:20px;height:10px" width="20" height="10"><rect x="1.20" y="4.10" width="3.45" height="1.2" fill="#fff"/><path d="M11.95 4.60 C13.15 2.10 13.20 1.60 14.70 1.60 C16.30 1.60 17.00 2.90 17.00 4.60 C17.00 6.30 16.30 7.60 14.70 7.60 C13.20 7.60 13.15 7.10 11.95 4.60 C10.75 2.10 10.70 1.60 9.20 1.60 C7.60 1.60 6.90 2.90 6.90 4.60 C6.90 6.30 7.60 7.60 9.20 7.60 C10.70 7.60 10.75 7.10 11.95 4.60 Z" fill="none" stroke="#fff" stroke-width="1.15"/></svg>
<div style="left:1092px;top:494px;width:3px;height:211px;background:#000;"></div>
<div style="left:1087px;top:493px;width:14px;height:1px;background:#b0b0b0;"></div>
<div style="left:1066.00px;top:489.22px;width:30px;height:7.5px;line-height:7.5px;font-size:7.5px;color:#a2a2a2;text-align:center;white-space:nowrap;-webkit-text-stroke:0.2px #a2a2a2;letter-spacing:0.7px;-webkit-text-stroke:0;">10</div>
<div style="left:1087px;top:521px;width:14px;height:1px;background:#b0b0b0;"></div>
<div style="left:1066.00px;top:517.22px;width:30px;height:7.5px;line-height:7.5px;font-size:7.5px;color:#a2a2a2;text-align:center;white-space:nowrap;-webkit-text-stroke:0.2px #a2a2a2;letter-spacing:0.7px;-webkit-text-stroke:0;">5</div>
<div style="left:1087px;top:550px;width:14px;height:1px;background:#f0f0f0;"></div>
<div style="left:1066.00px;top:546.22px;width:30px;height:7.5px;line-height:7.5px;font-size:7.5px;color:#a2a2a2;text-align:center;white-space:nowrap;-webkit-text-stroke:0.2px #a2a2a2;letter-spacing:0.7px;-webkit-text-stroke:0;">0</div>
<div style="left:1087px;top:579px;width:14px;height:1px;background:#b0b0b0;"></div>
<div style="left:1066.00px;top:575.22px;width:30px;height:7.5px;line-height:7.5px;font-size:7.5px;color:#a2a2a2;text-align:center;white-space:nowrap;-webkit-text-stroke:0.2px #a2a2a2;letter-spacing:0.7px;-webkit-text-stroke:0;">-5</div>
<div style="left:1087px;top:607px;width:14px;height:1px;background:#b0b0b0;"></div>
<div style="left:1066.00px;top:603.22px;width:30px;height:7.5px;line-height:7.5px;font-size:7.5px;color:#a2a2a2;text-align:center;white-space:nowrap;-webkit-text-stroke:0.2px #a2a2a2;letter-spacing:0.7px;-webkit-text-stroke:0;">-10</div>
<div style="left:1087px;top:636px;width:14px;height:1px;background:#b0b0b0;"></div>
<div style="left:1066.00px;top:632.22px;width:30px;height:7.5px;line-height:7.5px;font-size:7.5px;color:#a2a2a2;text-align:center;white-space:nowrap;-webkit-text-stroke:0.2px #a2a2a2;letter-spacing:0.7px;-webkit-text-stroke:0;">-20</div>
<div style="left:1087px;top:665px;width:14px;height:1px;background:#b0b0b0;"></div>
<div style="left:1066.00px;top:661.22px;width:30px;height:7.5px;line-height:7.5px;font-size:7.5px;color:#a2a2a2;text-align:center;white-space:nowrap;-webkit-text-stroke:0.2px #a2a2a2;letter-spacing:0.7px;-webkit-text-stroke:0;">-30</div>
<div style="left:1087px;top:693px;width:14px;height:1px;background:#b0b0b0;"></div>
<div style="left:1066.00px;top:689.22px;width:30px;height:7.5px;line-height:7.5px;font-size:7.5px;color:#a2a2a2;text-align:center;white-space:nowrap;-webkit-text-stroke:0.2px #a2a2a2;letter-spacing:0.7px;-webkit-text-stroke:0;">-50</div>
<div style="left:1084px;top:703px;width:18px;height:38px;background:linear-gradient(to bottom,#9c9c9c 0%,#cacaca 3.4%,#cecece 3.5%,#cecece 14.5%,#c4c4c4 14.6%,#c4c4c4 17%,#8e8e8e 17.1%,#8e8e8e 21%,#a8a8a8 21.1%,#a8a8a8 22%,#8c8c8c 22.1%,#8c8c8c 29.7%,#a0a0a0 29.8%,#a0a0a0 36.5%,#a8a8a8 36.6%,#a8a8a8 39%,#d0d0d0 39.1%,#d0d0d0 45.7%,#ffffff 45.8%,#ffffff 50%,#c0c0c0 50.1%,#c0c0c0 51.2%,#cfcfcf 51.3%,#cfcfcf 58.4%,#bdbdbd 58.5%,#bdbdbd 60%,#cdcdcd 60.1%,#cdcdcd 66%,#bcbcbc 66.1%,#bcbcbc 67.6%,#e6e6e6 67.7%,#e6e6e6 75.5%,#c4c4c4 75.6%,#c4c4c4 77.1%,#dedede 77.2%,#dedede 80.7%,#b2b2b2 80.8%,#b2b2b2 95%,#888888 100%);border-radius:1.5px;"></div>
<div style="left:1063.00px;top:737.93px;width:60px;height:12.5px;line-height:12.5px;font-size:12.5px;color:#fff;text-align:center;white-space:nowrap;-webkit-text-stroke:0.2px #fff;">Bus 4</div>
<div style="left:1111px;top:464.00px;width:2px;height:7.00px;background:#6e1a1a"></div>
<div style="left:1111px;top:474.22px;width:2px;height:7.00px;background:#73451a"></div>
<div style="left:1111px;top:484.44px;width:2px;height:7.00px;background:#73451a"></div>
<div style="left:1111px;top:494.66px;width:2px;height:7.00px;background:#73451a"></div>
<div style="left:1111px;top:504.88px;width:2px;height:7.00px;background:#73451a"></div>
<div style="left:1111px;top:515.10px;width:2px;height:7.00px;background:#73451a"></div>
<div style="left:1111px;top:525.32px;width:2px;height:7.00px;background:#73451a"></div>
<div style="left:1111px;top:535.54px;width:2px;height:7.00px;background:#73451a"></div>
<div style="left:1111px;top:545.76px;width:2px;height:7.00px;background:#73451a"></div>
<div style="left:1111px;top:555.98px;width:2px;height:7.00px;background:#73451a"></div>
<div style="left:1111px;top:566.20px;width:2px;height:7.00px;background:#73451a"></div>
<div style="left:1111px;top:576.42px;width:2px;height:7.00px;background:#73451a"></div>
<div style="left:1111px;top:586.64px;width:2px;height:7.00px;background:#73451a"></div>
<div style="left:1111px;top:596.86px;width:2px;height:7.00px;background:#73451a"></div>
<div style="left:1111px;top:607.08px;width:2px;height:7.00px;background:#73451a"></div>
<div style="left:1111px;top:617.30px;width:2px;height:7.00px;background:#283c14"></div>
<div style="left:1111px;top:627.52px;width:2px;height:7.00px;background:#283c14"></div>
<div style="left:1111px;top:637.74px;width:2px;height:7.00px;background:#283c14"></div>
<div style="left:1111px;top:647.96px;width:2px;height:7.00px;background:#283c14"></div>
<div style="left:1111px;top:658.18px;width:2px;height:7.00px;background:#283c14"></div>
<div style="left:1111px;top:668.40px;width:2px;height:7.00px;background:#283c14"></div>
<div style="left:1111px;top:678.62px;width:2px;height:7.00px;background:#283c14"></div>
<div style="left:1111px;top:688.84px;width:2px;height:7.00px;background:#283c14"></div>
<div style="left:1111px;top:699.06px;width:2px;height:7.00px;background:#283c14"></div>
<div style="left:1111px;top:709.28px;width:2px;height:7.00px;background:#283c14"></div>
<div style="left:1111px;top:719.50px;width:2px;height:7.00px;background:#283c14"></div>
<div style="left:1111px;top:729.72px;width:2px;height:7.00px;background:#283c14"></div>
<div style="left:1111px;top:739.94px;width:2px;height:7.00px;background:#283c14"></div>
<div style="left:1117px;top:551px;width:1px;height:62px;background:#f6201a;"></div>
<div style="left:1121px;top:365px;width:45px;height:387px;background:#2a2b30;"></div>
<div style="left:1121px;top:365px;width:45px;height:45px;background:#dcdcdc;"></div>
<div style="left:1112.00px;top:381.73px;width:65px;height:12.5px;line-height:12.5px;font-size:12.5px;color:#141414;text-align:center;white-space:nowrap;-webkit-text-stroke:0.2px #141414;">Bus 5</div>
<div style="left:1121px;top:410px;width:45px;height:20px;background:#2a2b30;box-sizing:border-box;border:1px solid #0f97a7;"></div>
<div style="left:1144px;top:409px;width:1px;height:20px;background:#e8e8e8;"></div>
<div style="left:1121px;top:430px;width:45px;height:34px;background:#5a1818;box-sizing:border-box;border:1px solid #55576a;"></div>
<div style="left:1111.80px;top:440.17px;width:65px;height:13px;line-height:13px;font-size:13px;color:#ece8e8;text-align:center;white-space:nowrap;-webkit-text-stroke:0.2px #ece8e8;">MUTE</div>
<svg style="left:1131px;top:465px;width:20px;height:10px" width="20" height="10"><rect x="1.20" y="4.10" width="3.45" height="1.2" fill="#fff"/><path d="M11.95 4.60 C13.15 2.10 13.20 1.60 14.70 1.60 C16.30 1.60 17.00 2.90 17.00 4.60 C17.00 6.30 16.30 7.60 14.70 7.60 C13.20 7.60 13.15 7.10 11.95 4.60 C10.75 2.10 10.70 1.60 9.20 1.60 C7.60 1.60 6.90 2.90 6.90 4.60 C6.90 6.30 7.60 7.60 9.20 7.60 C10.70 7.60 10.75 7.10 11.95 4.60 Z" fill="none" stroke="#fff" stroke-width="1.15"/></svg>
<div style="left:1140px;top:494px;width:3px;height:211px;background:#000;"></div>
<div style="left:1135px;top:493px;width:14px;height:1px;background:#b0b0b0;"></div>
<div style="left:1114.00px;top:489.22px;width:30px;height:7.5px;line-height:7.5px;font-size:7.5px;color:#a2a2a2;text-align:center;white-space:nowrap;-webkit-text-stroke:0.2px #a2a2a2;letter-spacing:0.7px;-webkit-text-stroke:0;">10</div>
<div style="left:1135px;top:521px;width:14px;height:1px;background:#b0b0b0;"></div>
<div style="left:1114.00px;top:517.22px;width:30px;height:7.5px;line-height:7.5px;font-size:7.5px;color:#a2a2a2;text-align:center;white-space:nowrap;-webkit-text-stroke:0.2px #a2a2a2;letter-spacing:0.7px;-webkit-text-stroke:0;">5</div>
<div style="left:1135px;top:550px;width:14px;height:1px;background:#f0f0f0;"></div>
<div style="left:1114.00px;top:546.22px;width:30px;height:7.5px;line-height:7.5px;font-size:7.5px;color:#a2a2a2;text-align:center;white-space:nowrap;-webkit-text-stroke:0.2px #a2a2a2;letter-spacing:0.7px;-webkit-text-stroke:0;">0</div>
<div style="left:1135px;top:579px;width:14px;height:1px;background:#b0b0b0;"></div>
<div style="left:1114.00px;top:575.22px;width:30px;height:7.5px;line-height:7.5px;font-size:7.5px;color:#a2a2a2;text-align:center;white-space:nowrap;-webkit-text-stroke:0.2px #a2a2a2;letter-spacing:0.7px;-webkit-text-stroke:0;">-5</div>
<div style="left:1135px;top:607px;width:14px;height:1px;background:#b0b0b0;"></div>
<div style="left:1114.00px;top:603.22px;width:30px;height:7.5px;line-height:7.5px;font-size:7.5px;color:#a2a2a2;text-align:center;white-space:nowrap;-webkit-text-stroke:0.2px #a2a2a2;letter-spacing:0.7px;-webkit-text-stroke:0;">-10</div>
<div style="left:1135px;top:636px;width:14px;height:1px;background:#b0b0b0;"></div>
<div style="left:1114.00px;top:632.22px;width:30px;height:7.5px;line-height:7.5px;font-size:7.5px;color:#a2a2a2;text-align:center;white-space:nowrap;-webkit-text-stroke:0.2px #a2a2a2;letter-spacing:0.7px;-webkit-text-stroke:0;">-20</div>
<div style="left:1135px;top:665px;width:14px;height:1px;background:#b0b0b0;"></div>
<div style="left:1114.00px;top:661.22px;width:30px;height:7.5px;line-height:7.5px;font-size:7.5px;color:#a2a2a2;text-align:center;white-space:nowrap;-webkit-text-stroke:0.2px #a2a2a2;letter-spacing:0.7px;-webkit-text-stroke:0;">-30</div>
<div style="left:1135px;top:693px;width:14px;height:1px;background:#b0b0b0;"></div>
<div style="left:1114.00px;top:689.22px;width:30px;height:7.5px;line-height:7.5px;font-size:7.5px;color:#a2a2a2;text-align:center;white-space:nowrap;-webkit-text-stroke:0.2px #a2a2a2;letter-spacing:0.7px;-webkit-text-stroke:0;">-50</div>
<div style="left:1132px;top:703px;width:18px;height:38px;background:linear-gradient(to bottom,#9c9c9c 0%,#cacaca 3.4%,#cecece 3.5%,#cecece 14.5%,#c4c4c4 14.6%,#c4c4c4 17%,#8e8e8e 17.1%,#8e8e8e 21%,#a8a8a8 21.1%,#a8a8a8 22%,#8c8c8c 22.1%,#8c8c8c 29.7%,#a0a0a0 29.8%,#a0a0a0 36.5%,#a8a8a8 36.6%,#a8a8a8 39%,#d0d0d0 39.1%,#d0d0d0 45.7%,#ffffff 45.8%,#ffffff 50%,#c0c0c0 50.1%,#c0c0c0 51.2%,#cfcfcf 51.3%,#cfcfcf 58.4%,#bdbdbd 58.5%,#bdbdbd 60%,#cdcdcd 60.1%,#cdcdcd 66%,#bcbcbc 66.1%,#bcbcbc 67.6%,#e6e6e6 67.7%,#e6e6e6 75.5%,#c4c4c4 75.6%,#c4c4c4 77.1%,#dedede 77.2%,#dedede 80.7%,#b2b2b2 80.8%,#b2b2b2 95%,#888888 100%);border-radius:1.5px;"></div>
<div style="left:1111.00px;top:737.93px;width:60px;height:12.5px;line-height:12.5px;font-size:12.5px;color:#fff;text-align:center;white-space:nowrap;-webkit-text-stroke:0.2px #fff;">Bus 5</div>
<div style="left:1159px;top:464.00px;width:2px;height:7.00px;background:#6e1a1a"></div>
<div style="left:1159px;top:474.22px;width:2px;height:7.00px;background:#73451a"></div>
<div style="left:1159px;top:484.44px;width:2px;height:7.00px;background:#73451a"></div>
<div style="left:1159px;top:494.66px;width:2px;height:7.00px;background:#73451a"></div>
<div style="left:1159px;top:504.88px;width:2px;height:7.00px;background:#73451a"></div>
<div style="left:1159px;top:515.10px;width:2px;height:7.00px;background:#73451a"></div>
<div style="left:1159px;top:525.32px;width:2px;height:7.00px;background:#73451a"></div>
<div style="left:1159px;top:535.54px;width:2px;height:7.00px;background:#73451a"></div>
<div style="left:1159px;top:545.76px;width:2px;height:7.00px;background:#73451a"></div>
<div style="left:1159px;top:555.98px;width:2px;height:7.00px;background:#73451a"></div>
<div style="left:1159px;top:566.20px;width:2px;height:7.00px;background:#73451a"></div>
<div style="left:1159px;top:576.42px;width:2px;height:7.00px;background:#73451a"></div>
<div style="left:1159px;top:586.64px;width:2px;height:7.00px;background:#73451a"></div>
<div style="left:1159px;top:596.86px;width:2px;height:7.00px;background:#73451a"></div>
<div style="left:1159px;top:607.08px;width:2px;height:7.00px;background:#73451a"></div>
<div style="left:1159px;top:617.30px;width:2px;height:7.00px;background:#283c14"></div>
<div style="left:1159px;top:627.52px;width:2px;height:7.00px;background:#283c14"></div>
<div style="left:1159px;top:637.74px;width:2px;height:7.00px;background:#283c14"></div>
<div style="left:1159px;top:647.96px;width:2px;height:7.00px;background:#283c14"></div>
<div style="left:1159px;top:658.18px;width:2px;height:7.00px;background:#283c14"></div>
<div style="left:1159px;top:668.40px;width:2px;height:7.00px;background:#283c14"></div>
<div style="left:1159px;top:678.62px;width:2px;height:7.00px;background:#283c14"></div>
<div style="left:1159px;top:688.84px;width:2px;height:7.00px;background:#283c14"></div>
<div style="left:1159px;top:699.06px;width:2px;height:7.00px;background:#283c14"></div>
<div style="left:1159px;top:709.28px;width:2px;height:7.00px;background:#283c14"></div>
<div style="left:1159px;top:719.50px;width:2px;height:7.00px;background:#283c14"></div>
<div style="left:1159px;top:729.72px;width:2px;height:7.00px;background:#283c14"></div>
<div style="left:1159px;top:739.94px;width:2px;height:7.00px;background:#283c14"></div>
<div style="left:1165px;top:551px;width:1px;height:62px;background:#f6201a;"></div>
<div style="left:1169px;top:365px;width:45px;height:387px;background:#2a2b30;"></div>
<div style="left:1169px;top:365px;width:45px;height:45px;background:#dcdcdc;"></div>
<div style="left:1160.00px;top:381.73px;width:65px;height:12.5px;line-height:12.5px;font-size:12.5px;color:#141414;text-align:center;white-space:nowrap;-webkit-text-stroke:0.2px #141414;">Bus 6</div>
<div style="left:1169px;top:410px;width:45px;height:20px;background:#2a2b30;box-sizing:border-box;border:1px solid #0f97a7;"></div>
<div style="left:1192px;top:409px;width:1px;height:20px;background:#e8e8e8;"></div>
<div style="left:1169px;top:430px;width:45px;height:34px;background:#5a1818;box-sizing:border-box;border:1px solid #55576a;"></div>
<div style="left:1159.80px;top:440.17px;width:65px;height:13px;line-height:13px;font-size:13px;color:#ece8e8;text-align:center;white-space:nowrap;-webkit-text-stroke:0.2px #ece8e8;">MUTE</div>
<svg style="left:1179px;top:465px;width:20px;height:10px" width="20" height="10"><rect x="1.20" y="4.10" width="3.45" height="1.2" fill="#fff"/><path d="M11.95 4.60 C13.15 2.10 13.20 1.60 14.70 1.60 C16.30 1.60 17.00 2.90 17.00 4.60 C17.00 6.30 16.30 7.60 14.70 7.60 C13.20 7.60 13.15 7.10 11.95 4.60 C10.75 2.10 10.70 1.60 9.20 1.60 C7.60 1.60 6.90 2.90 6.90 4.60 C6.90 6.30 7.60 7.60 9.20 7.60 C10.70 7.60 10.75 7.10 11.95 4.60 Z" fill="none" stroke="#fff" stroke-width="1.15"/></svg>
<div style="left:1188px;top:494px;width:3px;height:211px;background:#000;"></div>
<div style="left:1183px;top:493px;width:14px;height:1px;background:#b0b0b0;"></div>
<div style="left:1162.00px;top:489.22px;width:30px;height:7.5px;line-height:7.5px;font-size:7.5px;color:#a2a2a2;text-align:center;white-space:nowrap;-webkit-text-stroke:0.2px #a2a2a2;letter-spacing:0.7px;-webkit-text-stroke:0;">10</div>
<div style="left:1183px;top:521px;width:14px;height:1px;background:#b0b0b0;"></div>
<div style="left:1162.00px;top:517.22px;width:30px;height:7.5px;line-height:7.5px;font-size:7.5px;color:#a2a2a2;text-align:center;white-space:nowrap;-webkit-text-stroke:0.2px #a2a2a2;letter-spacing:0.7px;-webkit-text-stroke:0;">5</div>
<div style="left:1183px;top:550px;width:14px;height:1px;background:#f0f0f0;"></div>
<div style="left:1162.00px;top:546.22px;width:30px;height:7.5px;line-height:7.5px;font-size:7.5px;color:#a2a2a2;text-align:center;white-space:nowrap;-webkit-text-stroke:0.2px #a2a2a2;letter-spacing:0.7px;-webkit-text-stroke:0;">0</div>
<div style="left:1183px;top:579px;width:14px;height:1px;background:#b0b0b0;"></div>
<div style="left:1162.00px;top:575.22px;width:30px;height:7.5px;line-height:7.5px;font-size:7.5px;color:#a2a2a2;text-align:center;white-space:nowrap;-webkit-text-stroke:0.2px #a2a2a2;letter-spacing:0.7px;-webkit-text-stroke:0;">-5</div>
<div style="left:1183px;top:607px;width:14px;height:1px;background:#b0b0b0;"></div>
<div style="left:1162.00px;top:603.22px;width:30px;height:7.5px;line-height:7.5px;font-size:7.5px;color:#a2a2a2;text-align:center;white-space:nowrap;-webkit-text-stroke:0.2px #a2a2a2;letter-spacing:0.7px;-webkit-text-stroke:0;">-10</div>
<div style="left:1183px;top:636px;width:14px;height:1px;background:#b0b0b0;"></div>
<div style="left:1162.00px;top:632.22px;width:30px;height:7.5px;line-height:7.5px;font-size:7.5px;color:#a2a2a2;text-align:center;white-space:nowrap;-webkit-text-stroke:0.2px #a2a2a2;letter-spacing:0.7px;-webkit-text-stroke:0;">-20</div>
<div style="left:1183px;top:665px;width:14px;height:1px;background:#b0b0b0;"></div>
<div style="left:1162.00px;top:661.22px;width:30px;height:7.5px;line-height:7.5px;font-size:7.5px;color:#a2a2a2;text-align:center;white-space:nowrap;-webkit-text-stroke:0.2px #a2a2a2;letter-spacing:0.7px;-webkit-text-stroke:0;">-30</div>
<div style="left:1183px;top:693px;width:14px;height:1px;background:#b0b0b0;"></div>
<div style="left:1162.00px;top:689.22px;width:30px;height:7.5px;line-height:7.5px;font-size:7.5px;color:#a2a2a2;text-align:center;white-space:nowrap;-webkit-text-stroke:0.2px #a2a2a2;letter-spacing:0.7px;-webkit-text-stroke:0;">-50</div>
<div style="left:1180px;top:703px;width:18px;height:38px;background:linear-gradient(to bottom,#9c9c9c 0%,#cacaca 3.4%,#cecece 3.5%,#cecece 14.5%,#c4c4c4 14.6%,#c4c4c4 17%,#8e8e8e 17.1%,#8e8e8e 21%,#a8a8a8 21.1%,#a8a8a8 22%,#8c8c8c 22.1%,#8c8c8c 29.7%,#a0a0a0 29.8%,#a0a0a0 36.5%,#a8a8a8 36.6%,#a8a8a8 39%,#d0d0d0 39.1%,#d0d0d0 45.7%,#ffffff 45.8%,#ffffff 50%,#c0c0c0 50.1%,#c0c0c0 51.2%,#cfcfcf 51.3%,#cfcfcf 58.4%,#bdbdbd 58.5%,#bdbdbd 60%,#cdcdcd 60.1%,#cdcdcd 66%,#bcbcbc 66.1%,#bcbcbc 67.6%,#e6e6e6 67.7%,#e6e6e6 75.5%,#c4c4c4 75.6%,#c4c4c4 77.1%,#dedede 77.2%,#dedede 80.7%,#b2b2b2 80.8%,#b2b2b2 95%,#888888 100%);border-radius:1.5px;"></div>
<div style="left:1159.00px;top:737.93px;width:60px;height:12.5px;line-height:12.5px;font-size:12.5px;color:#fff;text-align:center;white-space:nowrap;-webkit-text-stroke:0.2px #fff;">Bus 6</div>
<div style="left:1207px;top:464.00px;width:2px;height:7.00px;background:#6e1a1a"></div>
<div style="left:1207px;top:474.22px;width:2px;height:7.00px;background:#73451a"></div>
<div style="left:1207px;top:484.44px;width:2px;height:7.00px;background:#73451a"></div>
<div style="left:1207px;top:494.66px;width:2px;height:7.00px;background:#73451a"></div>
<div style="left:1207px;top:504.88px;width:2px;height:7.00px;background:#73451a"></div>
<div style="left:1207px;top:515.10px;width:2px;height:7.00px;background:#73451a"></div>
<div style="left:1207px;top:525.32px;width:2px;height:7.00px;background:#73451a"></div>
<div style="left:1207px;top:535.54px;width:2px;height:7.00px;background:#73451a"></div>
<div style="left:1207px;top:545.76px;width:2px;height:7.00px;background:#73451a"></div>
<div style="left:1207px;top:555.98px;width:2px;height:7.00px;background:#73451a"></div>
<div style="left:1207px;top:566.20px;width:2px;height:7.00px;background:#73451a"></div>
<div style="left:1207px;top:576.42px;width:2px;height:7.00px;background:#73451a"></div>
<div style="left:1207px;top:586.64px;width:2px;height:7.00px;background:#73451a"></div>
<div style="left:1207px;top:596.86px;width:2px;height:7.00px;background:#73451a"></div>
<div style="left:1207px;top:607.08px;width:2px;height:7.00px;background:#73451a"></div>
<div style="left:1207px;top:617.30px;width:2px;height:7.00px;background:#283c14"></div>
<div style="left:1207px;top:627.52px;width:2px;height:7.00px;background:#283c14"></div>
<div style="left:1207px;top:637.74px;width:2px;height:7.00px;background:#283c14"></div>
<div style="left:1207px;top:647.96px;width:2px;height:7.00px;background:#283c14"></div>
<div style="left:1207px;top:658.18px;width:2px;height:7.00px;background:#283c14"></div>
<div style="left:1207px;top:668.40px;width:2px;height:7.00px;background:#283c14"></div>
<div style="left:1207px;top:678.62px;width:2px;height:7.00px;background:#283c14"></div>
<div style="left:1207px;top:688.84px;width:2px;height:7.00px;background:#283c14"></div>
<div style="left:1207px;top:699.06px;width:2px;height:7.00px;background:#283c14"></div>
<div style="left:1207px;top:709.28px;width:2px;height:7.00px;background:#283c14"></div>
<div style="left:1207px;top:719.50px;width:2px;height:7.00px;background:#283c14"></div>
<div style="left:1207px;top:729.72px;width:2px;height:7.00px;background:#283c14"></div>
<div style="left:1207px;top:739.94px;width:2px;height:7.00px;background:#283c14"></div>
<div style="left:1213px;top:551px;width:1px;height:62px;background:#f6201a;"></div>
<div style="left:1121px;top:48px;width:93px;height:49px;background:#734c06;box-sizing:border-box;border:1px solid #55576a;"></div>
<div style="left:1121.50px;top:59.12px;width:93px;height:12.6px;line-height:12.6px;font-size:12.6px;color:#ece8e8;text-align:center;white-space:nowrap;-webkit-text-stroke:0.2px #ece8e8;">BUS 1</div>
<div style="left:1121.50px;top:72.77px;width:93px;height:13px;line-height:13px;font-size:13px;color:#ece8e8;text-align:center;white-space:nowrap;-webkit-text-stroke:0.2px #ece8e8;">Off</div>
<div style="left:1121px;top:100px;width:93px;height:50px;background:#734c06;box-sizing:border-box;border:1px solid #55576a;"></div>
<div style="left:1121.50px;top:111.87px;width:93px;height:12.6px;line-height:12.6px;font-size:12.6px;color:#ece8e8;text-align:center;white-space:nowrap;-webkit-text-stroke:0.2px #ece8e8;">BUS 2</div>
<div style="left:1121.50px;top:125.52px;width:93px;height:13px;line-height:13px;font-size:13px;color:#ece8e8;text-align:center;white-space:nowrap;-webkit-text-stroke:0.2px #ece8e8;">Off</div>
<div style="left:1121px;top:153px;width:93px;height:50px;background:#734c06;box-sizing:border-box;border:1px solid #55576a;"></div>
<div style="left:1121.50px;top:164.62px;width:93px;height:12.6px;line-height:12.6px;font-size:12.6px;color:#ece8e8;text-align:center;white-space:nowrap;-webkit-text-stroke:0.2px #ece8e8;">BUS 3</div>
<div style="left:1121.50px;top:178.27px;width:93px;height:13px;line-height:13px;font-size:13px;color:#ece8e8;text-align:center;white-space:nowrap;-webkit-text-stroke:0.2px #ece8e8;">Off</div>
<div style="left:1121px;top:206px;width:93px;height:50px;background:#734c06;box-sizing:border-box;border:1px solid #55576a;"></div>
<div style="left:1121.50px;top:217.37px;width:93px;height:12.6px;line-height:12.6px;font-size:12.6px;color:#ece8e8;text-align:center;white-space:nowrap;-webkit-text-stroke:0.2px #ece8e8;">BUS 4</div>
<div style="left:1121.50px;top:231.02px;width:93px;height:13px;line-height:13px;font-size:13px;color:#ece8e8;text-align:center;white-space:nowrap;-webkit-text-stroke:0.2px #ece8e8;">Off</div>
<div style="left:1121px;top:259px;width:93px;height:49px;background:#5a1818;box-sizing:border-box;border:1px solid #55576a;"></div>
<div style="left:1121.50px;top:270.12px;width:93px;height:12.6px;line-height:12.6px;font-size:12.6px;color:#ece8e8;text-align:center;white-space:nowrap;-webkit-text-stroke:0.2px #ece8e8;">BUS 5</div>
<div style="left:1121.50px;top:283.77px;width:93px;height:13px;line-height:13px;font-size:13px;color:#ece8e8;text-align:center;white-space:nowrap;-webkit-text-stroke:0.2px #ece8e8;">Off</div>
<div style="left:1121px;top:312px;width:93px;height:50px;background:#5a1818;box-sizing:border-box;border:1px solid #55576a;"></div>
<div style="left:1121.50px;top:322.87px;width:93px;height:12.6px;line-height:12.6px;font-size:12.6px;color:#ece8e8;text-align:center;white-space:nowrap;-webkit-text-stroke:0.2px #ece8e8;">BUS 6</div>
<div style="left:1121.50px;top:336.52px;width:93px;height:13px;line-height:13px;font-size:13px;color:#ece8e8;text-align:center;white-space:nowrap;-webkit-text-stroke:0.2px #ece8e8;">Off</div>
<div style="left:1217px;top:48px;width:61px;height:49px;background:#1c5a10;box-sizing:border-box;border:1px solid #55576a;"></div>
<div style="left:1217.50px;top:59.12px;width:61px;height:12.6px;line-height:12.6px;font-size:12.6px;color:#ece8e8;text-align:center;white-space:nowrap;-webkit-text-stroke:0.2px #ece8e8;">FX 1</div>
<div style="left:1217.50px;top:72.77px;width:61px;height:13px;line-height:13px;font-size:13px;color:#ece8e8;text-align:center;white-space:nowrap;-webkit-text-stroke:0.2px #ece8e8;">Off</div>
<div style="left:1217px;top:100px;width:61px;height:50px;background:#1c5a10;box-sizing:border-box;border:1px solid #55576a;"></div>
<div style="left:1217.50px;top:111.87px;width:61px;height:12.6px;line-height:12.6px;font-size:12.6px;color:#ece8e8;text-align:center;white-space:nowrap;-webkit-text-stroke:0.2px #ece8e8;">FX 2</div>
<div style="left:1217.50px;top:125.52px;width:61px;height:13px;line-height:13px;font-size:13px;color:#ece8e8;text-align:center;white-space:nowrap;-webkit-text-stroke:0.2px #ece8e8;">Off</div>
<div style="left:1217px;top:153px;width:61px;height:50px;background:#1c5a10;box-sizing:border-box;border:1px solid #55576a;"></div>
<div style="left:1217.50px;top:164.62px;width:61px;height:12.6px;line-height:12.6px;font-size:12.6px;color:#ece8e8;text-align:center;white-space:nowrap;-webkit-text-stroke:0.2px #ece8e8;">FX 3</div>
<div style="left:1217.50px;top:178.27px;width:61px;height:13px;line-height:13px;font-size:13px;color:#ece8e8;text-align:center;white-space:nowrap;-webkit-text-stroke:0.2px #ece8e8;">Off</div>
<div style="left:1217px;top:206px;width:61px;height:50px;background:#1c5a10;box-sizing:border-box;border:1px solid #55576a;"></div>
<div style="left:1217.50px;top:217.37px;width:61px;height:12.6px;line-height:12.6px;font-size:12.6px;color:#ece8e8;text-align:center;white-space:nowrap;-webkit-text-stroke:0.2px #ece8e8;">FX 4</div>
<div style="left:1217.50px;top:231.02px;width:61px;height:13px;line-height:13px;font-size:13px;color:#ece8e8;text-align:center;white-space:nowrap;-webkit-text-stroke:0.2px #ece8e8;">Off</div>
<div style="left:1217px;top:259px;width:61px;height:49px;background:#167a6c;box-sizing:border-box;border:1px solid #55576a;"></div>
<div style="left:1217.50px;top:269.67px;width:61px;height:13px;line-height:13px;font-size:13px;color:#111;text-align:center;white-space:nowrap;-webkit-text-stroke:0.2px #111;">Channel</div>
<div style="left:1217.50px;top:284.97px;width:61px;height:13px;line-height:13px;font-size:13px;color:#111;text-align:center;white-space:nowrap;-webkit-text-stroke:0.2px #111;">View</div>
<div style="left:1217px;top:313px;width:63px;height:439px;background:#2a2b30;"></div>
<div style="left:1217px;top:313px;width:61px;height:44px;background:#dcdcdc;"></div>
<div style="left:1208.00px;top:328.17px;width:81px;height:13px;line-height:13px;font-size:13px;color:#141414;text-align:center;white-space:nowrap;-webkit-text-stroke:0.2px #141414;">LR</div>
<div style="left:1217px;top:357px;width:61px;height:20px;background:#2a2b30;box-sizing:border-box;border:1px solid #0f97a7;"></div>
<div style="left:1248px;top:356px;width:1px;height:20px;background:#e8e8e8;"></div>
<div style="left:1217px;top:377px;width:61px;height:33px;background:#5a1818;box-sizing:border-box;border:1px solid #55576a;"></div>
<div style="left:1207.80px;top:387.67px;width:81px;height:13px;line-height:13px;font-size:13px;color:#ece8e8;text-align:center;white-space:nowrap;-webkit-text-stroke:0.2px #ece8e8;">MUTE</div>
<svg style="left:1235px;top:412px;width:20px;height:10px" width="20" height="10"><rect x="1.00" y="4.60" width="3.45" height="1.2" fill="#fff"/><path d="M11.75 5.10 C12.95 2.60 13.00 2.10 14.50 2.10 C16.10 2.10 16.80 3.40 16.80 5.10 C16.80 6.80 16.10 8.10 14.50 8.10 C13.00 8.10 12.95 7.60 11.75 5.10 C10.55 2.60 10.50 2.10 9.00 2.10 C7.40 2.10 6.70 3.40 6.70 5.10 C6.70 6.80 7.40 8.10 9.00 8.10 C10.50 8.10 10.55 7.60 11.75 5.10 Z" fill="none" stroke="#fff" stroke-width="1.15"/></svg>
<div style="left:1243px;top:450px;width:5px;height:238px;background:#000;"></div>
<div style="left:1233px;top:449px;width:26px;height:1px;background:#b0b0b0;"></div>
<div style="left:1210.50px;top:445.22px;width:30px;height:7.5px;line-height:7.5px;font-size:7.5px;color:#a2a2a2;text-align:center;white-space:nowrap;-webkit-text-stroke:0.2px #a2a2a2;letter-spacing:0.7px;-webkit-text-stroke:0;">10</div>
<div style="left:1233px;top:482px;width:26px;height:1px;background:#b0b0b0;"></div>
<div style="left:1210.50px;top:478.22px;width:30px;height:7.5px;line-height:7.5px;font-size:7.5px;color:#a2a2a2;text-align:center;white-space:nowrap;-webkit-text-stroke:0.2px #a2a2a2;letter-spacing:0.7px;-webkit-text-stroke:0;">5</div>
<div style="left:1233px;top:515px;width:26px;height:1px;background:#f0f0f0;"></div>
<div style="left:1210.50px;top:511.22px;width:30px;height:7.5px;line-height:7.5px;font-size:7.5px;color:#a2a2a2;text-align:center;white-space:nowrap;-webkit-text-stroke:0.2px #a2a2a2;letter-spacing:0.7px;-webkit-text-stroke:0;">0</div>
<div style="left:1233px;top:548px;width:26px;height:1px;background:#b0b0b0;"></div>
<div style="left:1210.50px;top:544.22px;width:30px;height:7.5px;line-height:7.5px;font-size:7.5px;color:#a2a2a2;text-align:center;white-space:nowrap;-webkit-text-stroke:0.2px #a2a2a2;letter-spacing:0.7px;-webkit-text-stroke:0;">-5</div>
<div style="left:1233px;top:581px;width:26px;height:1px;background:#b0b0b0;"></div>
<div style="left:1210.50px;top:577.22px;width:30px;height:7.5px;line-height:7.5px;font-size:7.5px;color:#a2a2a2;text-align:center;white-space:nowrap;-webkit-text-stroke:0.2px #a2a2a2;letter-spacing:0.7px;-webkit-text-stroke:0;">-10</div>
<div style="left:1233px;top:614px;width:26px;height:1px;background:#b0b0b0;"></div>
<div style="left:1210.50px;top:610.22px;width:30px;height:7.5px;line-height:7.5px;font-size:7.5px;color:#a2a2a2;text-align:center;white-space:nowrap;-webkit-text-stroke:0.2px #a2a2a2;letter-spacing:0.7px;-webkit-text-stroke:0;">-20</div>
<div style="left:1233px;top:647px;width:26px;height:1px;background:#b0b0b0;"></div>
<div style="left:1210.50px;top:643.22px;width:30px;height:7.5px;line-height:7.5px;font-size:7.5px;color:#a2a2a2;text-align:center;white-space:nowrap;-webkit-text-stroke:0.2px #a2a2a2;letter-spacing:0.7px;-webkit-text-stroke:0;">-30</div>
<div style="left:1233px;top:680px;width:26px;height:1px;background:#b0b0b0;"></div>
<div style="left:1210.50px;top:676.22px;width:30px;height:7.5px;line-height:7.5px;font-size:7.5px;color:#a2a2a2;text-align:center;white-space:nowrap;-webkit-text-stroke:0.2px #a2a2a2;letter-spacing:0.7px;-webkit-text-stroke:0;">-50</div>
<div style="left:1233px;top:687px;width:25px;height:52px;background:linear-gradient(to bottom,#9c9c9c 0%,#cacaca 3.4%,#cecece 3.5%,#cecece 14.5%,#c4c4c4 14.6%,#c4c4c4 17%,#8e8e8e 17.1%,#8e8e8e 21%,#a8a8a8 21.1%,#a8a8a8 22%,#8c8c8c 22.1%,#8c8c8c 29.7%,#a0a0a0 29.8%,#a0a0a0 36.5%,#a8a8a8 36.6%,#a8a8a8 39%,#d0d0d0 39.1%,#d0d0d0 45.7%,#ffffff 45.8%,#ffffff 50%,#c0c0c0 50.1%,#c0c0c0 51.2%,#cfcfcf 51.3%,#cfcfcf 58.4%,#bdbdbd 58.5%,#bdbdbd 60%,#cdcdcd 60.1%,#cdcdcd 66%,#bcbcbc 66.1%,#bcbcbc 67.6%,#e6e6e6 67.7%,#e6e6e6 75.5%,#c4c4c4 75.6%,#c4c4c4 77.1%,#dedede 77.2%,#dedede 80.7%,#b2b2b2 80.8%,#b2b2b2 95%,#888888 100%);border-radius:1.5px;"></div>
<div style="left:1214.00px;top:738.33px;width:60px;height:12.5px;line-height:12.5px;font-size:12.5px;color:#fff;text-align:center;white-space:nowrap;-webkit-text-stroke:0.2px #fff;">LR</div>
<div style="left:1271px;top:411.00px;width:4px;height:7.00px;background:#6e1a1a"></div>
<div style="left:1271px;top:421.27px;width:4px;height:7.00px;background:#73451a"></div>
<div style="left:1271px;top:431.55px;width:4px;height:7.00px;background:#73451a"></div>
<div style="left:1271px;top:441.82px;width:4px;height:7.00px;background:#73451a"></div>
<div style="left:1271px;top:452.10px;width:4px;height:7.00px;background:#73451a"></div>
<div style="left:1271px;top:462.38px;width:4px;height:7.00px;background:#73451a"></div>
<div style="left:1271px;top:472.65px;width:4px;height:7.00px;background:#73451a"></div>
<div style="left:1271px;top:482.93px;width:4px;height:7.00px;background:#73451a"></div>
<div style="left:1271px;top:493.20px;width:4px;height:7.00px;background:#73451a"></div>
<div style="left:1271px;top:503.48px;width:4px;height:7.00px;background:#73451a"></div>
<div style="left:1271px;top:513.75px;width:4px;height:7.00px;background:#73451a"></div>
<div style="left:1271px;top:524.02px;width:4px;height:7.00px;background:#73451a"></div>
<div style="left:1271px;top:534.30px;width:4px;height:7.00px;background:#73451a"></div>
<div style="left:1271px;top:544.58px;width:4px;height:7.00px;background:#73451a"></div>
<div style="left:1271px;top:554.85px;width:4px;height:7.00px;background:#73451a"></div>
<div style="left:1271px;top:565.12px;width:4px;height:7.00px;background:#73451a"></div>
<div style="left:1271px;top:575.40px;width:4px;height:7.00px;background:#73451a"></div>
<div style="left:1271px;top:585.67px;width:4px;height:7.00px;background:#283c14"></div>
<div style="left:1271px;top:595.95px;width:4px;height:7.00px;background:#283c14"></div>
<div style="left:1271px;top:606.23px;width:4px;height:7.00px;background:#283c14"></div>
<div style="left:1271px;top:616.50px;width:4px;height:7.00px;background:#283c14"></div>
<div style="left:1271px;top:626.77px;width:4px;height:7.00px;background:#283c14"></div>
<div style="left:1271px;top:637.05px;width:4px;height:7.00px;background:#283c14"></div>
<div style="left:1271px;top:647.33px;width:4px;height:7.00px;background:#283c14"></div>
<div style="left:1271px;top:657.60px;width:4px;height:7.00px;background:#283c14"></div>
<div style="left:1271px;top:667.88px;width:4px;height:7.00px;background:#283c14"></div>
<div style="left:1271px;top:678.15px;width:4px;height:7.00px;background:#283c14"></div>
<div style="left:1271px;top:688.42px;width:4px;height:7.00px;background:#283c14"></div>
<div style="left:1271px;top:698.70px;width:4px;height:7.00px;background:#283c14"></div>
<div style="left:1271px;top:708.98px;width:4px;height:7.00px;background:#283c14"></div>
<div style="left:1271px;top:719.25px;width:4px;height:7.00px;background:#283c14"></div>
<div style="left:1271px;top:729.53px;width:4px;height:7.00px;background:#283c14"></div>
<div style="left:1271px;top:739.80px;width:4px;height:7.00px;background:#283c14"></div>
<div style="left:1276px;top:516px;width:2px;height:71px;background:#f6201a;"></div>
<div style="left:1278px;top:99px;width:2px;height:653px;background:#1a1e25;"></div>
</div></body></html>
